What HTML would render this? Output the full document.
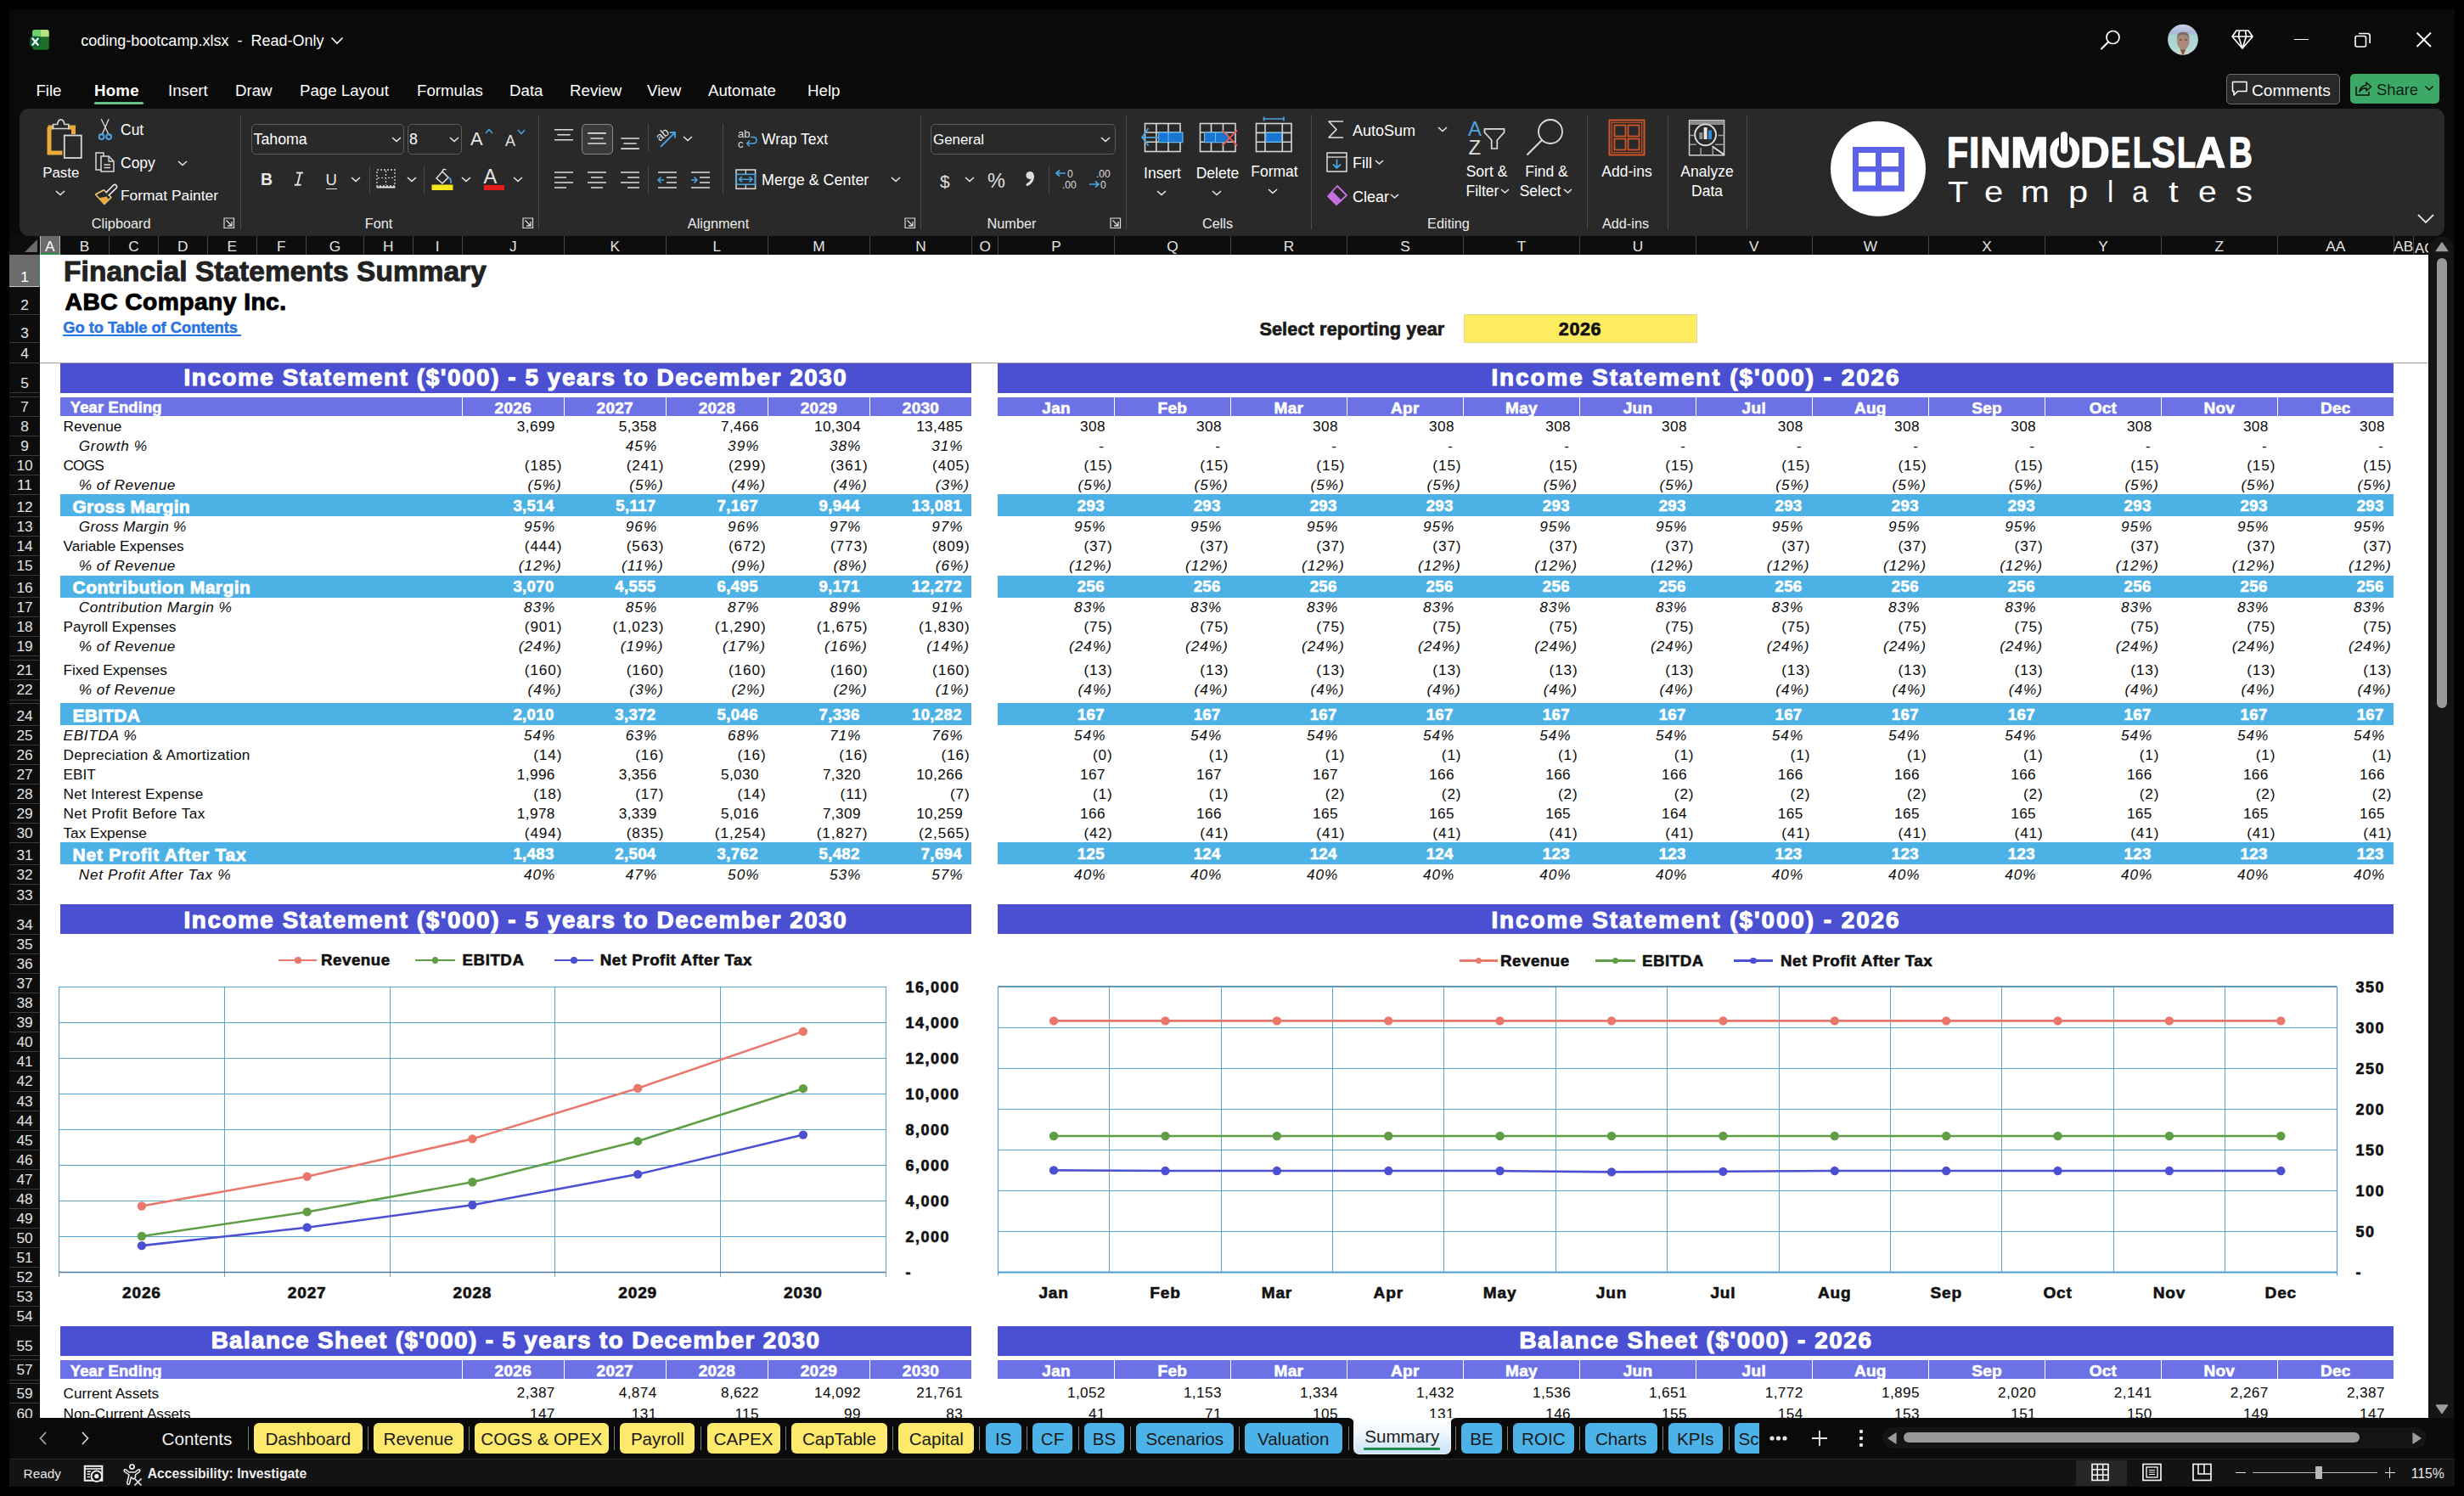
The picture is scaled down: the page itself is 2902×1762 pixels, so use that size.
<!DOCTYPE html><html><head><meta charset="utf-8"><title>coding-bootcamp.xlsx</title><style>
html,body{margin:0;padding:0}
body{width:2902px;height:1762px;background:#000;position:relative;overflow:hidden;font-family:"Liberation Sans",sans-serif}
.a{position:absolute}
.t{position:absolute;white-space:nowrap;line-height:1}
</style></head><body>
<div class="a" style="left:11.00px;top:11.00px;width:2880.00px;height:1740.00px;background:#0a0a0a;"></div>
<svg class="a" style="left:34px;top:34px;" width="26" height="26" viewBox="0 0 26 26">
<rect x="4.2" y="0.9" width="19.5" height="23.8" rx="2.6" fill="#1f6e2c"/>
<path d="M6.8 0.9 H13.6 V9.2 H4.2 V3.5 Q4.2 0.9 6.8 0.9 Z" fill="#6fd26c"/>
<path d="M13.6 0.9 H21.1 Q23.7 0.9 23.7 3.5 V9.2 H13.6 Z" fill="#b6e47a"/>
<rect x="1.1" y="8.7" width="12.4" height="12.2" rx="2.6" fill="#0c5a33"/>
<path d="M4.6 11.6 L10.6 18.7 M10.6 11.6 L4.6 18.7" stroke="#f4fff8" stroke-width="2.3" stroke-linecap="square"/>
</svg>
<div class="t" style="top:38.66px;font-size:18px;color:#ffffff;left:95.30px;white-space:pre;">coding-bootcamp.xlsx  -  Read-Only</div>
<svg class="a" style="left:389px;top:42px;" width="16" height="12" viewBox="0 0 16 12"><path d="M1.5 2.5 L8 9 L14.5 2.5" stroke="#fff" stroke-width="1.6" fill="none"/></svg>
<svg class="a" style="left:2472px;top:33px;" width="28" height="28" viewBox="0 0 28 28"><circle cx="16.5" cy="11" r="7.5" stroke="#fff" stroke-width="1.7" fill="none"/><path d="M11 16.5 L3 24.5" stroke="#fff" stroke-width="1.9" stroke-linecap="round"/></svg>
<svg class="a" style="left:2552px;top:28px;" width="38" height="38" viewBox="0 0 38 38"><defs><clipPath id="av"><circle cx="19" cy="18.6" r="17.9"/></clipPath>
<linearGradient id="avg" x1="0" y1="0" x2="0" y2="1"><stop offset="0" stop-color="#c9d2ee"/><stop offset="0.28" stop-color="#aab8d8"/><stop offset="0.36" stop-color="#a6d2d0"/><stop offset="1" stop-color="#b9dcd8"/></linearGradient></defs>
<g clip-path="url(#av)"><rect width="38" height="38" fill="url(#avg)"/>
<path d="M10 42 Q11 30 19 30 Q27 30 28 42 Z" fill="#d9cfc6"/><path d="M15.5 30 L19 38 L22.5 30 Z" fill="#7a5a48"/>
<ellipse cx="19.2" cy="20.5" rx="7.3" ry="10.2" fill="#ab8a7a"/><path d="M11.8 18 Q12 9 19.2 9.8 Q26.5 9 26.6 18 Q24 12.5 19.2 13 Q14 12.5 11.8 18 Z" fill="#7b6a66"/>
<rect x="14.5" y="18.2" width="3.2" height="1.3" fill="#5d4438"/><rect x="21" y="18.2" width="3.2" height="1.3" fill="#5d4438"/></g></svg>
<svg class="a" style="left:2627px;top:34px;" width="28" height="26" viewBox="0 0 28 26"><path d="M7 2 H21 L26 9 L14 23 L2 9 Z M2 9 H26 M10.5 2 L9.5 9 L14 23 L18.5 9 L17.5 2" stroke="#fff" stroke-width="1.7" fill="none" stroke-linejoin="round"/></svg>
<div class="a" style="left:2702.00px;top:45.50px;width:17.00px;height:1.70px;background:#fff;"></div>
<svg class="a" style="left:2772px;top:37px;" width="22" height="20" viewBox="0 0 22 20"><rect x="2" y="5.5" width="12.5" height="12.5" rx="2" stroke="#fff" stroke-width="1.6" fill="none"/><path d="M6 2.5 H16.5 Q19.2 2.5 19.2 5.2 V14" stroke="#fff" stroke-width="1.6" fill="none"/></svg>
<svg class="a" style="left:2844px;top:36px;" width="22" height="22" viewBox="0 0 22 22"><path d="M2.5 2.5 L19 19 M19 2.5 L2.5 19" stroke="#fff" stroke-width="1.8"/></svg>
<div class="t" style="top:97.77px;font-size:18.7px;color:#ffffff;left:42.40px;">File</div>
<div class="t" style="top:97.77px;font-size:18.7px;color:#ffffff;left:198.00px;">Insert</div>
<div class="t" style="top:97.77px;font-size:18.7px;color:#ffffff;left:277.00px;">Draw</div>
<div class="t" style="top:97.77px;font-size:18.7px;color:#ffffff;left:353.00px;">Page Layout</div>
<div class="t" style="top:97.77px;font-size:18.7px;color:#ffffff;left:491.00px;">Formulas</div>
<div class="t" style="top:97.77px;font-size:18.7px;color:#ffffff;left:600.00px;">Data</div>
<div class="t" style="top:97.77px;font-size:18.7px;color:#ffffff;left:671.00px;">Review</div>
<div class="t" style="top:97.77px;font-size:18.7px;color:#ffffff;left:762.00px;">View</div>
<div class="t" style="top:97.77px;font-size:18.7px;color:#ffffff;left:834.00px;">Automate</div>
<div class="t" style="top:97.77px;font-size:18.7px;color:#ffffff;left:951.00px;">Help</div>
<div class="t" style="top:97.77px;font-size:18.7px;color:#ffffff;font-weight:700;left:111.00px;letter-spacing:0.2px;">Home</div>
<div class="a" style="left:111.00px;top:119.50px;width:58.00px;height:3.30px;background:#66c18c;border-radius:2px;"></div>
<div class="a" style="left:2621.5px;top:87px;width:132px;height:33.5px;border:1px solid #6f6f6f;border-radius:5px;background:#282828"></div>
<svg class="a" style="left:2627px;top:93px;" width="22" height="22" viewBox="0 0 22 22"><path d="M2.5 3.5 H19 V14.5 H8.5 L4 19 V14.5 H2.5 Z" stroke="#fff" stroke-width="1.5" fill="none" stroke-linejoin="round"/></svg>
<div class="t" style="top:96.75px;font-size:19.2px;color:#ffffff;left:2652.00px;">Comments</div>
<div class="a" style="left:2768px;top:87px;width:104.6px;height:35.3px;border-radius:5px;background:#3caa66"></div>
<svg class="a" style="left:2772px;top:93px;" width="22" height="22" viewBox="0 0 22 22"><path d="M3 9 V19 H18 V15" stroke="#111" stroke-width="1.5" fill="none"/><path d="M7 15 Q8 8 15 7.5 V4 L20.5 9.2 L15 14 V10.8 Q10 10.5 7 15 Z" stroke="#111" stroke-width="1.5" fill="none" stroke-linejoin="round"/></svg>
<div class="t" style="top:97.42px;font-size:18.4px;color:#0c1f12;left:2799.00px;">Share</div>
<svg class="a" style="left:2855px;top:99px;" width="12" height="10" viewBox="0 0 12 10"><path d="M1.5 2.5 L6 7 L10.5 2.5" stroke="#111" stroke-width="1.5" fill="none"/></svg>
<div class="a" style="left:23px;top:128px;width:2855.5px;height:149.8px;background:#292929;border-radius:11px"></div>
<div class="a" style="left:282.70px;top:135.00px;width:1.00px;height:135.00px;background:#4b4b4b;"></div>
<div class="a" style="left:633.50px;top:135.00px;width:1.00px;height:135.00px;background:#4b4b4b;"></div>
<div class="a" style="left:1083.70px;top:135.00px;width:1.00px;height:135.00px;background:#4b4b4b;"></div>
<div class="a" style="left:1325.70px;top:135.00px;width:1.00px;height:135.00px;background:#4b4b4b;"></div>
<div class="a" style="left:1544.00px;top:135.00px;width:1.00px;height:135.00px;background:#4b4b4b;"></div>
<div class="a" style="left:1868.60px;top:135.00px;width:1.00px;height:135.00px;background:#4b4b4b;"></div>
<div class="a" style="left:1963.60px;top:135.00px;width:1.00px;height:135.00px;background:#4b4b4b;"></div>
<div class="a" style="left:2056.60px;top:135.00px;width:1.00px;height:135.00px;background:#4b4b4b;"></div>
<svg class="a" style="left:40px;top:130px;" width="70" height="70" viewBox="0 0 70 70">
<path d="M18 20 V50 H33.5" stroke="#eba93a" stroke-width="5" fill="none"/>
<path d="M16.5 20 H23 M40 20 H46.5 V28" stroke="#eba93a" stroke-width="5" fill="none"/>
<path d="M22.6 21.5 V16.5 H27.5 Q28.5 10.8 31.7 10.8 Q34.9 10.8 35.9 16.5 H40.8 V21.5 Z" stroke="#d4d4d4" stroke-width="1.7" fill="#292929"/>
<rect x="35.8" y="29.5" width="20" height="26.5" stroke="#d8d8d8" stroke-width="1.8" fill="#292929"/>
</svg>
<div class="t" style="top:196.19px;font-size:16.9px;color:#ffffff;left:-928.20px;width:2000px;text-align:center;">Paste</div>
<svg class="a" style="left:65.0px;top:222.5px;" width="12" height="9.0" viewBox="0 0 12 9.0"><path d="M1 2 L6.0 6.5 L11 2" stroke="#e6e6e6" stroke-width="1.6" fill="none"/></svg>
<svg class="a" style="left:110px;top:135px;" width="30" height="32" viewBox="0 0 30 32"><path d="M9.3 5.3 L18.6 24.5 M18.1 5.3 L9.8 24.5" stroke="#e0e0e0" stroke-width="1.3"/><circle cx="9.6" cy="26" r="2.9" stroke="#4aa3df" stroke-width="2" fill="none"/><circle cx="18.1" cy="26" r="2.9" stroke="#4aa3df" stroke-width="2" fill="none"/></svg>
<div class="t" style="top:145.19px;font-size:17.5px;color:#ffffff;left:142.00px;">Cut</div>
<svg class="a" style="left:111px;top:178px;" width="28" height="26" viewBox="0 0 28 26"><path d="M2 2 H11 V22 H2 Z" stroke="#d8d8d8" stroke-width="1.5" fill="none"/><path d="M8 6 H17 L23 12 V24 H8 Z" stroke="#d8d8d8" stroke-width="1.5" fill="#292929"/><path d="M17 6 V12 H23 M11.5 16 H19 M11.5 19.5 H19" stroke="#d8d8d8" stroke-width="1.3" fill="none"/></svg>
<div class="t" style="top:183.69px;font-size:17.5px;color:#ffffff;left:142.00px;">Copy</div>
<svg class="a" style="left:209.0px;top:187.5px;" width="12" height="9.0" viewBox="0 0 12 9.0"><path d="M1 2 L6.0 6.5 L11 2" stroke="#e6e6e6" stroke-width="1.6" fill="none"/></svg>
<svg class="a" style="left:111px;top:214px;" width="28" height="30" viewBox="0 0 28 30"><path d="M1.5 15 L11.3 9.8 L20 18.5 L11.8 26.3 Z" fill="#292929" stroke="#f0c870" stroke-width="1.6" stroke-linejoin="round"/><path d="M4.5 19.5 L14.5 17.5 L17 20.5 L11.8 25.5 Z" fill="#eba93a"/><path d="M13.6 13.1 L22.6 4.1 Q24.5 2.6 26 4.2 Q27.4 5.9 25.9 7.6 L16.8 16.3" stroke="#e6e6e6" stroke-width="1.6" fill="#292929" stroke-linejoin="round"/></svg>
<div class="t" style="top:221.77px;font-size:17.4px;color:#ffffff;left:142.00px;">Format Painter</div>
<div class="t" style="top:254.70px;font-size:16.3px;color:#ececec;left:-857.30px;width:2000px;text-align:center;">Clipboard</div>
<svg class="a" style="left:263px;top:256px;" width="14" height="14" viewBox="0 0 14 14"><path d="M1 1 H12.5 V12.5 H1 Z" stroke="#dcdcdc" stroke-width="1.2" fill="none"/><path d="M3.5 3.5 L10 10 M10 5 V10 H5" stroke="#dcdcdc" stroke-width="1.3" fill="none"/></svg>
<div class="a" style="left:295.5px;top:146px;width:178px;height:34px;border:1px solid #5c5c5c;border-radius:5px;background:transparent"></div>
<div class="t" style="top:156.43px;font-size:17.8px;color:#ffffff;left:298.50px;">Tahoma</div>
<svg class="a" style="left:460.5px;top:159.5px;" width="12" height="9.0" viewBox="0 0 12 9.0"><path d="M1 2 L6.0 6.5 L11 2" stroke="#e6e6e6" stroke-width="1.6" fill="none"/></svg>
<div class="a" style="left:479.5px;top:146px;width:62px;height:34px;border:1px solid #5c5c5c;border-radius:5px;background:transparent"></div>
<div class="t" style="top:156.43px;font-size:17.8px;color:#ffffff;left:482.00px;">8</div>
<svg class="a" style="left:528.5px;top:159.5px;" width="12" height="9.0" viewBox="0 0 12 9.0"><path d="M1 2 L6.0 6.5 L11 2" stroke="#e6e6e6" stroke-width="1.6" fill="none"/></svg>
<div class="t" style="top:153.38px;font-size:22px;color:#e6e6e6;left:554.00px;">A</div>
<svg class="a" style="left:570px;top:150px;" width="12" height="10" viewBox="0 0 12 10"><path d="M2 7 L6 2.5 L10 7" stroke="#4aa3df" stroke-width="1.6" fill="none"/></svg>
<div class="t" style="top:156.76px;font-size:18px;color:#e6e6e6;left:595.00px;">A</div>
<svg class="a" style="left:608px;top:150px;" width="12" height="10" viewBox="0 0 12 10"><path d="M2 3 L6 7.5 L10 3" stroke="#4aa3df" stroke-width="1.6" fill="none"/></svg>
<div class="t" style="top:202.49px;font-size:19.5px;color:#e6e6e6;font-weight:700;left:307.00px;">B</div>
<svg class="a" style="left:340px;top:198px;" width="24" height="24" viewBox="0 0 24 24"><path d="M9 5.5 H17 M13.8 5.5 L10.2 19.7 M6.8 19.7 H14.6" stroke="#e0e0e0" stroke-width="1.9" fill="none"/></svg>
<div class="t" style="top:203.34px;font-size:18.5px;color:#e6e6e6;left:383.50px;">U</div>
<div class="a" style="left:383.50px;top:221.50px;width:13.50px;height:1.50px;background:#e6e6e6;"></div>
<svg class="a" style="left:413.0px;top:206.5px;" width="12" height="9.0" viewBox="0 0 12 9.0"><path d="M1 2 L6.0 6.5 L11 2" stroke="#e6e6e6" stroke-width="1.6" fill="none"/></svg>
<div class="a" style="left:434.60px;top:196.00px;width:1.00px;height:32.00px;background:#4b4b4b;"></div>
<svg class="a" style="left:442px;top:198px;" width="26" height="26" viewBox="0 0 26 26"><rect x="2" y="2" width="21" height="19" stroke="#d8d8d8" stroke-width="1.3" fill="none" stroke-dasharray="2 2"/><path d="M12.5 3 V20 M3 11.5 H22" stroke="#d8d8d8" stroke-width="1.2" stroke-dasharray="2 2"/><path d="M1.5 22.5 H23.5" stroke="#e6e6e6" stroke-width="2"/></svg>
<svg class="a" style="left:478.5px;top:206.5px;" width="12" height="9.0" viewBox="0 0 12 9.0"><path d="M1 2 L6.0 6.5 L11 2" stroke="#e6e6e6" stroke-width="1.6" fill="none"/></svg>
<div class="a" style="left:499.00px;top:196.00px;width:1.00px;height:32.00px;background:#4b4b4b;"></div>
<svg class="a" style="left:507px;top:197px;" width="28" height="30" viewBox="0 0 28 30"><path d="M7 13 L14 5 L21 12 L14 19 Z" stroke="#e6e6e6" stroke-width="1.5" fill="none"/><path d="M14 5 Q15 1 18.5 3" stroke="#e6e6e6" stroke-width="1.4" fill="none"/><path d="M21 12 Q25 14 24 19" stroke="#4aa3df" stroke-width="1.8" fill="none"/><rect x="1.5" y="20.5" width="25" height="6.5" fill="#f5e71b"/></svg>
<svg class="a" style="left:543.0px;top:206.5px;" width="12" height="9.0" viewBox="0 0 12 9.0"><path d="M1 2 L6.0 6.5 L11 2" stroke="#e6e6e6" stroke-width="1.6" fill="none"/></svg>
<div class="t" style="top:197.41px;font-size:23.5px;color:#e6e6e6;left:569.50px;">A</div>
<div class="a" style="left:569.50px;top:217.50px;width:24.50px;height:6.80px;background:#e51b1b;"></div>
<svg class="a" style="left:604.0px;top:206.5px;" width="12" height="9.0" viewBox="0 0 12 9.0"><path d="M1 2 L6.0 6.5 L11 2" stroke="#e6e6e6" stroke-width="1.6" fill="none"/></svg>
<div class="t" style="top:254.70px;font-size:16.3px;color:#ececec;left:-554.00px;width:2000px;text-align:center;">Font</div>
<svg class="a" style="left:615px;top:256px;" width="14" height="14" viewBox="0 0 14 14"><path d="M1 1 H12.5 V12.5 H1 Z" stroke="#dcdcdc" stroke-width="1.2" fill="none"/><path d="M3.5 3.5 L10 10 M10 5 V10 H5" stroke="#dcdcdc" stroke-width="1.3" fill="none"/></svg>
<svg class="a" style="left:650px;top:146px;" width="30" height="30" viewBox="0 0 30 30"><path d="M3 6.7 H25 M6.4 12.8 H21.7 M3 18.8 H25 " stroke="#dedede" stroke-width="1.6" fill="none"/></svg>
<div class="a" style="left:685px;top:146px;width:35px;height:34px;border:1px solid #8a8a8a;border-radius:5px;background:#3a3a3a"></div>
<svg class="a" style="left:688px;top:149px;" width="30" height="30" viewBox="0 0 30 30"><path d="M4.2 7.9 H25.9 M7.4 14 H22.7 M4.2 20 H25.9 " stroke="#dedede" stroke-width="1.6" fill="none"/></svg>
<svg class="a" style="left:729px;top:149px;" width="30" height="30" viewBox="0 0 30 30"><path d="M2.3 14 H23.9 M5.4 20 H20.7 M2.3 26.1 H23.9 " stroke="#dedede" stroke-width="1.6" fill="none"/></svg>
<div class="a" style="left:763.00px;top:146.00px;width:1.00px;height:32.00px;background:#4b4b4b;"></div>
<svg class="a" style="left:770px;top:146px;" width="32" height="32" viewBox="0 0 32 32"><text x="2" y="17" transform="rotate(-40 10 12)" font-size="14" fill="#dedede" font-family="Liberation Sans">ab</text><path d="M8 27 L25 10 M18.5 10 H25 V16.5" stroke="#4aa3df" stroke-width="1.8" fill="none"/></svg>
<svg class="a" style="left:804.0px;top:158.5px;" width="12" height="9.0" viewBox="0 0 12 9.0"><path d="M1 2 L6.0 6.5 L11 2" stroke="#e6e6e6" stroke-width="1.6" fill="none"/></svg>
<svg class="a" style="left:650px;top:197px;" width="30" height="30" viewBox="0 0 30 30"><path d="M3 6 H25 M3 12 H17 M3 18 H25 M3 24 H17 " stroke="#dedede" stroke-width="1.6" fill="none"/></svg>
<svg class="a" style="left:689px;top:197px;" width="30" height="30" viewBox="0 0 30 30"><path d="M3 6 H25 M7 12 H21 M3 18 H25 M7 24 H21 " stroke="#dedede" stroke-width="1.6" fill="none"/></svg>
<svg class="a" style="left:728px;top:197px;" width="30" height="30" viewBox="0 0 30 30"><path d="M3 6 H25 M11 12 H25 M3 18 H25 M11 24 H25 " stroke="#dedede" stroke-width="1.6" fill="none"/></svg>
<div class="a" style="left:763.00px;top:196.00px;width:1.00px;height:32.00px;background:#4b4b4b;"></div>
<svg class="a" style="left:772px;top:197px;" width="30" height="30" viewBox="0 0 30 30"><path d="M3 6 H25 M13 12 H25 M13 18 H25 M3 24 H25" stroke="#dedede" stroke-width="1.6"/><path d="M10 15 H3 M6.5 11.5 L3 15 L6.5 18.5" stroke="#4aa3df" stroke-width="1.6" fill="none"/></svg>
<svg class="a" style="left:811px;top:197px;" width="30" height="30" viewBox="0 0 30 30"><path d="M3 6 H25 M13 12 H25 M13 18 H25 M3 24 H25" stroke="#dedede" stroke-width="1.6"/><path d="M3 15 H10 M6.5 11.5 L10 15 L6.5 18.5" stroke="#4aa3df" stroke-width="1.6" fill="none"/></svg>
<div class="a" style="left:851.00px;top:146.00px;width:1.00px;height:82.00px;background:#4b4b4b;"></div>
<svg class="a" style="left:868px;top:151px;" width="26" height="26" viewBox="0 0 26 26"><text x="1" y="11" font-size="13" fill="#dedede" font-family="Liberation Sans">ab</text><text x="1" y="23" font-size="13" fill="#dedede" font-family="Liberation Sans">c</text><path d="M13 18 H19 Q23 18 23 14 Q23 10.5 19 10.5 H16 M11.5 18 L15 14.5 M11.5 18 L15 21.5" stroke="#4aa3df" stroke-width="1.6" fill="none"/></svg>
<div class="t" style="top:156.19px;font-size:17.5px;color:#ffffff;left:897.00px;">Wrap Text</div>
<svg class="a" style="left:865px;top:197px;" width="28" height="28" viewBox="0 0 28 28"><rect x="2" y="3" width="22.6" height="22.3" stroke="#dedede" stroke-width="1.5" fill="none"/><path d="M13.3 3 V8.5 M13.3 20 V25.3" stroke="#dedede" stroke-width="1.3"/><rect x="2.4" y="8.3" width="21.8" height="11.9" stroke="#4aa3df" stroke-width="1.6" fill="#292929"/><path d="M5.5 14.2 H21 M9 11 L5.5 14.2 L9 17.4 M17.5 11 L21 14.2 L17.5 17.4" stroke="#4aa3df" stroke-width="1.6" fill="none"/></svg>
<div class="t" style="top:203.85px;font-size:17.9px;color:#ffffff;left:897.00px;">Merge &amp; Center</div>
<svg class="a" style="left:1048.5px;top:206.5px;" width="12" height="9.0" viewBox="0 0 12 9.0"><path d="M1 2 L6.0 6.5 L11 2" stroke="#e6e6e6" stroke-width="1.6" fill="none"/></svg>
<div class="t" style="top:254.70px;font-size:16.3px;color:#ececec;left:-154.00px;width:2000px;text-align:center;">Alignment</div>
<svg class="a" style="left:1065px;top:256px;" width="14" height="14" viewBox="0 0 14 14"><path d="M1 1 H12.5 V12.5 H1 Z" stroke="#dcdcdc" stroke-width="1.2" fill="none"/><path d="M3.5 3.5 L10 10 M10 5 V10 H5" stroke="#dcdcdc" stroke-width="1.3" fill="none"/></svg>
<div class="a" style="left:1096px;top:146px;width:216px;height:34px;border:1px solid #5c5c5c;border-radius:5px;background:transparent"></div>
<div class="t" style="top:156.69px;font-size:16.9px;color:#ffffff;left:1099.00px;">General</div>
<svg class="a" style="left:1296.0px;top:159.5px;" width="12" height="9.0" viewBox="0 0 12 9.0"><path d="M1 2 L6.0 6.5 L11 2" stroke="#e6e6e6" stroke-width="1.6" fill="none"/></svg>
<div class="t" style="top:203.22px;font-size:21px;color:#dedede;left:1107.00px;">$</div>
<svg class="a" style="left:1136.0px;top:206.5px;" width="12" height="9.0" viewBox="0 0 12 9.0"><path d="M1 2 L6.0 6.5 L11 2" stroke="#e6e6e6" stroke-width="1.6" fill="none"/></svg>
<div class="t" style="top:201.61px;font-size:23.5px;color:#dedede;left:1163.00px;">%</div>
<svg class="a" style="left:1204px;top:198px;" width="20" height="26" viewBox="0 0 20 26"><circle cx="9" cy="8.5" r="4.6" fill="#dedede"/><path d="M12.6 9.5 Q12.5 16 6 19.5" stroke="#dedede" stroke-width="3" fill="none" stroke-linecap="round"/></svg>
<div class="a" style="left:1235.00px;top:196.00px;width:1.00px;height:32.00px;background:#4b4b4b;"></div>
<svg class="a" style="left:1242px;top:196px;" width="30" height="32" viewBox="0 0 30 32"><text x="15" y="13" font-size="12" fill="#dedede" font-family="Liberation Sans">0</text><text x="9" y="26" font-size="12" fill="#dedede" font-family="Liberation Sans">.00</text><path d="M13 8 H2 M6 4.5 L2 8 L6 11.5" stroke="#4aa3df" stroke-width="1.7" fill="none"/></svg>
<svg class="a" style="left:1281px;top:196px;" width="30" height="32" viewBox="0 0 30 32"><text x="10" y="13" font-size="12" fill="#dedede" font-family="Liberation Sans">.00</text><text x="15" y="26" font-size="12" fill="#dedede" font-family="Liberation Sans">0</text><path d="M2 21 H13 M9 17.5 L13 21 L9 24.5" stroke="#4aa3df" stroke-width="1.7" fill="none"/></svg>
<div class="t" style="top:254.70px;font-size:16.3px;color:#ececec;left:191.50px;width:2000px;text-align:center;">Number</div>
<svg class="a" style="left:1307px;top:256px;" width="14" height="14" viewBox="0 0 14 14"><path d="M1 1 H12.5 V12.5 H1 Z" stroke="#dcdcdc" stroke-width="1.2" fill="none"/><path d="M3.5 3.5 L10 10 M10 5 V10 H5" stroke="#dcdcdc" stroke-width="1.3" fill="none"/></svg>
<svg class="a" style="left:1340px;top:130px;" width="190" height="52" viewBox="0 0 190 52">
<rect x="8.5" y="15.5" width="41.5" height="33" stroke="#d6d6d6" stroke-width="1.6" fill="none"/>
<path d="M21.8 15.5 V48.5 M36 15.5 V48.5 M8.5 26 H50 M8.5 37.3 H50" stroke="#d6d6d6" stroke-width="1.6" fill="none"/>
<rect x="24.6" y="26" width="28.4" height="11.7" fill="#1a74d1" stroke="#6bbcf0" stroke-width="1.1"/>
<path d="M36 26 V37.7" stroke="#6bbcf0" stroke-width="1.1"/>
<path d="M25 31.8 H5.5 M12.5 21 L5 31.8 L12.5 41.5" stroke="#4aa3df" stroke-width="1.7" fill="none"/>
<rect x="73.5" y="15.5" width="41.5" height="33" stroke="#d6d6d6" stroke-width="1.6" fill="none"/>
<path d="M86.5 15.5 V48.5 M100.5 15.5 V48.5 M73.5 26 H115 M73.5 37.3 H115" stroke="#d6d6d6" stroke-width="1.6" fill="none"/>
<path d="M78.6 26 H103.8 L108 31.8 L103.8 37.7 H78.6 Z" fill="#1a74d1" stroke="#6bbcf0" stroke-width="1.1"/>
<path d="M91.5 26 V37.7" stroke="#6bbcf0" stroke-width="1.1"/>
<path d="M99.5 23.5 L117 41.5 M117 23.5 L99.5 41.5" stroke="#e05a52" stroke-width="1.8"/>
<rect x="139.5" y="15.5" width="41.5" height="33" stroke="#d6d6d6" stroke-width="1.6" fill="none"/>
<path d="M150 15.5 V48.5 M170.3 15.5 V48.5 M139.5 26.4 H181 M139.5 37.3 H181" stroke="#d6d6d6" stroke-width="1.6" fill="none"/>
<rect x="150.8" y="26.4" width="18.7" height="10.9" fill="#1a74d1" stroke="#6bbcf0" stroke-width="1.1"/>
<path d="M148.5 10 H172 M148.5 7.5 V12.5 M172 7.5 V12.5" stroke="#4aa3df" stroke-width="1.7"/>
</svg>
<div class="t" style="top:196.19px;font-size:17.5px;color:#ffffff;left:369.00px;width:2000px;text-align:center;">Insert</div>
<svg class="a" style="left:1362.0px;top:222.5px;" width="12" height="9.0" viewBox="0 0 12 9.0"><path d="M1 2 L6.0 6.5 L11 2" stroke="#e6e6e6" stroke-width="1.6" fill="none"/></svg>
<div class="t" style="top:196.19px;font-size:17.5px;color:#ffffff;left:434.00px;width:2000px;text-align:center;">Delete</div>
<svg class="a" style="left:1427.0px;top:222.5px;" width="12" height="9.0" viewBox="0 0 12 9.0"><path d="M1 2 L6.0 6.5 L11 2" stroke="#e6e6e6" stroke-width="1.6" fill="none"/></svg>
<div class="t" style="top:194.19px;font-size:17.5px;color:#ffffff;left:501.00px;width:2000px;text-align:center;">Format</div>
<svg class="a" style="left:1493.0px;top:220.5px;" width="12" height="9.0" viewBox="0 0 12 9.0"><path d="M1 2 L6.0 6.5 L11 2" stroke="#e6e6e6" stroke-width="1.6" fill="none"/></svg>
<div class="t" style="top:254.70px;font-size:16.3px;color:#ececec;left:434.00px;width:2000px;text-align:center;">Cells</div>
<svg class="a" style="left:1562px;top:140px;" width="24" height="26" viewBox="0 0 24 26"><path d="M20 3 H3 L12 12.5 L3 22 H20" stroke="#dedede" stroke-width="1.7" fill="none" stroke-linejoin="round"/></svg>
<div class="t" style="top:144.76px;font-size:18px;color:#ffffff;left:1593.00px;">AutoSum</div>
<svg class="a" style="left:1693.0px;top:148.0px;" width="12" height="9.0" viewBox="0 0 12 9.0"><path d="M1 2 L6.0 6.5 L11 2" stroke="#e6e6e6" stroke-width="1.6" fill="none"/></svg>
<svg class="a" style="left:1561px;top:178px;" width="28" height="27" viewBox="0 0 28 27"><rect x="2" y="2" width="23" height="22" stroke="#dedede" stroke-width="1.5" fill="none"/><path d="M2 7 H25" stroke="#dedede" stroke-width="1.3"/><path d="M13.5 9.5 V20 M9 15.5 L13.5 20 L18 15.5" stroke="#4aa3df" stroke-width="1.8" fill="none"/></svg>
<div class="t" style="top:182.76px;font-size:18px;color:#ffffff;left:1593.00px;">Fill</div>
<svg class="a" style="left:1618.5px;top:186.75px;" width="11" height="8.5" viewBox="0 0 11 8.5"><path d="M1 2 L5.5 6.0 L10 2" stroke="#e6e6e6" stroke-width="1.6" fill="none"/></svg>
<svg class="a" style="left:1561px;top:216px;" width="28" height="28" viewBox="0 0 28 28"><path d="M14 3 L25 14 L13 25 L3 15 Z" stroke="#c86fe0" stroke-width="1.8" fill="none" stroke-linejoin="round"/><path d="M8 10 L19 21" stroke="#c86fe0" stroke-width="1.6"/><path d="M3 15 L8 10 L19 21 L13 25 Z" fill="#c86fe0"/></svg>
<div class="t" style="top:222.76px;font-size:18px;color:#ffffff;left:1593.00px;">Clear</div>
<svg class="a" style="left:1636.5px;top:226.75px;" width="11" height="8.5" viewBox="0 0 11 8.5"><path d="M1 2 L5.5 6.0 L10 2" stroke="#e6e6e6" stroke-width="1.6" fill="none"/></svg>
<svg class="a" style="left:1720px;top:130px;" width="60" height="60" viewBox="0 0 60 60"><text x="9" y="30" font-size="24" fill="#4aa3df" font-family="Liberation Sans">A</text><text x="9.5" y="51.5" font-size="24" fill="#dedede" font-family="Liberation Sans">Z</text><path d="M28.5 21.8 H51.5 V26 L43.3 35 V45 H36.7 V35 L28.5 26 Z" stroke="#dedede" stroke-width="1.7" fill="none" stroke-linejoin="miter"/></svg>
<div class="t" style="top:194.19px;font-size:17.5px;color:#ffffff;left:751.00px;width:2000px;text-align:center;">Sort &amp;</div>
<div class="t" style="top:217.19px;font-size:17.5px;color:#ffffff;left:746.00px;width:2000px;text-align:center;">Filter</div>
<svg class="a" style="left:1766.5px;top:221.25px;" width="11" height="8.5" viewBox="0 0 11 8.5"><path d="M1 2 L5.5 6.0 L10 2" stroke="#e6e6e6" stroke-width="1.6" fill="none"/></svg>
<svg class="a" style="left:1796px;top:139px;" width="50" height="46" viewBox="0 0 50 46"><circle cx="30" cy="16" r="14" stroke="#dedede" stroke-width="1.8" fill="none"/><path d="M20 26 L3 43" stroke="#dedede" stroke-width="2" stroke-linecap="round"/></svg>
<div class="t" style="top:194.19px;font-size:17.5px;color:#ffffff;left:821.50px;width:2000px;text-align:center;">Find &amp;</div>
<div class="t" style="top:217.19px;font-size:17.5px;color:#ffffff;left:814.00px;width:2000px;text-align:center;">Select</div>
<svg class="a" style="left:1840.5px;top:221.25px;" width="11" height="8.5" viewBox="0 0 11 8.5"><path d="M1 2 L5.5 6.0 L10 2" stroke="#e6e6e6" stroke-width="1.6" fill="none"/></svg>
<div class="t" style="top:254.70px;font-size:16.3px;color:#ececec;left:706.00px;width:2000px;text-align:center;">Editing</div>
<svg class="a" style="left:1880px;top:130px;" width="70" height="60" viewBox="0 0 70 60"><rect x="15.5" y="11.5" width="41" height="41" stroke="#d2552b" stroke-width="2" fill="none"/><rect x="18.3" y="14.3" width="35.4" height="35.4" stroke="#d2552b" stroke-width="1.1" fill="none"/><rect x="21.5" y="17.5" width="13" height="13" stroke="#d2552b" stroke-width="1.8" fill="none"/><rect x="37.5" y="17.5" width="13" height="13" stroke="#d2552b" stroke-width="1.8" fill="none"/><rect x="21.5" y="33.5" width="13" height="13" stroke="#d2552b" stroke-width="1.8" fill="none"/><rect x="37.5" y="33.5" width="13" height="13" stroke="#d2552b" stroke-width="1.8" fill="none"/></svg>
<div class="t" style="top:194.19px;font-size:17.5px;color:#ffffff;left:916.00px;width:2000px;text-align:center;">Add-ins</div>
<div class="t" style="top:254.70px;font-size:16.3px;color:#ececec;left:914.50px;width:2000px;text-align:center;">Add-ins</div>
<svg class="a" style="left:1980px;top:130px;" width="60" height="60" viewBox="0 0 60 60"><rect x="9.6" y="11.8" width="41" height="41" stroke="#d4d4d4" stroke-width="1.5" fill="none"/><rect x="10" y="12" width="40.4" height="5" fill="#8d8d8d"/><path d="M10 29.5 H15.5 M43.5 29.5 H50.5 M10 40.2 H18 M40 40.2 H50.5 M23.2 44 V52.5 M37.3 44 V52.5" stroke="#9a9a9a" stroke-width="1.6"/><circle cx="28.6" cy="28.8" r="12.4" stroke="#e0e0e0" stroke-width="1.9" fill="#292929"/><rect x="21.3" y="26" width="4" height="8" fill="#8d8d8d"/><rect x="26.6" y="20" width="4" height="14" fill="#e6e6e6"/><rect x="32" y="23.4" width="4" height="10.6" fill="#2f8de0"/><path d="M36.6 42.2 L50.7 52.2" stroke="#e0e0e0" stroke-width="2"/></svg>
<div class="t" style="top:194.19px;font-size:17.5px;color:#ffffff;left:1010.50px;width:2000px;text-align:center;">Analyze</div>
<div class="t" style="top:217.19px;font-size:17.5px;color:#ffffff;left:1010.50px;width:2000px;text-align:center;">Data</div>
<svg class="a" style="left:2150px;top:140px;" width="122" height="122" viewBox="0 0 122 122"><circle cx="62" cy="58.7" r="56" fill="#fff"/><rect x="32" y="33" width="61" height="52.5" fill="#5b62e6"/><rect x="39" y="40" width="20" height="16" fill="#fff"/><rect x="66" y="40" width="20" height="16" fill="#fff"/><rect x="39" y="62.5" width="20" height="16" fill="#fff"/><rect x="66" y="62.5" width="20" height="16" fill="#fff"/></svg>
<div class="t" style="left:2293.24px;top:155.41px;font-size:50.2px;color:#fff;font-weight:700;transform:scaleX(0.816);transform-origin:0 0;-webkit-text-stroke:1.4px #fff">F</div>
<div class="t" style="left:2319.04px;top:155.41px;font-size:50.2px;color:#fff;font-weight:700;transform:scaleX(0.884);transform-origin:0 0;-webkit-text-stroke:1.4px #fff">I</div>
<div class="t" style="left:2331.68px;top:155.41px;font-size:50.2px;color:#fff;font-weight:700;transform:scaleX(1.003);transform-origin:0 0;-webkit-text-stroke:1.4px #fff">N</div>
<div class="t" style="left:2368.48px;top:155.41px;font-size:50.2px;color:#fff;font-weight:700;transform:scaleX(1.070);transform-origin:0 0;-webkit-text-stroke:1.4px #fff">M</div>
<div class="t" style="left:2412.77px;top:155.41px;font-size:50.2px;color:#fff;font-weight:700;transform:scaleX(0.962);transform-origin:0 0;-webkit-text-stroke:1.4px #fff">O</div>
<div class="t" style="left:2450.41px;top:155.41px;font-size:50.2px;color:#fff;font-weight:700;transform:scaleX(0.961);transform-origin:0 0;-webkit-text-stroke:1.4px #fff">D</div>
<div class="t" style="left:2486.23px;top:155.41px;font-size:50.2px;color:#fff;font-weight:700;transform:scaleX(0.687);transform-origin:0 0;-webkit-text-stroke:1.4px #fff">E</div>
<div class="t" style="left:2511.90px;top:155.41px;font-size:50.2px;color:#fff;font-weight:700;transform:scaleX(0.697);transform-origin:0 0;-webkit-text-stroke:1.4px #fff">L</div>
<div class="t" style="left:2533.71px;top:155.41px;font-size:50.2px;color:#fff;font-weight:700;transform:scaleX(0.840);transform-origin:0 0;-webkit-text-stroke:1.4px #fff">S</div>
<div class="t" style="left:2563.53px;top:155.41px;font-size:50.2px;color:#fff;font-weight:700;transform:scaleX(0.720);transform-origin:0 0;-webkit-text-stroke:1.4px #fff">L</div>
<div class="t" style="left:2586.33px;top:155.41px;font-size:50.2px;color:#fff;font-weight:700;transform:scaleX(0.967);transform-origin:0 0;-webkit-text-stroke:1.4px #fff">A</div>
<div class="t" style="left:2624.60px;top:155.41px;font-size:50.2px;color:#fff;font-weight:700;transform:scaleX(0.765);transform-origin:0 0;-webkit-text-stroke:1.4px #fff">B</div>
<div class="a" style="left:2425.30px;top:150.00px;width:12.10px;height:22.00px;background:#292929;"></div>
<div class="a" style="left:2427.3px;top:154.7px;width:8.1px;height:26.8px;background:#fff;border-radius:4px"></div>
<div class="t" style="left:2294.30px;top:207.67px;font-size:35px;color:#fff;font-weight:400;transform:scaleX(1.137);transform-origin:0 0;-webkit-text-stroke:0px #fff">T</div>
<div class="t" style="left:2336.89px;top:207.67px;font-size:35px;color:#fff;font-weight:400;transform:scaleX(1.143);transform-origin:0 0;-webkit-text-stroke:0px #fff">e</div>
<div class="t" style="left:2380.45px;top:207.67px;font-size:35px;color:#fff;font-weight:400;transform:scaleX(1.159);transform-origin:0 0;-webkit-text-stroke:0px #fff">m</div>
<div class="t" style="left:2435.98px;top:207.67px;font-size:35px;color:#fff;font-weight:400;transform:scaleX(1.192);transform-origin:0 0;-webkit-text-stroke:0px #fff">p</div>
<div class="t" style="left:2481.60px;top:207.67px;font-size:35px;color:#fff;font-weight:400;transform:scaleX(0.926);transform-origin:0 0;-webkit-text-stroke:0px #fff">l</div>
<div class="t" style="left:2511.05px;top:207.67px;font-size:35px;color:#fff;font-weight:400;transform:scaleX(0.974);transform-origin:0 0;-webkit-text-stroke:0px #fff">a</div>
<div class="t" style="left:2554.30px;top:207.67px;font-size:35px;color:#fff;font-weight:400;transform:scaleX(1.203);transform-origin:0 0;-webkit-text-stroke:0px #fff">t</div>
<div class="t" style="left:2588.71px;top:207.67px;font-size:35px;color:#fff;font-weight:400;transform:scaleX(1.120);transform-origin:0 0;-webkit-text-stroke:0px #fff">e</div>
<div class="t" style="left:2632.59px;top:207.67px;font-size:35px;color:#fff;font-weight:400;transform:scaleX(1.138);transform-origin:0 0;-webkit-text-stroke:0px #fff">s</div>
<svg class="a" style="left:2845px;top:250px;" width="24" height="16" viewBox="0 0 24 16"><path d="M3 3 L12 12 L21 3" stroke="#e6e6e6" stroke-width="1.8" fill="none"/></svg>
<div class="a" style="left:11.00px;top:278.00px;width:2849.00px;height:22.00px;background:#0d0d0d;"></div>
<svg class="a" style="left:28px;top:281px;" width="18" height="17" viewBox="0 0 18 17"><path d="M16 1 V16 H1 Z" fill="#6a6a6a"/></svg>
<div class="a" style="left:2842px;top:278px;width:18px;height:22px;overflow:hidden"><div class="t" style="left:2px;top:283.5px;top:5.5px;font-size:17px;color:#e3e3e3">AC</div></div>
<div class="a" style="left:47.00px;top:278.00px;width:23.60px;height:22.00px;background:#6b6b6b;"></div>
<div class="a" style="left:47.00px;top:298.30px;width:24.10px;height:2.20px;background:#2e8a4e;"></div>
<div class="a" style="left:46.50px;top:278.00px;width:1.00px;height:22.00px;background:#bdbdbd;"></div>
<div class="a" style="left:70.10px;top:278.00px;width:1.00px;height:22.00px;background:#bdbdbd;"></div>
<div class="t" style="top:281.56px;font-size:17.3px;color:#ffffff;left:-941.20px;width:2000px;text-align:center;">A</div>
<div class="a" style="left:128.10px;top:278.00px;width:1.00px;height:22.00px;background:#454545;"></div>
<div class="t" style="top:281.56px;font-size:17.3px;color:#e3e3e3;left:-900.40px;width:2000px;text-align:center;">B</div>
<div class="a" style="left:185.80px;top:278.00px;width:1.00px;height:22.00px;background:#454545;"></div>
<div class="t" style="top:281.56px;font-size:17.3px;color:#e3e3e3;left:-842.55px;width:2000px;text-align:center;">C</div>
<div class="a" style="left:243.70px;top:278.00px;width:1.00px;height:22.00px;background:#454545;"></div>
<div class="t" style="top:281.56px;font-size:17.3px;color:#e3e3e3;left:-784.75px;width:2000px;text-align:center;">D</div>
<div class="a" style="left:301.70px;top:278.00px;width:1.00px;height:22.00px;background:#454545;"></div>
<div class="t" style="top:281.56px;font-size:17.3px;color:#e3e3e3;left:-726.80px;width:2000px;text-align:center;">E</div>
<div class="a" style="left:359.90px;top:278.00px;width:1.00px;height:22.00px;background:#454545;"></div>
<div class="t" style="top:281.56px;font-size:17.3px;color:#e3e3e3;left:-668.70px;width:2000px;text-align:center;">F</div>
<div class="a" style="left:427.90px;top:278.00px;width:1.00px;height:22.00px;background:#454545;"></div>
<div class="t" style="top:281.56px;font-size:17.3px;color:#e3e3e3;left:-605.60px;width:2000px;text-align:center;">G</div>
<div class="a" style="left:485.60px;top:278.00px;width:1.00px;height:22.00px;background:#454545;"></div>
<div class="t" style="top:281.56px;font-size:17.3px;color:#e3e3e3;left:-542.75px;width:2000px;text-align:center;">H</div>
<div class="a" style="left:543.80px;top:278.00px;width:1.00px;height:22.00px;background:#454545;"></div>
<div class="t" style="top:281.56px;font-size:17.3px;color:#e3e3e3;left:-484.80px;width:2000px;text-align:center;">I</div>
<div class="a" style="left:663.80px;top:278.00px;width:1.00px;height:22.00px;background:#454545;"></div>
<div class="t" style="top:281.56px;font-size:17.3px;color:#e3e3e3;left:-395.70px;width:2000px;text-align:center;">J</div>
<div class="a" style="left:783.70px;top:278.00px;width:1.00px;height:22.00px;background:#454545;"></div>
<div class="t" style="top:281.56px;font-size:17.3px;color:#e3e3e3;left:-275.75px;width:2000px;text-align:center;">K</div>
<div class="a" style="left:904.00px;top:278.00px;width:1.00px;height:22.00px;background:#454545;"></div>
<div class="t" style="top:281.56px;font-size:17.3px;color:#e3e3e3;left:-155.65px;width:2000px;text-align:center;">L</div>
<div class="a" style="left:1023.90px;top:278.00px;width:1.00px;height:22.00px;background:#454545;"></div>
<div class="t" style="top:281.56px;font-size:17.3px;color:#e3e3e3;left:-35.55px;width:2000px;text-align:center;">M</div>
<div class="a" style="left:1144.10px;top:278.00px;width:1.00px;height:22.00px;background:#454545;"></div>
<div class="t" style="top:281.56px;font-size:17.3px;color:#e3e3e3;left:84.50px;width:2000px;text-align:center;">N</div>
<div class="a" style="left:1175.20px;top:278.00px;width:1.00px;height:22.00px;background:#454545;"></div>
<div class="t" style="top:281.56px;font-size:17.3px;color:#e3e3e3;left:160.15px;width:2000px;text-align:center;">O</div>
<div class="a" style="left:1312.00px;top:278.00px;width:1.00px;height:22.00px;background:#454545;"></div>
<div class="t" style="top:281.56px;font-size:17.3px;color:#e3e3e3;left:244.10px;width:2000px;text-align:center;">P</div>
<div class="a" style="left:1448.90px;top:278.00px;width:1.00px;height:22.00px;background:#454545;"></div>
<div class="t" style="top:281.56px;font-size:17.3px;color:#e3e3e3;left:380.95px;width:2000px;text-align:center;">Q</div>
<div class="a" style="left:1585.90px;top:278.00px;width:1.00px;height:22.00px;background:#454545;"></div>
<div class="t" style="top:281.56px;font-size:17.3px;color:#e3e3e3;left:517.90px;width:2000px;text-align:center;">R</div>
<div class="a" style="left:1722.90px;top:278.00px;width:1.00px;height:22.00px;background:#454545;"></div>
<div class="t" style="top:281.56px;font-size:17.3px;color:#e3e3e3;left:654.90px;width:2000px;text-align:center;">S</div>
<div class="a" style="left:1860.10px;top:278.00px;width:1.00px;height:22.00px;background:#454545;"></div>
<div class="t" style="top:281.56px;font-size:17.3px;color:#e3e3e3;left:792.00px;width:2000px;text-align:center;">T</div>
<div class="a" style="left:1996.90px;top:278.00px;width:1.00px;height:22.00px;background:#454545;"></div>
<div class="t" style="top:281.56px;font-size:17.3px;color:#e3e3e3;left:929.00px;width:2000px;text-align:center;">U</div>
<div class="a" style="left:2133.70px;top:278.00px;width:1.00px;height:22.00px;background:#454545;"></div>
<div class="t" style="top:281.56px;font-size:17.3px;color:#e3e3e3;left:1065.80px;width:2000px;text-align:center;">V</div>
<div class="a" style="left:2271.00px;top:278.00px;width:1.00px;height:22.00px;background:#454545;"></div>
<div class="t" style="top:281.56px;font-size:17.3px;color:#e3e3e3;left:1202.85px;width:2000px;text-align:center;">W</div>
<div class="a" style="left:2408.10px;top:278.00px;width:1.00px;height:22.00px;background:#454545;"></div>
<div class="t" style="top:281.56px;font-size:17.3px;color:#e3e3e3;left:1340.05px;width:2000px;text-align:center;">X</div>
<div class="a" style="left:2544.80px;top:278.00px;width:1.00px;height:22.00px;background:#454545;"></div>
<div class="t" style="top:281.56px;font-size:17.3px;color:#e3e3e3;left:1476.95px;width:2000px;text-align:center;">Y</div>
<div class="a" style="left:2681.80px;top:278.00px;width:1.00px;height:22.00px;background:#454545;"></div>
<div class="t" style="top:281.56px;font-size:17.3px;color:#e3e3e3;left:1613.80px;width:2000px;text-align:center;">Z</div>
<div class="a" style="left:2818.90px;top:278.00px;width:1.00px;height:22.00px;background:#454545;"></div>
<div class="t" style="top:281.56px;font-size:17.3px;color:#e3e3e3;left:1750.85px;width:2000px;text-align:center;">AA</div>
<div class="a" style="left:2841.60px;top:278.00px;width:1.00px;height:22.00px;background:#454545;"></div>
<div class="t" style="top:281.56px;font-size:17.3px;color:#e3e3e3;left:1830.75px;width:2000px;text-align:center;">AB</div>
<div class="a" style="left:11.00px;top:300.00px;width:36.00px;height:1370.00px;background:#0d0d0d;"></div>
<div class="a" style="left:11px;top:300px;width:36px;height:1370px;overflow:hidden">
<div class="a" style="left:0;top:0.30px;width:36px;height:37.50px;background:#6b6b6b"></div>
<div class="a" style="left:0;top:37.30px;width:36px;height:1.2px;background:#c8c8c8"></div>
<div class="a" style="left:34.6px;top:0.30px;width:2px;height:37.50px;background:#2e8a4e"></div>
<div class="t" style="left:-982px;width:2000px;text-align:center;top:18.26px;font-size:17.3px;color:#fff">1</div>
<div class="a" style="left:0;top:69.70px;width:36px;height:1px;background:#3a3a3a"></div>
<div class="t" style="left:-982px;width:2000px;text-align:center;top:50.66px;font-size:17.3px;color:#e3e3e3">2</div>
<div class="a" style="left:0;top:102.60px;width:36px;height:1px;background:#3a3a3a"></div>
<div class="t" style="left:-982px;width:2000px;text-align:center;top:83.56px;font-size:17.3px;color:#e3e3e3">3</div>
<div class="a" style="left:0;top:126.80px;width:36px;height:1px;background:#3a3a3a"></div>
<div class="t" style="left:-982px;width:2000px;text-align:center;top:107.76px;font-size:17.3px;color:#e3e3e3">4</div>
<div class="a" style="left:0;top:161.60px;width:36px;height:1px;background:#3a3a3a"></div>
<div class="t" style="left:-982px;width:2000px;text-align:center;top:142.56px;font-size:17.3px;color:#e3e3e3">5</div>
<div class="a" style="left:0;top:190.30px;width:36px;height:1px;background:#3a3a3a"></div>
<div class="t" style="left:-982px;width:2000px;text-align:center;top:171.26px;font-size:17.3px;color:#e3e3e3">7</div>
<div class="a" style="left:0;top:213.10px;width:36px;height:1px;background:#3a3a3a"></div>
<div class="t" style="left:-982px;width:2000px;text-align:center;top:194.06px;font-size:17.3px;color:#e3e3e3">8</div>
<div class="a" style="left:0;top:235.90px;width:36px;height:1px;background:#3a3a3a"></div>
<div class="t" style="left:-982px;width:2000px;text-align:center;top:216.86px;font-size:17.3px;color:#e3e3e3">9</div>
<div class="a" style="left:0;top:259.00px;width:36px;height:1px;background:#3a3a3a"></div>
<div class="t" style="left:-982px;width:2000px;text-align:center;top:239.96px;font-size:17.3px;color:#e3e3e3">10</div>
<div class="a" style="left:0;top:281.90px;width:36px;height:1px;background:#3a3a3a"></div>
<div class="t" style="left:-982px;width:2000px;text-align:center;top:262.86px;font-size:17.3px;color:#e3e3e3">11</div>
<div class="a" style="left:0;top:308.00px;width:36px;height:1px;background:#3a3a3a"></div>
<div class="t" style="left:-982px;width:2000px;text-align:center;top:288.96px;font-size:17.3px;color:#e3e3e3">12</div>
<div class="a" style="left:0;top:331.10px;width:36px;height:1px;background:#3a3a3a"></div>
<div class="t" style="left:-982px;width:2000px;text-align:center;top:312.06px;font-size:17.3px;color:#e3e3e3">13</div>
<div class="a" style="left:0;top:354.00px;width:36px;height:1px;background:#3a3a3a"></div>
<div class="t" style="left:-982px;width:2000px;text-align:center;top:334.96px;font-size:17.3px;color:#e3e3e3">14</div>
<div class="a" style="left:0;top:377.00px;width:36px;height:1px;background:#3a3a3a"></div>
<div class="t" style="left:-982px;width:2000px;text-align:center;top:357.96px;font-size:17.3px;color:#e3e3e3">15</div>
<div class="a" style="left:0;top:403.20px;width:36px;height:1px;background:#3a3a3a"></div>
<div class="t" style="left:-982px;width:2000px;text-align:center;top:384.16px;font-size:17.3px;color:#e3e3e3">16</div>
<div class="a" style="left:0;top:426.20px;width:36px;height:1px;background:#3a3a3a"></div>
<div class="t" style="left:-982px;width:2000px;text-align:center;top:407.16px;font-size:17.3px;color:#e3e3e3">17</div>
<div class="a" style="left:0;top:449.20px;width:36px;height:1px;background:#3a3a3a"></div>
<div class="t" style="left:-982px;width:2000px;text-align:center;top:430.16px;font-size:17.3px;color:#e3e3e3">18</div>
<div class="a" style="left:0;top:472.20px;width:36px;height:1px;background:#3a3a3a"></div>
<div class="t" style="left:-982px;width:2000px;text-align:center;top:453.16px;font-size:17.3px;color:#e3e3e3">19</div>
<div class="a" style="left:0;top:500.00px;width:36px;height:1px;background:#3a3a3a"></div>
<div class="t" style="left:-982px;width:2000px;text-align:center;top:480.96px;font-size:17.3px;color:#e3e3e3">21</div>
<div class="a" style="left:0;top:523.50px;width:36px;height:1px;background:#3a3a3a"></div>
<div class="t" style="left:-982px;width:2000px;text-align:center;top:504.46px;font-size:17.3px;color:#e3e3e3">22</div>
<div class="a" style="left:0;top:553.90px;width:36px;height:1px;background:#3a3a3a"></div>
<div class="t" style="left:-982px;width:2000px;text-align:center;top:534.86px;font-size:17.3px;color:#e3e3e3">24</div>
<div class="a" style="left:0;top:576.90px;width:36px;height:1px;background:#3a3a3a"></div>
<div class="t" style="left:-982px;width:2000px;text-align:center;top:557.86px;font-size:17.3px;color:#e3e3e3">25</div>
<div class="a" style="left:0;top:600.00px;width:36px;height:1px;background:#3a3a3a"></div>
<div class="t" style="left:-982px;width:2000px;text-align:center;top:580.96px;font-size:17.3px;color:#e3e3e3">26</div>
<div class="a" style="left:0;top:622.90px;width:36px;height:1px;background:#3a3a3a"></div>
<div class="t" style="left:-982px;width:2000px;text-align:center;top:603.86px;font-size:17.3px;color:#e3e3e3">27</div>
<div class="a" style="left:0;top:646.00px;width:36px;height:1px;background:#3a3a3a"></div>
<div class="t" style="left:-982px;width:2000px;text-align:center;top:626.96px;font-size:17.3px;color:#e3e3e3">28</div>
<div class="a" style="left:0;top:669.10px;width:36px;height:1px;background:#3a3a3a"></div>
<div class="t" style="left:-982px;width:2000px;text-align:center;top:650.06px;font-size:17.3px;color:#e3e3e3">29</div>
<div class="a" style="left:0;top:691.90px;width:36px;height:1px;background:#3a3a3a"></div>
<div class="t" style="left:-982px;width:2000px;text-align:center;top:672.86px;font-size:17.3px;color:#e3e3e3">30</div>
<div class="a" style="left:0;top:717.80px;width:36px;height:1px;background:#3a3a3a"></div>
<div class="t" style="left:-982px;width:2000px;text-align:center;top:698.76px;font-size:17.3px;color:#e3e3e3">31</div>
<div class="a" style="left:0;top:741.00px;width:36px;height:1px;background:#3a3a3a"></div>
<div class="t" style="left:-982px;width:2000px;text-align:center;top:721.96px;font-size:17.3px;color:#e3e3e3">32</div>
<div class="a" style="left:0;top:764.90px;width:36px;height:1px;background:#3a3a3a"></div>
<div class="t" style="left:-982px;width:2000px;text-align:center;top:745.86px;font-size:17.3px;color:#e3e3e3">33</div>
<div class="a" style="left:0;top:800.00px;width:36px;height:1px;background:#3a3a3a"></div>
<div class="t" style="left:-982px;width:2000px;text-align:center;top:780.96px;font-size:17.3px;color:#e3e3e3">34</div>
<div class="a" style="left:0;top:823.07px;width:36px;height:1px;background:#3a3a3a"></div>
<div class="t" style="left:-982px;width:2000px;text-align:center;top:804.02px;font-size:17.3px;color:#e3e3e3">35</div>
<div class="a" style="left:0;top:846.13px;width:36px;height:1px;background:#3a3a3a"></div>
<div class="t" style="left:-982px;width:2000px;text-align:center;top:827.09px;font-size:17.3px;color:#e3e3e3">36</div>
<div class="a" style="left:0;top:869.19px;width:36px;height:1px;background:#3a3a3a"></div>
<div class="t" style="left:-982px;width:2000px;text-align:center;top:850.15px;font-size:17.3px;color:#e3e3e3">37</div>
<div class="a" style="left:0;top:892.26px;width:36px;height:1px;background:#3a3a3a"></div>
<div class="t" style="left:-982px;width:2000px;text-align:center;top:873.22px;font-size:17.3px;color:#e3e3e3">38</div>
<div class="a" style="left:0;top:915.33px;width:36px;height:1px;background:#3a3a3a"></div>
<div class="t" style="left:-982px;width:2000px;text-align:center;top:896.28px;font-size:17.3px;color:#e3e3e3">39</div>
<div class="a" style="left:0;top:938.39px;width:36px;height:1px;background:#3a3a3a"></div>
<div class="t" style="left:-982px;width:2000px;text-align:center;top:919.35px;font-size:17.3px;color:#e3e3e3">40</div>
<div class="a" style="left:0;top:961.45px;width:36px;height:1px;background:#3a3a3a"></div>
<div class="t" style="left:-982px;width:2000px;text-align:center;top:942.41px;font-size:17.3px;color:#e3e3e3">41</div>
<div class="a" style="left:0;top:984.52px;width:36px;height:1px;background:#3a3a3a"></div>
<div class="t" style="left:-982px;width:2000px;text-align:center;top:965.48px;font-size:17.3px;color:#e3e3e3">42</div>
<div class="a" style="left:0;top:1007.59px;width:36px;height:1px;background:#3a3a3a"></div>
<div class="t" style="left:-982px;width:2000px;text-align:center;top:988.54px;font-size:17.3px;color:#e3e3e3">43</div>
<div class="a" style="left:0;top:1030.65px;width:36px;height:1px;background:#3a3a3a"></div>
<div class="t" style="left:-982px;width:2000px;text-align:center;top:1011.61px;font-size:17.3px;color:#e3e3e3">44</div>
<div class="a" style="left:0;top:1053.71px;width:36px;height:1px;background:#3a3a3a"></div>
<div class="t" style="left:-982px;width:2000px;text-align:center;top:1034.67px;font-size:17.3px;color:#e3e3e3">45</div>
<div class="a" style="left:0;top:1076.78px;width:36px;height:1px;background:#3a3a3a"></div>
<div class="t" style="left:-982px;width:2000px;text-align:center;top:1057.74px;font-size:17.3px;color:#e3e3e3">46</div>
<div class="a" style="left:0;top:1099.85px;width:36px;height:1px;background:#3a3a3a"></div>
<div class="t" style="left:-982px;width:2000px;text-align:center;top:1080.80px;font-size:17.3px;color:#e3e3e3">47</div>
<div class="a" style="left:0;top:1122.91px;width:36px;height:1px;background:#3a3a3a"></div>
<div class="t" style="left:-982px;width:2000px;text-align:center;top:1103.87px;font-size:17.3px;color:#e3e3e3">48</div>
<div class="a" style="left:0;top:1145.97px;width:36px;height:1px;background:#3a3a3a"></div>
<div class="t" style="left:-982px;width:2000px;text-align:center;top:1126.93px;font-size:17.3px;color:#e3e3e3">49</div>
<div class="a" style="left:0;top:1169.04px;width:36px;height:1px;background:#3a3a3a"></div>
<div class="t" style="left:-982px;width:2000px;text-align:center;top:1150.00px;font-size:17.3px;color:#e3e3e3">50</div>
<div class="a" style="left:0;top:1192.11px;width:36px;height:1px;background:#3a3a3a"></div>
<div class="t" style="left:-982px;width:2000px;text-align:center;top:1173.06px;font-size:17.3px;color:#e3e3e3">51</div>
<div class="a" style="left:0;top:1215.17px;width:36px;height:1px;background:#3a3a3a"></div>
<div class="t" style="left:-982px;width:2000px;text-align:center;top:1196.13px;font-size:17.3px;color:#e3e3e3">52</div>
<div class="a" style="left:0;top:1238.24px;width:36px;height:1px;background:#3a3a3a"></div>
<div class="t" style="left:-982px;width:2000px;text-align:center;top:1219.19px;font-size:17.3px;color:#e3e3e3">53</div>
<div class="a" style="left:0;top:1261.30px;width:36px;height:1px;background:#3a3a3a"></div>
<div class="t" style="left:-982px;width:2000px;text-align:center;top:1242.26px;font-size:17.3px;color:#e3e3e3">54</div>
<div class="a" style="left:0;top:1295.80px;width:36px;height:1px;background:#3a3a3a"></div>
<div class="t" style="left:-982px;width:2000px;text-align:center;top:1276.76px;font-size:17.3px;color:#e3e3e3">55</div>
<div class="a" style="left:0;top:1324.50px;width:36px;height:1px;background:#3a3a3a"></div>
<div class="t" style="left:-982px;width:2000px;text-align:center;top:1305.46px;font-size:17.3px;color:#e3e3e3">57</div>
<div class="a" style="left:0;top:1351.60px;width:36px;height:1px;background:#3a3a3a"></div>
<div class="t" style="left:-982px;width:2000px;text-align:center;top:1332.56px;font-size:17.3px;color:#e3e3e3">59</div>
<div class="a" style="left:0;top:1376.50px;width:36px;height:1px;background:#3a3a3a"></div>
<div class="t" style="left:-982px;width:2000px;text-align:center;top:1357.46px;font-size:17.3px;color:#e3e3e3">60</div>
<div class="a" style="left:0;top:166.60px;width:36px;height:1px;background:#3a3a3a"></div>
<div class="a" style="left:0;top:477.00px;width:36px;height:1px;background:#3a3a3a"></div>
<div class="a" style="left:0;top:527.90px;width:36px;height:1px;background:#3a3a3a"></div>
<div class="a" style="left:0;top:1300.80px;width:36px;height:1px;background:#3a3a3a"></div>
<div class="a" style="left:0;top:1329.20px;width:36px;height:1px;background:#3a3a3a"></div>
</div>
<div class="a" style="left:47.00px;top:300.00px;width:2813.00px;height:1370.00px;background:#ffffff;"></div>
<div class="t" style="top:302.73px;font-size:33.4px;color:#222222;font-weight:700;letter-spacing:0.08px;left:75.10px;-webkit-text-stroke:1px #222;">Financial Statements Summary</div>
<div class="t" style="top:340.93px;font-size:28.2px;color:#000000;font-weight:700;letter-spacing:0.45px;left:76.60px;-webkit-text-stroke:1px #000;">ABC Company Inc.</div>
<div class="t" style="top:377.31px;font-size:18.3px;color:#2a74e0;font-weight:700;left:74.20px;-webkit-text-stroke:0.5px #2a74e0;">Go to Table of Contents</div>
<div class="a" style="left:74.20px;top:393.60px;width:209.40px;height:2.20px;background:#2a74e0;"></div>
<div class="a" style="left:47.00px;top:426.80px;width:2812.00px;height:1.00px;background:#9a9a9a;"></div>
<div class="t" style="top:376.72px;font-size:21.6px;color:#1a1a1a;font-weight:700;letter-spacing:0.15px;left:201.40px;width:1500px;text-align:right;-webkit-text-stroke:0.7px #1a1a1a;">Select reporting year</div>
<div class="a" style="left:1723.7px;top:370.4px;width:272.9px;height:31.8px;background:#feec60;border:1px solid #ddd6a6"></div>
<div class="t" style="top:376.72px;font-size:21.6px;color:#111;font-weight:700;letter-spacing:0.6px;left:861.00px;width:2000px;text-align:center;-webkit-text-stroke:0.7px #111;">2026</div>
<div class="a" style="left:70.50px;top:427.80px;width:1073.90px;height:35.00px;background:#4b50d2;"></div>
<div class="t" style="top:431.27px;font-size:27.8px;color:#ffffff;font-weight:700;letter-spacing:1.6px;left:-392.55px;width:2000px;text-align:center;-webkit-text-stroke:1.1px #fff;">Income Statement ($&#x27;000) - 5 years to December 2030</div>
<div class="a" style="left:1175.40px;top:427.80px;width:1644.10px;height:35.00px;background:#4b50d2;"></div>
<div class="t" style="top:431.27px;font-size:27.8px;color:#ffffff;font-weight:700;letter-spacing:1.98px;left:997.45px;width:2000px;text-align:center;-webkit-text-stroke:1.1px #fff;">Income Statement ($&#x27;000) - 2026</div>
<div class="a" style="left:70.50px;top:467.80px;width:1073.90px;height:21.80px;background:#6c72e6;"></div>
<div class="a" style="left:543.70px;top:467.80px;width:1.20px;height:21.80px;background:#ffffff;"></div>
<div class="a" style="left:663.70px;top:467.80px;width:1.20px;height:21.80px;background:#ffffff;"></div>
<div class="a" style="left:783.60px;top:467.80px;width:1.20px;height:21.80px;background:#ffffff;"></div>
<div class="a" style="left:903.90px;top:467.80px;width:1.20px;height:21.80px;background:#ffffff;"></div>
<div class="a" style="left:1023.80px;top:467.80px;width:1.20px;height:21.80px;background:#ffffff;"></div>
<div class="t" style="top:471.31px;font-size:18.3px;color:#ffffff;font-weight:700;letter-spacing:0.2px;left:82.80px;-webkit-text-stroke:0.6px #fff;">Year Ending</div>
<div class="t" style="top:470.72px;font-size:19.0px;color:#ffffff;font-weight:700;letter-spacing:0.3px;left:-395.70px;width:2000px;text-align:center;-webkit-text-stroke:0.6px #fff;">2026</div>
<div class="t" style="top:470.72px;font-size:19.0px;color:#ffffff;font-weight:700;letter-spacing:0.3px;left:-275.75px;width:2000px;text-align:center;-webkit-text-stroke:0.6px #fff;">2027</div>
<div class="t" style="top:470.72px;font-size:19.0px;color:#ffffff;font-weight:700;letter-spacing:0.3px;left:-155.65px;width:2000px;text-align:center;-webkit-text-stroke:0.6px #fff;">2028</div>
<div class="t" style="top:470.72px;font-size:19.0px;color:#ffffff;font-weight:700;letter-spacing:0.3px;left:-35.55px;width:2000px;text-align:center;-webkit-text-stroke:0.6px #fff;">2029</div>
<div class="t" style="top:470.72px;font-size:19.0px;color:#ffffff;font-weight:700;letter-spacing:0.3px;left:84.50px;width:2000px;text-align:center;-webkit-text-stroke:0.6px #fff;">2030</div>
<div class="a" style="left:1175.40px;top:467.80px;width:1644.10px;height:21.80px;background:#6c72e6;"></div>
<div class="a" style="left:1311.90px;top:467.80px;width:1.20px;height:21.80px;background:#ffffff;"></div>
<div class="a" style="left:1448.80px;top:467.80px;width:1.20px;height:21.80px;background:#ffffff;"></div>
<div class="a" style="left:1585.80px;top:467.80px;width:1.20px;height:21.80px;background:#ffffff;"></div>
<div class="a" style="left:1722.80px;top:467.80px;width:1.20px;height:21.80px;background:#ffffff;"></div>
<div class="a" style="left:1860.00px;top:467.80px;width:1.20px;height:21.80px;background:#ffffff;"></div>
<div class="a" style="left:1996.80px;top:467.80px;width:1.20px;height:21.80px;background:#ffffff;"></div>
<div class="a" style="left:2133.60px;top:467.80px;width:1.20px;height:21.80px;background:#ffffff;"></div>
<div class="a" style="left:2270.90px;top:467.80px;width:1.20px;height:21.80px;background:#ffffff;"></div>
<div class="a" style="left:2408.00px;top:467.80px;width:1.20px;height:21.80px;background:#ffffff;"></div>
<div class="a" style="left:2544.70px;top:467.80px;width:1.20px;height:21.80px;background:#ffffff;"></div>
<div class="a" style="left:2681.70px;top:467.80px;width:1.20px;height:21.80px;background:#ffffff;"></div>
<div class="t" style="top:470.72px;font-size:19.0px;color:#ffffff;font-weight:700;letter-spacing:0.3px;left:244.10px;width:2000px;text-align:center;-webkit-text-stroke:0.6px #fff;">Jan</div>
<div class="t" style="top:470.72px;font-size:19.0px;color:#ffffff;font-weight:700;letter-spacing:0.3px;left:380.95px;width:2000px;text-align:center;-webkit-text-stroke:0.6px #fff;">Feb</div>
<div class="t" style="top:470.72px;font-size:19.0px;color:#ffffff;font-weight:700;letter-spacing:0.3px;left:517.90px;width:2000px;text-align:center;-webkit-text-stroke:0.6px #fff;">Mar</div>
<div class="t" style="top:470.72px;font-size:19.0px;color:#ffffff;font-weight:700;letter-spacing:0.3px;left:654.90px;width:2000px;text-align:center;-webkit-text-stroke:0.6px #fff;">Apr</div>
<div class="t" style="top:470.72px;font-size:19.0px;color:#ffffff;font-weight:700;letter-spacing:0.3px;left:792.00px;width:2000px;text-align:center;-webkit-text-stroke:0.6px #fff;">May</div>
<div class="t" style="top:470.72px;font-size:19.0px;color:#ffffff;font-weight:700;letter-spacing:0.3px;left:929.00px;width:2000px;text-align:center;-webkit-text-stroke:0.6px #fff;">Jun</div>
<div class="t" style="top:470.72px;font-size:19.0px;color:#ffffff;font-weight:700;letter-spacing:0.3px;left:1065.80px;width:2000px;text-align:center;-webkit-text-stroke:0.6px #fff;">Jul</div>
<div class="t" style="top:470.72px;font-size:19.0px;color:#ffffff;font-weight:700;letter-spacing:0.3px;left:1202.85px;width:2000px;text-align:center;-webkit-text-stroke:0.6px #fff;">Aug</div>
<div class="t" style="top:470.72px;font-size:19.0px;color:#ffffff;font-weight:700;letter-spacing:0.3px;left:1340.05px;width:2000px;text-align:center;-webkit-text-stroke:0.6px #fff;">Sep</div>
<div class="t" style="top:470.72px;font-size:19.0px;color:#ffffff;font-weight:700;letter-spacing:0.3px;left:1476.95px;width:2000px;text-align:center;-webkit-text-stroke:0.6px #fff;">Oct</div>
<div class="t" style="top:470.72px;font-size:19.0px;color:#ffffff;font-weight:700;letter-spacing:0.3px;left:1613.80px;width:2000px;text-align:center;-webkit-text-stroke:0.6px #fff;">Nov</div>
<div class="t" style="top:470.72px;font-size:19.0px;color:#ffffff;font-weight:700;letter-spacing:0.3px;left:1750.85px;width:2000px;text-align:center;-webkit-text-stroke:0.6px #fff;">Dec</div>
<div class="t" style="top:493.94px;font-size:17.2px;color:#0a0a0a;left:74.50px;">Revenue</div>
<div class="t" style="top:493.94px;font-size:17.2px;color:#0a0a0a;letter-spacing:0.4px;left:-846.20px;width:1500px;text-align:right;">3,699</div>
<div class="t" style="top:493.94px;font-size:17.2px;color:#0a0a0a;letter-spacing:0.4px;left:-726.30px;width:1500px;text-align:right;">5,358</div>
<div class="t" style="top:493.94px;font-size:17.2px;color:#0a0a0a;letter-spacing:0.4px;left:-606.00px;width:1500px;text-align:right;">7,466</div>
<div class="t" style="top:493.94px;font-size:17.2px;color:#0a0a0a;letter-spacing:0.4px;left:-486.10px;width:1500px;text-align:right;">10,304</div>
<div class="t" style="top:493.94px;font-size:17.2px;color:#0a0a0a;letter-spacing:0.4px;left:-365.90px;width:1500px;text-align:right;">13,485</div>
<div class="t" style="top:493.94px;font-size:17.2px;color:#0a0a0a;letter-spacing:0.4px;left:-198.00px;width:1500px;text-align:right;">308</div>
<div class="t" style="top:493.94px;font-size:17.2px;color:#0a0a0a;letter-spacing:0.4px;left:-61.10px;width:1500px;text-align:right;">308</div>
<div class="t" style="top:493.94px;font-size:17.2px;color:#0a0a0a;letter-spacing:0.4px;left:75.90px;width:1500px;text-align:right;">308</div>
<div class="t" style="top:493.94px;font-size:17.2px;color:#0a0a0a;letter-spacing:0.4px;left:212.90px;width:1500px;text-align:right;">308</div>
<div class="t" style="top:493.94px;font-size:17.2px;color:#0a0a0a;letter-spacing:0.4px;left:350.10px;width:1500px;text-align:right;">308</div>
<div class="t" style="top:493.94px;font-size:17.2px;color:#0a0a0a;letter-spacing:0.4px;left:486.90px;width:1500px;text-align:right;">308</div>
<div class="t" style="top:493.94px;font-size:17.2px;color:#0a0a0a;letter-spacing:0.4px;left:623.70px;width:1500px;text-align:right;">308</div>
<div class="t" style="top:493.94px;font-size:17.2px;color:#0a0a0a;letter-spacing:0.4px;left:761.00px;width:1500px;text-align:right;">308</div>
<div class="t" style="top:493.94px;font-size:17.2px;color:#0a0a0a;letter-spacing:0.4px;left:898.10px;width:1500px;text-align:right;">308</div>
<div class="t" style="top:493.94px;font-size:17.2px;color:#0a0a0a;letter-spacing:0.4px;left:1034.80px;width:1500px;text-align:right;">308</div>
<div class="t" style="top:493.94px;font-size:17.2px;color:#0a0a0a;letter-spacing:0.4px;left:1171.80px;width:1500px;text-align:right;">308</div>
<div class="t" style="top:493.94px;font-size:17.2px;color:#0a0a0a;letter-spacing:0.4px;left:1308.90px;width:1500px;text-align:right;">308</div>
<div class="t" style="top:516.84px;font-size:17.2px;color:#0a0a0a;font-style:italic;letter-spacing:0.7px;left:92.80px;">Growth %</div>
<div class="t" style="top:516.74px;font-size:17.2px;color:#0a0a0a;font-style:italic;letter-spacing:1.0px;left:-725.80px;width:1500px;text-align:right;">45%</div>
<div class="t" style="top:516.74px;font-size:17.2px;color:#0a0a0a;font-style:italic;letter-spacing:1.0px;left:-605.50px;width:1500px;text-align:right;">39%</div>
<div class="t" style="top:516.74px;font-size:17.2px;color:#0a0a0a;font-style:italic;letter-spacing:1.0px;left:-485.60px;width:1500px;text-align:right;">38%</div>
<div class="t" style="top:516.74px;font-size:17.2px;color:#0a0a0a;font-style:italic;letter-spacing:1.0px;left:-365.40px;width:1500px;text-align:right;">31%</div>
<div class="t" style="top:516.74px;font-size:17.2px;color:#0a0a0a;left:-200.00px;width:1500px;text-align:right;">-</div>
<div class="t" style="top:516.74px;font-size:17.2px;color:#0a0a0a;left:-63.10px;width:1500px;text-align:right;">-</div>
<div class="t" style="top:516.74px;font-size:17.2px;color:#0a0a0a;left:73.90px;width:1500px;text-align:right;">-</div>
<div class="t" style="top:516.74px;font-size:17.2px;color:#0a0a0a;left:210.90px;width:1500px;text-align:right;">-</div>
<div class="t" style="top:516.74px;font-size:17.2px;color:#0a0a0a;left:348.10px;width:1500px;text-align:right;">-</div>
<div class="t" style="top:516.74px;font-size:17.2px;color:#0a0a0a;left:484.90px;width:1500px;text-align:right;">-</div>
<div class="t" style="top:516.74px;font-size:17.2px;color:#0a0a0a;left:621.70px;width:1500px;text-align:right;">-</div>
<div class="t" style="top:516.74px;font-size:17.2px;color:#0a0a0a;left:759.00px;width:1500px;text-align:right;">-</div>
<div class="t" style="top:516.74px;font-size:17.2px;color:#0a0a0a;left:896.10px;width:1500px;text-align:right;">-</div>
<div class="t" style="top:516.74px;font-size:17.2px;color:#0a0a0a;left:1032.80px;width:1500px;text-align:right;">-</div>
<div class="t" style="top:516.74px;font-size:17.2px;color:#0a0a0a;left:1169.80px;width:1500px;text-align:right;">-</div>
<div class="t" style="top:516.74px;font-size:17.2px;color:#0a0a0a;left:1306.90px;width:1500px;text-align:right;">-</div>
<div class="t" style="top:539.84px;font-size:17.2px;color:#0a0a0a;letter-spacing:-0.8px;left:74.50px;">COGS</div>
<div class="t" style="top:539.84px;font-size:17.2px;color:#0a0a0a;letter-spacing:0.9px;left:-837.60px;width:1500px;text-align:right;">(185)</div>
<div class="t" style="top:539.84px;font-size:17.2px;color:#0a0a0a;letter-spacing:0.9px;left:-717.70px;width:1500px;text-align:right;">(241)</div>
<div class="t" style="top:539.84px;font-size:17.2px;color:#0a0a0a;letter-spacing:0.9px;left:-597.40px;width:1500px;text-align:right;">(299)</div>
<div class="t" style="top:539.84px;font-size:17.2px;color:#0a0a0a;letter-spacing:0.9px;left:-477.50px;width:1500px;text-align:right;">(361)</div>
<div class="t" style="top:539.84px;font-size:17.2px;color:#0a0a0a;letter-spacing:0.9px;left:-357.30px;width:1500px;text-align:right;">(405)</div>
<div class="t" style="top:539.84px;font-size:17.2px;color:#0a0a0a;letter-spacing:0.9px;left:-189.40px;width:1500px;text-align:right;">(15)</div>
<div class="t" style="top:539.84px;font-size:17.2px;color:#0a0a0a;letter-spacing:0.9px;left:-52.50px;width:1500px;text-align:right;">(15)</div>
<div class="t" style="top:539.84px;font-size:17.2px;color:#0a0a0a;letter-spacing:0.9px;left:84.50px;width:1500px;text-align:right;">(15)</div>
<div class="t" style="top:539.84px;font-size:17.2px;color:#0a0a0a;letter-spacing:0.9px;left:221.50px;width:1500px;text-align:right;">(15)</div>
<div class="t" style="top:539.84px;font-size:17.2px;color:#0a0a0a;letter-spacing:0.9px;left:358.70px;width:1500px;text-align:right;">(15)</div>
<div class="t" style="top:539.84px;font-size:17.2px;color:#0a0a0a;letter-spacing:0.9px;left:495.50px;width:1500px;text-align:right;">(15)</div>
<div class="t" style="top:539.84px;font-size:17.2px;color:#0a0a0a;letter-spacing:0.9px;left:632.30px;width:1500px;text-align:right;">(15)</div>
<div class="t" style="top:539.84px;font-size:17.2px;color:#0a0a0a;letter-spacing:0.9px;left:769.60px;width:1500px;text-align:right;">(15)</div>
<div class="t" style="top:539.84px;font-size:17.2px;color:#0a0a0a;letter-spacing:0.9px;left:906.70px;width:1500px;text-align:right;">(15)</div>
<div class="t" style="top:539.84px;font-size:17.2px;color:#0a0a0a;letter-spacing:0.9px;left:1043.40px;width:1500px;text-align:right;">(15)</div>
<div class="t" style="top:539.84px;font-size:17.2px;color:#0a0a0a;letter-spacing:0.9px;left:1180.40px;width:1500px;text-align:right;">(15)</div>
<div class="t" style="top:539.84px;font-size:17.2px;color:#0a0a0a;letter-spacing:0.9px;left:1317.50px;width:1500px;text-align:right;">(15)</div>
<div class="t" style="top:562.84px;font-size:17.2px;color:#0a0a0a;font-style:italic;letter-spacing:0.5px;left:92.80px;">% of Revenue</div>
<div class="t" style="top:562.74px;font-size:17.2px;color:#0a0a0a;font-style:italic;letter-spacing:1.0px;left:-838.30px;width:1500px;text-align:right;">(5%)</div>
<div class="t" style="top:562.74px;font-size:17.2px;color:#0a0a0a;font-style:italic;letter-spacing:1.0px;left:-718.40px;width:1500px;text-align:right;">(5%)</div>
<div class="t" style="top:562.74px;font-size:17.2px;color:#0a0a0a;font-style:italic;letter-spacing:1.0px;left:-598.10px;width:1500px;text-align:right;">(4%)</div>
<div class="t" style="top:562.74px;font-size:17.2px;color:#0a0a0a;font-style:italic;letter-spacing:1.0px;left:-478.20px;width:1500px;text-align:right;">(4%)</div>
<div class="t" style="top:562.74px;font-size:17.2px;color:#0a0a0a;font-style:italic;letter-spacing:1.0px;left:-358.00px;width:1500px;text-align:right;">(3%)</div>
<div class="t" style="top:562.74px;font-size:17.2px;color:#0a0a0a;font-style:italic;letter-spacing:1.0px;left:-190.10px;width:1500px;text-align:right;">(5%)</div>
<div class="t" style="top:562.74px;font-size:17.2px;color:#0a0a0a;font-style:italic;letter-spacing:1.0px;left:-53.20px;width:1500px;text-align:right;">(5%)</div>
<div class="t" style="top:562.74px;font-size:17.2px;color:#0a0a0a;font-style:italic;letter-spacing:1.0px;left:83.80px;width:1500px;text-align:right;">(5%)</div>
<div class="t" style="top:562.74px;font-size:17.2px;color:#0a0a0a;font-style:italic;letter-spacing:1.0px;left:220.80px;width:1500px;text-align:right;">(5%)</div>
<div class="t" style="top:562.74px;font-size:17.2px;color:#0a0a0a;font-style:italic;letter-spacing:1.0px;left:358.00px;width:1500px;text-align:right;">(5%)</div>
<div class="t" style="top:562.74px;font-size:17.2px;color:#0a0a0a;font-style:italic;letter-spacing:1.0px;left:494.80px;width:1500px;text-align:right;">(5%)</div>
<div class="t" style="top:562.74px;font-size:17.2px;color:#0a0a0a;font-style:italic;letter-spacing:1.0px;left:631.60px;width:1500px;text-align:right;">(5%)</div>
<div class="t" style="top:562.74px;font-size:17.2px;color:#0a0a0a;font-style:italic;letter-spacing:1.0px;left:768.90px;width:1500px;text-align:right;">(5%)</div>
<div class="t" style="top:562.74px;font-size:17.2px;color:#0a0a0a;font-style:italic;letter-spacing:1.0px;left:906.00px;width:1500px;text-align:right;">(5%)</div>
<div class="t" style="top:562.74px;font-size:17.2px;color:#0a0a0a;font-style:italic;letter-spacing:1.0px;left:1042.70px;width:1500px;text-align:right;">(5%)</div>
<div class="t" style="top:562.74px;font-size:17.2px;color:#0a0a0a;font-style:italic;letter-spacing:1.0px;left:1179.70px;width:1500px;text-align:right;">(5%)</div>
<div class="t" style="top:562.74px;font-size:17.2px;color:#0a0a0a;font-style:italic;letter-spacing:1.0px;left:1316.80px;width:1500px;text-align:right;">(5%)</div>
<div class="a" style="left:70.50px;top:582.40px;width:1073.90px;height:26.10px;background:#4cb2e6;"></div>
<div class="a" style="left:1175.40px;top:582.40px;width:1644.10px;height:26.10px;background:#4cb2e6;"></div>
<div class="t" style="top:586.02px;font-size:21.0px;color:#ffffff;font-weight:700;letter-spacing:0.25px;left:85.50px;-webkit-text-stroke:0.8px #fff;">Gross Margin</div>
<div class="t" style="top:586.76px;font-size:18.6px;color:#ffffff;font-weight:700;letter-spacing:0.35px;left:-847.35px;width:1500px;text-align:right;-webkit-text-stroke:0.6px #fff;">3,514</div>
<div class="t" style="top:586.76px;font-size:18.6px;color:#ffffff;font-weight:700;letter-spacing:0.35px;left:-727.45px;width:1500px;text-align:right;-webkit-text-stroke:0.6px #fff;">5,117</div>
<div class="t" style="top:586.76px;font-size:18.6px;color:#ffffff;font-weight:700;letter-spacing:0.35px;left:-607.15px;width:1500px;text-align:right;-webkit-text-stroke:0.6px #fff;">7,167</div>
<div class="t" style="top:586.76px;font-size:18.6px;color:#ffffff;font-weight:700;letter-spacing:0.35px;left:-487.25px;width:1500px;text-align:right;-webkit-text-stroke:0.6px #fff;">9,944</div>
<div class="t" style="top:586.76px;font-size:18.6px;color:#ffffff;font-weight:700;letter-spacing:0.35px;left:-367.05px;width:1500px;text-align:right;-webkit-text-stroke:0.6px #fff;">13,081</div>
<div class="t" style="top:586.76px;font-size:18.6px;color:#ffffff;font-weight:700;letter-spacing:0.35px;left:-199.15px;width:1500px;text-align:right;-webkit-text-stroke:0.6px #fff;">293</div>
<div class="t" style="top:586.76px;font-size:18.6px;color:#ffffff;font-weight:700;letter-spacing:0.35px;left:-62.25px;width:1500px;text-align:right;-webkit-text-stroke:0.6px #fff;">293</div>
<div class="t" style="top:586.76px;font-size:18.6px;color:#ffffff;font-weight:700;letter-spacing:0.35px;left:74.75px;width:1500px;text-align:right;-webkit-text-stroke:0.6px #fff;">293</div>
<div class="t" style="top:586.76px;font-size:18.6px;color:#ffffff;font-weight:700;letter-spacing:0.35px;left:211.75px;width:1500px;text-align:right;-webkit-text-stroke:0.6px #fff;">293</div>
<div class="t" style="top:586.76px;font-size:18.6px;color:#ffffff;font-weight:700;letter-spacing:0.35px;left:348.95px;width:1500px;text-align:right;-webkit-text-stroke:0.6px #fff;">293</div>
<div class="t" style="top:586.76px;font-size:18.6px;color:#ffffff;font-weight:700;letter-spacing:0.35px;left:485.75px;width:1500px;text-align:right;-webkit-text-stroke:0.6px #fff;">293</div>
<div class="t" style="top:586.76px;font-size:18.6px;color:#ffffff;font-weight:700;letter-spacing:0.35px;left:622.55px;width:1500px;text-align:right;-webkit-text-stroke:0.6px #fff;">293</div>
<div class="t" style="top:586.76px;font-size:18.6px;color:#ffffff;font-weight:700;letter-spacing:0.35px;left:759.85px;width:1500px;text-align:right;-webkit-text-stroke:0.6px #fff;">293</div>
<div class="t" style="top:586.76px;font-size:18.6px;color:#ffffff;font-weight:700;letter-spacing:0.35px;left:896.95px;width:1500px;text-align:right;-webkit-text-stroke:0.6px #fff;">293</div>
<div class="t" style="top:586.76px;font-size:18.6px;color:#ffffff;font-weight:700;letter-spacing:0.35px;left:1033.65px;width:1500px;text-align:right;-webkit-text-stroke:0.6px #fff;">293</div>
<div class="t" style="top:586.76px;font-size:18.6px;color:#ffffff;font-weight:700;letter-spacing:0.35px;left:1170.65px;width:1500px;text-align:right;-webkit-text-stroke:0.6px #fff;">293</div>
<div class="t" style="top:586.76px;font-size:18.6px;color:#ffffff;font-weight:700;letter-spacing:0.35px;left:1307.75px;width:1500px;text-align:right;-webkit-text-stroke:0.6px #fff;">293</div>
<div class="t" style="top:612.04px;font-size:17.2px;color:#0a0a0a;font-style:italic;letter-spacing:0.26px;left:92.80px;">Gross Margin %</div>
<div class="t" style="top:611.94px;font-size:17.2px;color:#0a0a0a;font-style:italic;letter-spacing:1.0px;left:-845.70px;width:1500px;text-align:right;">95%</div>
<div class="t" style="top:611.94px;font-size:17.2px;color:#0a0a0a;font-style:italic;letter-spacing:1.0px;left:-725.80px;width:1500px;text-align:right;">96%</div>
<div class="t" style="top:611.94px;font-size:17.2px;color:#0a0a0a;font-style:italic;letter-spacing:1.0px;left:-605.50px;width:1500px;text-align:right;">96%</div>
<div class="t" style="top:611.94px;font-size:17.2px;color:#0a0a0a;font-style:italic;letter-spacing:1.0px;left:-485.60px;width:1500px;text-align:right;">97%</div>
<div class="t" style="top:611.94px;font-size:17.2px;color:#0a0a0a;font-style:italic;letter-spacing:1.0px;left:-365.40px;width:1500px;text-align:right;">97%</div>
<div class="t" style="top:611.94px;font-size:17.2px;color:#0a0a0a;font-style:italic;letter-spacing:1.0px;left:-197.50px;width:1500px;text-align:right;">95%</div>
<div class="t" style="top:611.94px;font-size:17.2px;color:#0a0a0a;font-style:italic;letter-spacing:1.0px;left:-60.60px;width:1500px;text-align:right;">95%</div>
<div class="t" style="top:611.94px;font-size:17.2px;color:#0a0a0a;font-style:italic;letter-spacing:1.0px;left:76.40px;width:1500px;text-align:right;">95%</div>
<div class="t" style="top:611.94px;font-size:17.2px;color:#0a0a0a;font-style:italic;letter-spacing:1.0px;left:213.40px;width:1500px;text-align:right;">95%</div>
<div class="t" style="top:611.94px;font-size:17.2px;color:#0a0a0a;font-style:italic;letter-spacing:1.0px;left:350.60px;width:1500px;text-align:right;">95%</div>
<div class="t" style="top:611.94px;font-size:17.2px;color:#0a0a0a;font-style:italic;letter-spacing:1.0px;left:487.40px;width:1500px;text-align:right;">95%</div>
<div class="t" style="top:611.94px;font-size:17.2px;color:#0a0a0a;font-style:italic;letter-spacing:1.0px;left:624.20px;width:1500px;text-align:right;">95%</div>
<div class="t" style="top:611.94px;font-size:17.2px;color:#0a0a0a;font-style:italic;letter-spacing:1.0px;left:761.50px;width:1500px;text-align:right;">95%</div>
<div class="t" style="top:611.94px;font-size:17.2px;color:#0a0a0a;font-style:italic;letter-spacing:1.0px;left:898.60px;width:1500px;text-align:right;">95%</div>
<div class="t" style="top:611.94px;font-size:17.2px;color:#0a0a0a;font-style:italic;letter-spacing:1.0px;left:1035.30px;width:1500px;text-align:right;">95%</div>
<div class="t" style="top:611.94px;font-size:17.2px;color:#0a0a0a;font-style:italic;letter-spacing:1.0px;left:1172.30px;width:1500px;text-align:right;">95%</div>
<div class="t" style="top:611.94px;font-size:17.2px;color:#0a0a0a;font-style:italic;letter-spacing:1.0px;left:1309.40px;width:1500px;text-align:right;">95%</div>
<div class="t" style="top:634.84px;font-size:17.2px;color:#0a0a0a;left:74.50px;">Variable Expenses</div>
<div class="t" style="top:634.84px;font-size:17.2px;color:#0a0a0a;letter-spacing:0.9px;left:-837.60px;width:1500px;text-align:right;">(444)</div>
<div class="t" style="top:634.84px;font-size:17.2px;color:#0a0a0a;letter-spacing:0.9px;left:-717.70px;width:1500px;text-align:right;">(563)</div>
<div class="t" style="top:634.84px;font-size:17.2px;color:#0a0a0a;letter-spacing:0.9px;left:-597.40px;width:1500px;text-align:right;">(672)</div>
<div class="t" style="top:634.84px;font-size:17.2px;color:#0a0a0a;letter-spacing:0.9px;left:-477.50px;width:1500px;text-align:right;">(773)</div>
<div class="t" style="top:634.84px;font-size:17.2px;color:#0a0a0a;letter-spacing:0.9px;left:-357.30px;width:1500px;text-align:right;">(809)</div>
<div class="t" style="top:634.84px;font-size:17.2px;color:#0a0a0a;letter-spacing:0.9px;left:-189.40px;width:1500px;text-align:right;">(37)</div>
<div class="t" style="top:634.84px;font-size:17.2px;color:#0a0a0a;letter-spacing:0.9px;left:-52.50px;width:1500px;text-align:right;">(37)</div>
<div class="t" style="top:634.84px;font-size:17.2px;color:#0a0a0a;letter-spacing:0.9px;left:84.50px;width:1500px;text-align:right;">(37)</div>
<div class="t" style="top:634.84px;font-size:17.2px;color:#0a0a0a;letter-spacing:0.9px;left:221.50px;width:1500px;text-align:right;">(37)</div>
<div class="t" style="top:634.84px;font-size:17.2px;color:#0a0a0a;letter-spacing:0.9px;left:358.70px;width:1500px;text-align:right;">(37)</div>
<div class="t" style="top:634.84px;font-size:17.2px;color:#0a0a0a;letter-spacing:0.9px;left:495.50px;width:1500px;text-align:right;">(37)</div>
<div class="t" style="top:634.84px;font-size:17.2px;color:#0a0a0a;letter-spacing:0.9px;left:632.30px;width:1500px;text-align:right;">(37)</div>
<div class="t" style="top:634.84px;font-size:17.2px;color:#0a0a0a;letter-spacing:0.9px;left:769.60px;width:1500px;text-align:right;">(37)</div>
<div class="t" style="top:634.84px;font-size:17.2px;color:#0a0a0a;letter-spacing:0.9px;left:906.70px;width:1500px;text-align:right;">(37)</div>
<div class="t" style="top:634.84px;font-size:17.2px;color:#0a0a0a;letter-spacing:0.9px;left:1043.40px;width:1500px;text-align:right;">(37)</div>
<div class="t" style="top:634.84px;font-size:17.2px;color:#0a0a0a;letter-spacing:0.9px;left:1180.40px;width:1500px;text-align:right;">(37)</div>
<div class="t" style="top:634.84px;font-size:17.2px;color:#0a0a0a;letter-spacing:0.9px;left:1317.50px;width:1500px;text-align:right;">(37)</div>
<div class="t" style="top:657.94px;font-size:17.2px;color:#0a0a0a;font-style:italic;letter-spacing:0.5px;left:92.80px;">% of Revenue</div>
<div class="t" style="top:657.84px;font-size:17.2px;color:#0a0a0a;font-style:italic;letter-spacing:1.0px;left:-838.30px;width:1500px;text-align:right;">(12%)</div>
<div class="t" style="top:657.84px;font-size:17.2px;color:#0a0a0a;font-style:italic;letter-spacing:1.0px;left:-718.40px;width:1500px;text-align:right;">(11%)</div>
<div class="t" style="top:657.84px;font-size:17.2px;color:#0a0a0a;font-style:italic;letter-spacing:1.0px;left:-598.10px;width:1500px;text-align:right;">(9%)</div>
<div class="t" style="top:657.84px;font-size:17.2px;color:#0a0a0a;font-style:italic;letter-spacing:1.0px;left:-478.20px;width:1500px;text-align:right;">(8%)</div>
<div class="t" style="top:657.84px;font-size:17.2px;color:#0a0a0a;font-style:italic;letter-spacing:1.0px;left:-358.00px;width:1500px;text-align:right;">(6%)</div>
<div class="t" style="top:657.84px;font-size:17.2px;color:#0a0a0a;font-style:italic;letter-spacing:1.0px;left:-190.10px;width:1500px;text-align:right;">(12%)</div>
<div class="t" style="top:657.84px;font-size:17.2px;color:#0a0a0a;font-style:italic;letter-spacing:1.0px;left:-53.20px;width:1500px;text-align:right;">(12%)</div>
<div class="t" style="top:657.84px;font-size:17.2px;color:#0a0a0a;font-style:italic;letter-spacing:1.0px;left:83.80px;width:1500px;text-align:right;">(12%)</div>
<div class="t" style="top:657.84px;font-size:17.2px;color:#0a0a0a;font-style:italic;letter-spacing:1.0px;left:220.80px;width:1500px;text-align:right;">(12%)</div>
<div class="t" style="top:657.84px;font-size:17.2px;color:#0a0a0a;font-style:italic;letter-spacing:1.0px;left:358.00px;width:1500px;text-align:right;">(12%)</div>
<div class="t" style="top:657.84px;font-size:17.2px;color:#0a0a0a;font-style:italic;letter-spacing:1.0px;left:494.80px;width:1500px;text-align:right;">(12%)</div>
<div class="t" style="top:657.84px;font-size:17.2px;color:#0a0a0a;font-style:italic;letter-spacing:1.0px;left:631.60px;width:1500px;text-align:right;">(12%)</div>
<div class="t" style="top:657.84px;font-size:17.2px;color:#0a0a0a;font-style:italic;letter-spacing:1.0px;left:768.90px;width:1500px;text-align:right;">(12%)</div>
<div class="t" style="top:657.84px;font-size:17.2px;color:#0a0a0a;font-style:italic;letter-spacing:1.0px;left:906.00px;width:1500px;text-align:right;">(12%)</div>
<div class="t" style="top:657.84px;font-size:17.2px;color:#0a0a0a;font-style:italic;letter-spacing:1.0px;left:1042.70px;width:1500px;text-align:right;">(12%)</div>
<div class="t" style="top:657.84px;font-size:17.2px;color:#0a0a0a;font-style:italic;letter-spacing:1.0px;left:1179.70px;width:1500px;text-align:right;">(12%)</div>
<div class="t" style="top:657.84px;font-size:17.2px;color:#0a0a0a;font-style:italic;letter-spacing:1.0px;left:1316.80px;width:1500px;text-align:right;">(12%)</div>
<div class="a" style="left:70.50px;top:677.50px;width:1073.90px;height:26.20px;background:#4cb2e6;"></div>
<div class="a" style="left:1175.40px;top:677.50px;width:1644.10px;height:26.20px;background:#4cb2e6;"></div>
<div class="t" style="top:681.22px;font-size:21.0px;color:#ffffff;font-weight:700;letter-spacing:0.49px;left:85.50px;-webkit-text-stroke:0.8px #fff;">Contribution Margin</div>
<div class="t" style="top:681.96px;font-size:18.6px;color:#ffffff;font-weight:700;letter-spacing:0.35px;left:-847.35px;width:1500px;text-align:right;-webkit-text-stroke:0.6px #fff;">3,070</div>
<div class="t" style="top:681.96px;font-size:18.6px;color:#ffffff;font-weight:700;letter-spacing:0.35px;left:-727.45px;width:1500px;text-align:right;-webkit-text-stroke:0.6px #fff;">4,555</div>
<div class="t" style="top:681.96px;font-size:18.6px;color:#ffffff;font-weight:700;letter-spacing:0.35px;left:-607.15px;width:1500px;text-align:right;-webkit-text-stroke:0.6px #fff;">6,495</div>
<div class="t" style="top:681.96px;font-size:18.6px;color:#ffffff;font-weight:700;letter-spacing:0.35px;left:-487.25px;width:1500px;text-align:right;-webkit-text-stroke:0.6px #fff;">9,171</div>
<div class="t" style="top:681.96px;font-size:18.6px;color:#ffffff;font-weight:700;letter-spacing:0.35px;left:-367.05px;width:1500px;text-align:right;-webkit-text-stroke:0.6px #fff;">12,272</div>
<div class="t" style="top:681.96px;font-size:18.6px;color:#ffffff;font-weight:700;letter-spacing:0.35px;left:-199.15px;width:1500px;text-align:right;-webkit-text-stroke:0.6px #fff;">256</div>
<div class="t" style="top:681.96px;font-size:18.6px;color:#ffffff;font-weight:700;letter-spacing:0.35px;left:-62.25px;width:1500px;text-align:right;-webkit-text-stroke:0.6px #fff;">256</div>
<div class="t" style="top:681.96px;font-size:18.6px;color:#ffffff;font-weight:700;letter-spacing:0.35px;left:74.75px;width:1500px;text-align:right;-webkit-text-stroke:0.6px #fff;">256</div>
<div class="t" style="top:681.96px;font-size:18.6px;color:#ffffff;font-weight:700;letter-spacing:0.35px;left:211.75px;width:1500px;text-align:right;-webkit-text-stroke:0.6px #fff;">256</div>
<div class="t" style="top:681.96px;font-size:18.6px;color:#ffffff;font-weight:700;letter-spacing:0.35px;left:348.95px;width:1500px;text-align:right;-webkit-text-stroke:0.6px #fff;">256</div>
<div class="t" style="top:681.96px;font-size:18.6px;color:#ffffff;font-weight:700;letter-spacing:0.35px;left:485.75px;width:1500px;text-align:right;-webkit-text-stroke:0.6px #fff;">256</div>
<div class="t" style="top:681.96px;font-size:18.6px;color:#ffffff;font-weight:700;letter-spacing:0.35px;left:622.55px;width:1500px;text-align:right;-webkit-text-stroke:0.6px #fff;">256</div>
<div class="t" style="top:681.96px;font-size:18.6px;color:#ffffff;font-weight:700;letter-spacing:0.35px;left:759.85px;width:1500px;text-align:right;-webkit-text-stroke:0.6px #fff;">256</div>
<div class="t" style="top:681.96px;font-size:18.6px;color:#ffffff;font-weight:700;letter-spacing:0.35px;left:896.95px;width:1500px;text-align:right;-webkit-text-stroke:0.6px #fff;">256</div>
<div class="t" style="top:681.96px;font-size:18.6px;color:#ffffff;font-weight:700;letter-spacing:0.35px;left:1033.65px;width:1500px;text-align:right;-webkit-text-stroke:0.6px #fff;">256</div>
<div class="t" style="top:681.96px;font-size:18.6px;color:#ffffff;font-weight:700;letter-spacing:0.35px;left:1170.65px;width:1500px;text-align:right;-webkit-text-stroke:0.6px #fff;">256</div>
<div class="t" style="top:681.96px;font-size:18.6px;color:#ffffff;font-weight:700;letter-spacing:0.35px;left:1307.75px;width:1500px;text-align:right;-webkit-text-stroke:0.6px #fff;">256</div>
<div class="t" style="top:707.14px;font-size:17.2px;color:#0a0a0a;font-style:italic;letter-spacing:0.5px;left:92.80px;">Contribution Margin %</div>
<div class="t" style="top:707.04px;font-size:17.2px;color:#0a0a0a;font-style:italic;letter-spacing:1.0px;left:-845.70px;width:1500px;text-align:right;">83%</div>
<div class="t" style="top:707.04px;font-size:17.2px;color:#0a0a0a;font-style:italic;letter-spacing:1.0px;left:-725.80px;width:1500px;text-align:right;">85%</div>
<div class="t" style="top:707.04px;font-size:17.2px;color:#0a0a0a;font-style:italic;letter-spacing:1.0px;left:-605.50px;width:1500px;text-align:right;">87%</div>
<div class="t" style="top:707.04px;font-size:17.2px;color:#0a0a0a;font-style:italic;letter-spacing:1.0px;left:-485.60px;width:1500px;text-align:right;">89%</div>
<div class="t" style="top:707.04px;font-size:17.2px;color:#0a0a0a;font-style:italic;letter-spacing:1.0px;left:-365.40px;width:1500px;text-align:right;">91%</div>
<div class="t" style="top:707.04px;font-size:17.2px;color:#0a0a0a;font-style:italic;letter-spacing:1.0px;left:-197.50px;width:1500px;text-align:right;">83%</div>
<div class="t" style="top:707.04px;font-size:17.2px;color:#0a0a0a;font-style:italic;letter-spacing:1.0px;left:-60.60px;width:1500px;text-align:right;">83%</div>
<div class="t" style="top:707.04px;font-size:17.2px;color:#0a0a0a;font-style:italic;letter-spacing:1.0px;left:76.40px;width:1500px;text-align:right;">83%</div>
<div class="t" style="top:707.04px;font-size:17.2px;color:#0a0a0a;font-style:italic;letter-spacing:1.0px;left:213.40px;width:1500px;text-align:right;">83%</div>
<div class="t" style="top:707.04px;font-size:17.2px;color:#0a0a0a;font-style:italic;letter-spacing:1.0px;left:350.60px;width:1500px;text-align:right;">83%</div>
<div class="t" style="top:707.04px;font-size:17.2px;color:#0a0a0a;font-style:italic;letter-spacing:1.0px;left:487.40px;width:1500px;text-align:right;">83%</div>
<div class="t" style="top:707.04px;font-size:17.2px;color:#0a0a0a;font-style:italic;letter-spacing:1.0px;left:624.20px;width:1500px;text-align:right;">83%</div>
<div class="t" style="top:707.04px;font-size:17.2px;color:#0a0a0a;font-style:italic;letter-spacing:1.0px;left:761.50px;width:1500px;text-align:right;">83%</div>
<div class="t" style="top:707.04px;font-size:17.2px;color:#0a0a0a;font-style:italic;letter-spacing:1.0px;left:898.60px;width:1500px;text-align:right;">83%</div>
<div class="t" style="top:707.04px;font-size:17.2px;color:#0a0a0a;font-style:italic;letter-spacing:1.0px;left:1035.30px;width:1500px;text-align:right;">83%</div>
<div class="t" style="top:707.04px;font-size:17.2px;color:#0a0a0a;font-style:italic;letter-spacing:1.0px;left:1172.30px;width:1500px;text-align:right;">83%</div>
<div class="t" style="top:707.04px;font-size:17.2px;color:#0a0a0a;font-style:italic;letter-spacing:1.0px;left:1309.40px;width:1500px;text-align:right;">83%</div>
<div class="t" style="top:730.04px;font-size:17.2px;color:#0a0a0a;left:74.50px;">Payroll Expenses</div>
<div class="t" style="top:730.04px;font-size:17.2px;color:#0a0a0a;letter-spacing:0.9px;left:-837.60px;width:1500px;text-align:right;">(901)</div>
<div class="t" style="top:730.04px;font-size:17.2px;color:#0a0a0a;letter-spacing:0.9px;left:-717.70px;width:1500px;text-align:right;">(1,023)</div>
<div class="t" style="top:730.04px;font-size:17.2px;color:#0a0a0a;letter-spacing:0.9px;left:-597.40px;width:1500px;text-align:right;">(1,290)</div>
<div class="t" style="top:730.04px;font-size:17.2px;color:#0a0a0a;letter-spacing:0.9px;left:-477.50px;width:1500px;text-align:right;">(1,675)</div>
<div class="t" style="top:730.04px;font-size:17.2px;color:#0a0a0a;letter-spacing:0.9px;left:-357.30px;width:1500px;text-align:right;">(1,830)</div>
<div class="t" style="top:730.04px;font-size:17.2px;color:#0a0a0a;letter-spacing:0.9px;left:-189.40px;width:1500px;text-align:right;">(75)</div>
<div class="t" style="top:730.04px;font-size:17.2px;color:#0a0a0a;letter-spacing:0.9px;left:-52.50px;width:1500px;text-align:right;">(75)</div>
<div class="t" style="top:730.04px;font-size:17.2px;color:#0a0a0a;letter-spacing:0.9px;left:84.50px;width:1500px;text-align:right;">(75)</div>
<div class="t" style="top:730.04px;font-size:17.2px;color:#0a0a0a;letter-spacing:0.9px;left:221.50px;width:1500px;text-align:right;">(75)</div>
<div class="t" style="top:730.04px;font-size:17.2px;color:#0a0a0a;letter-spacing:0.9px;left:358.70px;width:1500px;text-align:right;">(75)</div>
<div class="t" style="top:730.04px;font-size:17.2px;color:#0a0a0a;letter-spacing:0.9px;left:495.50px;width:1500px;text-align:right;">(75)</div>
<div class="t" style="top:730.04px;font-size:17.2px;color:#0a0a0a;letter-spacing:0.9px;left:632.30px;width:1500px;text-align:right;">(75)</div>
<div class="t" style="top:730.04px;font-size:17.2px;color:#0a0a0a;letter-spacing:0.9px;left:769.60px;width:1500px;text-align:right;">(75)</div>
<div class="t" style="top:730.04px;font-size:17.2px;color:#0a0a0a;letter-spacing:0.9px;left:906.70px;width:1500px;text-align:right;">(75)</div>
<div class="t" style="top:730.04px;font-size:17.2px;color:#0a0a0a;letter-spacing:0.9px;left:1043.40px;width:1500px;text-align:right;">(75)</div>
<div class="t" style="top:730.04px;font-size:17.2px;color:#0a0a0a;letter-spacing:0.9px;left:1180.40px;width:1500px;text-align:right;">(75)</div>
<div class="t" style="top:730.04px;font-size:17.2px;color:#0a0a0a;letter-spacing:0.9px;left:1317.50px;width:1500px;text-align:right;">(75)</div>
<div class="t" style="top:753.14px;font-size:17.2px;color:#0a0a0a;font-style:italic;letter-spacing:0.5px;left:92.80px;">% of Revenue</div>
<div class="t" style="top:753.04px;font-size:17.2px;color:#0a0a0a;font-style:italic;letter-spacing:1.0px;left:-838.30px;width:1500px;text-align:right;">(24%)</div>
<div class="t" style="top:753.04px;font-size:17.2px;color:#0a0a0a;font-style:italic;letter-spacing:1.0px;left:-718.40px;width:1500px;text-align:right;">(19%)</div>
<div class="t" style="top:753.04px;font-size:17.2px;color:#0a0a0a;font-style:italic;letter-spacing:1.0px;left:-598.10px;width:1500px;text-align:right;">(17%)</div>
<div class="t" style="top:753.04px;font-size:17.2px;color:#0a0a0a;font-style:italic;letter-spacing:1.0px;left:-478.20px;width:1500px;text-align:right;">(16%)</div>
<div class="t" style="top:753.04px;font-size:17.2px;color:#0a0a0a;font-style:italic;letter-spacing:1.0px;left:-358.00px;width:1500px;text-align:right;">(14%)</div>
<div class="t" style="top:753.04px;font-size:17.2px;color:#0a0a0a;font-style:italic;letter-spacing:1.0px;left:-190.10px;width:1500px;text-align:right;">(24%)</div>
<div class="t" style="top:753.04px;font-size:17.2px;color:#0a0a0a;font-style:italic;letter-spacing:1.0px;left:-53.20px;width:1500px;text-align:right;">(24%)</div>
<div class="t" style="top:753.04px;font-size:17.2px;color:#0a0a0a;font-style:italic;letter-spacing:1.0px;left:83.80px;width:1500px;text-align:right;">(24%)</div>
<div class="t" style="top:753.04px;font-size:17.2px;color:#0a0a0a;font-style:italic;letter-spacing:1.0px;left:220.80px;width:1500px;text-align:right;">(24%)</div>
<div class="t" style="top:753.04px;font-size:17.2px;color:#0a0a0a;font-style:italic;letter-spacing:1.0px;left:358.00px;width:1500px;text-align:right;">(24%)</div>
<div class="t" style="top:753.04px;font-size:17.2px;color:#0a0a0a;font-style:italic;letter-spacing:1.0px;left:494.80px;width:1500px;text-align:right;">(24%)</div>
<div class="t" style="top:753.04px;font-size:17.2px;color:#0a0a0a;font-style:italic;letter-spacing:1.0px;left:631.60px;width:1500px;text-align:right;">(24%)</div>
<div class="t" style="top:753.04px;font-size:17.2px;color:#0a0a0a;font-style:italic;letter-spacing:1.0px;left:768.90px;width:1500px;text-align:right;">(24%)</div>
<div class="t" style="top:753.04px;font-size:17.2px;color:#0a0a0a;font-style:italic;letter-spacing:1.0px;left:906.00px;width:1500px;text-align:right;">(24%)</div>
<div class="t" style="top:753.04px;font-size:17.2px;color:#0a0a0a;font-style:italic;letter-spacing:1.0px;left:1042.70px;width:1500px;text-align:right;">(24%)</div>
<div class="t" style="top:753.04px;font-size:17.2px;color:#0a0a0a;font-style:italic;letter-spacing:1.0px;left:1179.70px;width:1500px;text-align:right;">(24%)</div>
<div class="t" style="top:753.04px;font-size:17.2px;color:#0a0a0a;font-style:italic;letter-spacing:1.0px;left:1316.80px;width:1500px;text-align:right;">(24%)</div>
<div class="t" style="top:780.84px;font-size:17.2px;color:#0a0a0a;left:74.50px;">Fixed Expenses</div>
<div class="t" style="top:780.84px;font-size:17.2px;color:#0a0a0a;letter-spacing:0.9px;left:-837.60px;width:1500px;text-align:right;">(160)</div>
<div class="t" style="top:780.84px;font-size:17.2px;color:#0a0a0a;letter-spacing:0.9px;left:-717.70px;width:1500px;text-align:right;">(160)</div>
<div class="t" style="top:780.84px;font-size:17.2px;color:#0a0a0a;letter-spacing:0.9px;left:-597.40px;width:1500px;text-align:right;">(160)</div>
<div class="t" style="top:780.84px;font-size:17.2px;color:#0a0a0a;letter-spacing:0.9px;left:-477.50px;width:1500px;text-align:right;">(160)</div>
<div class="t" style="top:780.84px;font-size:17.2px;color:#0a0a0a;letter-spacing:0.9px;left:-357.30px;width:1500px;text-align:right;">(160)</div>
<div class="t" style="top:780.84px;font-size:17.2px;color:#0a0a0a;letter-spacing:0.9px;left:-189.40px;width:1500px;text-align:right;">(13)</div>
<div class="t" style="top:780.84px;font-size:17.2px;color:#0a0a0a;letter-spacing:0.9px;left:-52.50px;width:1500px;text-align:right;">(13)</div>
<div class="t" style="top:780.84px;font-size:17.2px;color:#0a0a0a;letter-spacing:0.9px;left:84.50px;width:1500px;text-align:right;">(13)</div>
<div class="t" style="top:780.84px;font-size:17.2px;color:#0a0a0a;letter-spacing:0.9px;left:221.50px;width:1500px;text-align:right;">(13)</div>
<div class="t" style="top:780.84px;font-size:17.2px;color:#0a0a0a;letter-spacing:0.9px;left:358.70px;width:1500px;text-align:right;">(13)</div>
<div class="t" style="top:780.84px;font-size:17.2px;color:#0a0a0a;letter-spacing:0.9px;left:495.50px;width:1500px;text-align:right;">(13)</div>
<div class="t" style="top:780.84px;font-size:17.2px;color:#0a0a0a;letter-spacing:0.9px;left:632.30px;width:1500px;text-align:right;">(13)</div>
<div class="t" style="top:780.84px;font-size:17.2px;color:#0a0a0a;letter-spacing:0.9px;left:769.60px;width:1500px;text-align:right;">(13)</div>
<div class="t" style="top:780.84px;font-size:17.2px;color:#0a0a0a;letter-spacing:0.9px;left:906.70px;width:1500px;text-align:right;">(13)</div>
<div class="t" style="top:780.84px;font-size:17.2px;color:#0a0a0a;letter-spacing:0.9px;left:1043.40px;width:1500px;text-align:right;">(13)</div>
<div class="t" style="top:780.84px;font-size:17.2px;color:#0a0a0a;letter-spacing:0.9px;left:1180.40px;width:1500px;text-align:right;">(13)</div>
<div class="t" style="top:780.84px;font-size:17.2px;color:#0a0a0a;letter-spacing:0.9px;left:1317.50px;width:1500px;text-align:right;">(13)</div>
<div class="t" style="top:804.44px;font-size:17.2px;color:#0a0a0a;font-style:italic;letter-spacing:0.5px;left:92.80px;">% of Revenue</div>
<div class="t" style="top:804.34px;font-size:17.2px;color:#0a0a0a;font-style:italic;letter-spacing:1.0px;left:-838.30px;width:1500px;text-align:right;">(4%)</div>
<div class="t" style="top:804.34px;font-size:17.2px;color:#0a0a0a;font-style:italic;letter-spacing:1.0px;left:-718.40px;width:1500px;text-align:right;">(3%)</div>
<div class="t" style="top:804.34px;font-size:17.2px;color:#0a0a0a;font-style:italic;letter-spacing:1.0px;left:-598.10px;width:1500px;text-align:right;">(2%)</div>
<div class="t" style="top:804.34px;font-size:17.2px;color:#0a0a0a;font-style:italic;letter-spacing:1.0px;left:-478.20px;width:1500px;text-align:right;">(2%)</div>
<div class="t" style="top:804.34px;font-size:17.2px;color:#0a0a0a;font-style:italic;letter-spacing:1.0px;left:-358.00px;width:1500px;text-align:right;">(1%)</div>
<div class="t" style="top:804.34px;font-size:17.2px;color:#0a0a0a;font-style:italic;letter-spacing:1.0px;left:-190.10px;width:1500px;text-align:right;">(4%)</div>
<div class="t" style="top:804.34px;font-size:17.2px;color:#0a0a0a;font-style:italic;letter-spacing:1.0px;left:-53.20px;width:1500px;text-align:right;">(4%)</div>
<div class="t" style="top:804.34px;font-size:17.2px;color:#0a0a0a;font-style:italic;letter-spacing:1.0px;left:83.80px;width:1500px;text-align:right;">(4%)</div>
<div class="t" style="top:804.34px;font-size:17.2px;color:#0a0a0a;font-style:italic;letter-spacing:1.0px;left:220.80px;width:1500px;text-align:right;">(4%)</div>
<div class="t" style="top:804.34px;font-size:17.2px;color:#0a0a0a;font-style:italic;letter-spacing:1.0px;left:358.00px;width:1500px;text-align:right;">(4%)</div>
<div class="t" style="top:804.34px;font-size:17.2px;color:#0a0a0a;font-style:italic;letter-spacing:1.0px;left:494.80px;width:1500px;text-align:right;">(4%)</div>
<div class="t" style="top:804.34px;font-size:17.2px;color:#0a0a0a;font-style:italic;letter-spacing:1.0px;left:631.60px;width:1500px;text-align:right;">(4%)</div>
<div class="t" style="top:804.34px;font-size:17.2px;color:#0a0a0a;font-style:italic;letter-spacing:1.0px;left:768.90px;width:1500px;text-align:right;">(4%)</div>
<div class="t" style="top:804.34px;font-size:17.2px;color:#0a0a0a;font-style:italic;letter-spacing:1.0px;left:906.00px;width:1500px;text-align:right;">(4%)</div>
<div class="t" style="top:804.34px;font-size:17.2px;color:#0a0a0a;font-style:italic;letter-spacing:1.0px;left:1042.70px;width:1500px;text-align:right;">(4%)</div>
<div class="t" style="top:804.34px;font-size:17.2px;color:#0a0a0a;font-style:italic;letter-spacing:1.0px;left:1179.70px;width:1500px;text-align:right;">(4%)</div>
<div class="t" style="top:804.34px;font-size:17.2px;color:#0a0a0a;font-style:italic;letter-spacing:1.0px;left:1316.80px;width:1500px;text-align:right;">(4%)</div>
<div class="a" style="left:70.50px;top:828.40px;width:1073.90px;height:26.00px;background:#4cb2e6;"></div>
<div class="a" style="left:1175.40px;top:828.40px;width:1644.10px;height:26.00px;background:#4cb2e6;"></div>
<div class="t" style="top:831.92px;font-size:21.0px;color:#ffffff;font-weight:700;letter-spacing:0.25px;left:85.50px;-webkit-text-stroke:0.8px #fff;">EBITDA</div>
<div class="t" style="top:832.66px;font-size:18.6px;color:#ffffff;font-weight:700;letter-spacing:0.35px;left:-847.35px;width:1500px;text-align:right;-webkit-text-stroke:0.6px #fff;">2,010</div>
<div class="t" style="top:832.66px;font-size:18.6px;color:#ffffff;font-weight:700;letter-spacing:0.35px;left:-727.45px;width:1500px;text-align:right;-webkit-text-stroke:0.6px #fff;">3,372</div>
<div class="t" style="top:832.66px;font-size:18.6px;color:#ffffff;font-weight:700;letter-spacing:0.35px;left:-607.15px;width:1500px;text-align:right;-webkit-text-stroke:0.6px #fff;">5,046</div>
<div class="t" style="top:832.66px;font-size:18.6px;color:#ffffff;font-weight:700;letter-spacing:0.35px;left:-487.25px;width:1500px;text-align:right;-webkit-text-stroke:0.6px #fff;">7,336</div>
<div class="t" style="top:832.66px;font-size:18.6px;color:#ffffff;font-weight:700;letter-spacing:0.35px;left:-367.05px;width:1500px;text-align:right;-webkit-text-stroke:0.6px #fff;">10,282</div>
<div class="t" style="top:832.66px;font-size:18.6px;color:#ffffff;font-weight:700;letter-spacing:0.35px;left:-199.15px;width:1500px;text-align:right;-webkit-text-stroke:0.6px #fff;">167</div>
<div class="t" style="top:832.66px;font-size:18.6px;color:#ffffff;font-weight:700;letter-spacing:0.35px;left:-62.25px;width:1500px;text-align:right;-webkit-text-stroke:0.6px #fff;">167</div>
<div class="t" style="top:832.66px;font-size:18.6px;color:#ffffff;font-weight:700;letter-spacing:0.35px;left:74.75px;width:1500px;text-align:right;-webkit-text-stroke:0.6px #fff;">167</div>
<div class="t" style="top:832.66px;font-size:18.6px;color:#ffffff;font-weight:700;letter-spacing:0.35px;left:211.75px;width:1500px;text-align:right;-webkit-text-stroke:0.6px #fff;">167</div>
<div class="t" style="top:832.66px;font-size:18.6px;color:#ffffff;font-weight:700;letter-spacing:0.35px;left:348.95px;width:1500px;text-align:right;-webkit-text-stroke:0.6px #fff;">167</div>
<div class="t" style="top:832.66px;font-size:18.6px;color:#ffffff;font-weight:700;letter-spacing:0.35px;left:485.75px;width:1500px;text-align:right;-webkit-text-stroke:0.6px #fff;">167</div>
<div class="t" style="top:832.66px;font-size:18.6px;color:#ffffff;font-weight:700;letter-spacing:0.35px;left:622.55px;width:1500px;text-align:right;-webkit-text-stroke:0.6px #fff;">167</div>
<div class="t" style="top:832.66px;font-size:18.6px;color:#ffffff;font-weight:700;letter-spacing:0.35px;left:759.85px;width:1500px;text-align:right;-webkit-text-stroke:0.6px #fff;">167</div>
<div class="t" style="top:832.66px;font-size:18.6px;color:#ffffff;font-weight:700;letter-spacing:0.35px;left:896.95px;width:1500px;text-align:right;-webkit-text-stroke:0.6px #fff;">167</div>
<div class="t" style="top:832.66px;font-size:18.6px;color:#ffffff;font-weight:700;letter-spacing:0.35px;left:1033.65px;width:1500px;text-align:right;-webkit-text-stroke:0.6px #fff;">167</div>
<div class="t" style="top:832.66px;font-size:18.6px;color:#ffffff;font-weight:700;letter-spacing:0.35px;left:1170.65px;width:1500px;text-align:right;-webkit-text-stroke:0.6px #fff;">167</div>
<div class="t" style="top:832.66px;font-size:18.6px;color:#ffffff;font-weight:700;letter-spacing:0.35px;left:1307.75px;width:1500px;text-align:right;-webkit-text-stroke:0.6px #fff;">167</div>
<div class="t" style="top:857.84px;font-size:17.2px;color:#0a0a0a;font-style:italic;letter-spacing:0.7px;left:74.50px;">EBITDA %</div>
<div class="t" style="top:857.74px;font-size:17.2px;color:#0a0a0a;font-style:italic;letter-spacing:1.0px;left:-845.70px;width:1500px;text-align:right;">54%</div>
<div class="t" style="top:857.74px;font-size:17.2px;color:#0a0a0a;font-style:italic;letter-spacing:1.0px;left:-725.80px;width:1500px;text-align:right;">63%</div>
<div class="t" style="top:857.74px;font-size:17.2px;color:#0a0a0a;font-style:italic;letter-spacing:1.0px;left:-605.50px;width:1500px;text-align:right;">68%</div>
<div class="t" style="top:857.74px;font-size:17.2px;color:#0a0a0a;font-style:italic;letter-spacing:1.0px;left:-485.60px;width:1500px;text-align:right;">71%</div>
<div class="t" style="top:857.74px;font-size:17.2px;color:#0a0a0a;font-style:italic;letter-spacing:1.0px;left:-365.40px;width:1500px;text-align:right;">76%</div>
<div class="t" style="top:857.74px;font-size:17.2px;color:#0a0a0a;font-style:italic;letter-spacing:1.0px;left:-197.50px;width:1500px;text-align:right;">54%</div>
<div class="t" style="top:857.74px;font-size:17.2px;color:#0a0a0a;font-style:italic;letter-spacing:1.0px;left:-60.60px;width:1500px;text-align:right;">54%</div>
<div class="t" style="top:857.74px;font-size:17.2px;color:#0a0a0a;font-style:italic;letter-spacing:1.0px;left:76.40px;width:1500px;text-align:right;">54%</div>
<div class="t" style="top:857.74px;font-size:17.2px;color:#0a0a0a;font-style:italic;letter-spacing:1.0px;left:213.40px;width:1500px;text-align:right;">54%</div>
<div class="t" style="top:857.74px;font-size:17.2px;color:#0a0a0a;font-style:italic;letter-spacing:1.0px;left:350.60px;width:1500px;text-align:right;">54%</div>
<div class="t" style="top:857.74px;font-size:17.2px;color:#0a0a0a;font-style:italic;letter-spacing:1.0px;left:487.40px;width:1500px;text-align:right;">54%</div>
<div class="t" style="top:857.74px;font-size:17.2px;color:#0a0a0a;font-style:italic;letter-spacing:1.0px;left:624.20px;width:1500px;text-align:right;">54%</div>
<div class="t" style="top:857.74px;font-size:17.2px;color:#0a0a0a;font-style:italic;letter-spacing:1.0px;left:761.50px;width:1500px;text-align:right;">54%</div>
<div class="t" style="top:857.74px;font-size:17.2px;color:#0a0a0a;font-style:italic;letter-spacing:1.0px;left:898.60px;width:1500px;text-align:right;">54%</div>
<div class="t" style="top:857.74px;font-size:17.2px;color:#0a0a0a;font-style:italic;letter-spacing:1.0px;left:1035.30px;width:1500px;text-align:right;">54%</div>
<div class="t" style="top:857.74px;font-size:17.2px;color:#0a0a0a;font-style:italic;letter-spacing:1.0px;left:1172.30px;width:1500px;text-align:right;">54%</div>
<div class="t" style="top:857.74px;font-size:17.2px;color:#0a0a0a;font-style:italic;letter-spacing:1.0px;left:1309.40px;width:1500px;text-align:right;">54%</div>
<div class="t" style="top:880.84px;font-size:17.2px;color:#0a0a0a;letter-spacing:0.3px;left:74.50px;">Depreciation &amp; Amortization</div>
<div class="t" style="top:880.84px;font-size:17.2px;color:#0a0a0a;letter-spacing:0.9px;left:-837.60px;width:1500px;text-align:right;">(14)</div>
<div class="t" style="top:880.84px;font-size:17.2px;color:#0a0a0a;letter-spacing:0.9px;left:-717.70px;width:1500px;text-align:right;">(16)</div>
<div class="t" style="top:880.84px;font-size:17.2px;color:#0a0a0a;letter-spacing:0.9px;left:-597.40px;width:1500px;text-align:right;">(16)</div>
<div class="t" style="top:880.84px;font-size:17.2px;color:#0a0a0a;letter-spacing:0.9px;left:-477.50px;width:1500px;text-align:right;">(16)</div>
<div class="t" style="top:880.84px;font-size:17.2px;color:#0a0a0a;letter-spacing:0.9px;left:-357.30px;width:1500px;text-align:right;">(16)</div>
<div class="t" style="top:880.84px;font-size:17.2px;color:#0a0a0a;letter-spacing:0.9px;left:-189.40px;width:1500px;text-align:right;">(0)</div>
<div class="t" style="top:880.84px;font-size:17.2px;color:#0a0a0a;letter-spacing:0.9px;left:-52.50px;width:1500px;text-align:right;">(1)</div>
<div class="t" style="top:880.84px;font-size:17.2px;color:#0a0a0a;letter-spacing:0.9px;left:84.50px;width:1500px;text-align:right;">(1)</div>
<div class="t" style="top:880.84px;font-size:17.2px;color:#0a0a0a;letter-spacing:0.9px;left:221.50px;width:1500px;text-align:right;">(1)</div>
<div class="t" style="top:880.84px;font-size:17.2px;color:#0a0a0a;letter-spacing:0.9px;left:358.70px;width:1500px;text-align:right;">(1)</div>
<div class="t" style="top:880.84px;font-size:17.2px;color:#0a0a0a;letter-spacing:0.9px;left:495.50px;width:1500px;text-align:right;">(1)</div>
<div class="t" style="top:880.84px;font-size:17.2px;color:#0a0a0a;letter-spacing:0.9px;left:632.30px;width:1500px;text-align:right;">(1)</div>
<div class="t" style="top:880.84px;font-size:17.2px;color:#0a0a0a;letter-spacing:0.9px;left:769.60px;width:1500px;text-align:right;">(1)</div>
<div class="t" style="top:880.84px;font-size:17.2px;color:#0a0a0a;letter-spacing:0.9px;left:906.70px;width:1500px;text-align:right;">(1)</div>
<div class="t" style="top:880.84px;font-size:17.2px;color:#0a0a0a;letter-spacing:0.9px;left:1043.40px;width:1500px;text-align:right;">(1)</div>
<div class="t" style="top:880.84px;font-size:17.2px;color:#0a0a0a;letter-spacing:0.9px;left:1180.40px;width:1500px;text-align:right;">(1)</div>
<div class="t" style="top:880.84px;font-size:17.2px;color:#0a0a0a;letter-spacing:0.9px;left:1317.50px;width:1500px;text-align:right;">(1)</div>
<div class="t" style="top:903.74px;font-size:17.2px;color:#0a0a0a;left:74.50px;">EBIT</div>
<div class="t" style="top:903.74px;font-size:17.2px;color:#0a0a0a;letter-spacing:0.4px;left:-846.20px;width:1500px;text-align:right;">1,996</div>
<div class="t" style="top:903.74px;font-size:17.2px;color:#0a0a0a;letter-spacing:0.4px;left:-726.30px;width:1500px;text-align:right;">3,356</div>
<div class="t" style="top:903.74px;font-size:17.2px;color:#0a0a0a;letter-spacing:0.4px;left:-606.00px;width:1500px;text-align:right;">5,030</div>
<div class="t" style="top:903.74px;font-size:17.2px;color:#0a0a0a;letter-spacing:0.4px;left:-486.10px;width:1500px;text-align:right;">7,320</div>
<div class="t" style="top:903.74px;font-size:17.2px;color:#0a0a0a;letter-spacing:0.4px;left:-365.90px;width:1500px;text-align:right;">10,266</div>
<div class="t" style="top:903.74px;font-size:17.2px;color:#0a0a0a;letter-spacing:0.4px;left:-198.00px;width:1500px;text-align:right;">167</div>
<div class="t" style="top:903.74px;font-size:17.2px;color:#0a0a0a;letter-spacing:0.4px;left:-61.10px;width:1500px;text-align:right;">167</div>
<div class="t" style="top:903.74px;font-size:17.2px;color:#0a0a0a;letter-spacing:0.4px;left:75.90px;width:1500px;text-align:right;">167</div>
<div class="t" style="top:903.74px;font-size:17.2px;color:#0a0a0a;letter-spacing:0.4px;left:212.90px;width:1500px;text-align:right;">166</div>
<div class="t" style="top:903.74px;font-size:17.2px;color:#0a0a0a;letter-spacing:0.4px;left:350.10px;width:1500px;text-align:right;">166</div>
<div class="t" style="top:903.74px;font-size:17.2px;color:#0a0a0a;letter-spacing:0.4px;left:486.90px;width:1500px;text-align:right;">166</div>
<div class="t" style="top:903.74px;font-size:17.2px;color:#0a0a0a;letter-spacing:0.4px;left:623.70px;width:1500px;text-align:right;">166</div>
<div class="t" style="top:903.74px;font-size:17.2px;color:#0a0a0a;letter-spacing:0.4px;left:761.00px;width:1500px;text-align:right;">166</div>
<div class="t" style="top:903.74px;font-size:17.2px;color:#0a0a0a;letter-spacing:0.4px;left:898.10px;width:1500px;text-align:right;">166</div>
<div class="t" style="top:903.74px;font-size:17.2px;color:#0a0a0a;letter-spacing:0.4px;left:1034.80px;width:1500px;text-align:right;">166</div>
<div class="t" style="top:903.74px;font-size:17.2px;color:#0a0a0a;letter-spacing:0.4px;left:1171.80px;width:1500px;text-align:right;">166</div>
<div class="t" style="top:903.74px;font-size:17.2px;color:#0a0a0a;letter-spacing:0.4px;left:1308.90px;width:1500px;text-align:right;">166</div>
<div class="t" style="top:926.84px;font-size:17.2px;color:#0a0a0a;letter-spacing:0.23px;left:74.50px;">Net Interest Expense</div>
<div class="t" style="top:926.84px;font-size:17.2px;color:#0a0a0a;letter-spacing:0.9px;left:-837.60px;width:1500px;text-align:right;">(18)</div>
<div class="t" style="top:926.84px;font-size:17.2px;color:#0a0a0a;letter-spacing:0.9px;left:-717.70px;width:1500px;text-align:right;">(17)</div>
<div class="t" style="top:926.84px;font-size:17.2px;color:#0a0a0a;letter-spacing:0.9px;left:-597.40px;width:1500px;text-align:right;">(14)</div>
<div class="t" style="top:926.84px;font-size:17.2px;color:#0a0a0a;letter-spacing:0.9px;left:-477.50px;width:1500px;text-align:right;">(11)</div>
<div class="t" style="top:926.84px;font-size:17.2px;color:#0a0a0a;letter-spacing:0.9px;left:-357.30px;width:1500px;text-align:right;">(7)</div>
<div class="t" style="top:926.84px;font-size:17.2px;color:#0a0a0a;letter-spacing:0.9px;left:-189.40px;width:1500px;text-align:right;">(1)</div>
<div class="t" style="top:926.84px;font-size:17.2px;color:#0a0a0a;letter-spacing:0.9px;left:-52.50px;width:1500px;text-align:right;">(1)</div>
<div class="t" style="top:926.84px;font-size:17.2px;color:#0a0a0a;letter-spacing:0.9px;left:84.50px;width:1500px;text-align:right;">(2)</div>
<div class="t" style="top:926.84px;font-size:17.2px;color:#0a0a0a;letter-spacing:0.9px;left:221.50px;width:1500px;text-align:right;">(2)</div>
<div class="t" style="top:926.84px;font-size:17.2px;color:#0a0a0a;letter-spacing:0.9px;left:358.70px;width:1500px;text-align:right;">(2)</div>
<div class="t" style="top:926.84px;font-size:17.2px;color:#0a0a0a;letter-spacing:0.9px;left:495.50px;width:1500px;text-align:right;">(2)</div>
<div class="t" style="top:926.84px;font-size:17.2px;color:#0a0a0a;letter-spacing:0.9px;left:632.30px;width:1500px;text-align:right;">(2)</div>
<div class="t" style="top:926.84px;font-size:17.2px;color:#0a0a0a;letter-spacing:0.9px;left:769.60px;width:1500px;text-align:right;">(2)</div>
<div class="t" style="top:926.84px;font-size:17.2px;color:#0a0a0a;letter-spacing:0.9px;left:906.70px;width:1500px;text-align:right;">(2)</div>
<div class="t" style="top:926.84px;font-size:17.2px;color:#0a0a0a;letter-spacing:0.9px;left:1043.40px;width:1500px;text-align:right;">(2)</div>
<div class="t" style="top:926.84px;font-size:17.2px;color:#0a0a0a;letter-spacing:0.9px;left:1180.40px;width:1500px;text-align:right;">(2)</div>
<div class="t" style="top:926.84px;font-size:17.2px;color:#0a0a0a;letter-spacing:0.9px;left:1317.50px;width:1500px;text-align:right;">(2)</div>
<div class="t" style="top:949.94px;font-size:17.2px;color:#0a0a0a;letter-spacing:0.43px;left:74.50px;">Net Profit Before Tax</div>
<div class="t" style="top:949.94px;font-size:17.2px;color:#0a0a0a;letter-spacing:0.4px;left:-846.20px;width:1500px;text-align:right;">1,978</div>
<div class="t" style="top:949.94px;font-size:17.2px;color:#0a0a0a;letter-spacing:0.4px;left:-726.30px;width:1500px;text-align:right;">3,339</div>
<div class="t" style="top:949.94px;font-size:17.2px;color:#0a0a0a;letter-spacing:0.4px;left:-606.00px;width:1500px;text-align:right;">5,016</div>
<div class="t" style="top:949.94px;font-size:17.2px;color:#0a0a0a;letter-spacing:0.4px;left:-486.10px;width:1500px;text-align:right;">7,309</div>
<div class="t" style="top:949.94px;font-size:17.2px;color:#0a0a0a;letter-spacing:0.4px;left:-365.90px;width:1500px;text-align:right;">10,259</div>
<div class="t" style="top:949.94px;font-size:17.2px;color:#0a0a0a;letter-spacing:0.4px;left:-198.00px;width:1500px;text-align:right;">166</div>
<div class="t" style="top:949.94px;font-size:17.2px;color:#0a0a0a;letter-spacing:0.4px;left:-61.10px;width:1500px;text-align:right;">166</div>
<div class="t" style="top:949.94px;font-size:17.2px;color:#0a0a0a;letter-spacing:0.4px;left:75.90px;width:1500px;text-align:right;">165</div>
<div class="t" style="top:949.94px;font-size:17.2px;color:#0a0a0a;letter-spacing:0.4px;left:212.90px;width:1500px;text-align:right;">165</div>
<div class="t" style="top:949.94px;font-size:17.2px;color:#0a0a0a;letter-spacing:0.4px;left:350.10px;width:1500px;text-align:right;">165</div>
<div class="t" style="top:949.94px;font-size:17.2px;color:#0a0a0a;letter-spacing:0.4px;left:486.90px;width:1500px;text-align:right;">164</div>
<div class="t" style="top:949.94px;font-size:17.2px;color:#0a0a0a;letter-spacing:0.4px;left:623.70px;width:1500px;text-align:right;">165</div>
<div class="t" style="top:949.94px;font-size:17.2px;color:#0a0a0a;letter-spacing:0.4px;left:761.00px;width:1500px;text-align:right;">165</div>
<div class="t" style="top:949.94px;font-size:17.2px;color:#0a0a0a;letter-spacing:0.4px;left:898.10px;width:1500px;text-align:right;">165</div>
<div class="t" style="top:949.94px;font-size:17.2px;color:#0a0a0a;letter-spacing:0.4px;left:1034.80px;width:1500px;text-align:right;">165</div>
<div class="t" style="top:949.94px;font-size:17.2px;color:#0a0a0a;letter-spacing:0.4px;left:1171.80px;width:1500px;text-align:right;">165</div>
<div class="t" style="top:949.94px;font-size:17.2px;color:#0a0a0a;letter-spacing:0.4px;left:1308.90px;width:1500px;text-align:right;">165</div>
<div class="t" style="top:972.74px;font-size:17.2px;color:#0a0a0a;left:74.50px;">Tax Expense</div>
<div class="t" style="top:972.74px;font-size:17.2px;color:#0a0a0a;letter-spacing:0.9px;left:-837.60px;width:1500px;text-align:right;">(494)</div>
<div class="t" style="top:972.74px;font-size:17.2px;color:#0a0a0a;letter-spacing:0.9px;left:-717.70px;width:1500px;text-align:right;">(835)</div>
<div class="t" style="top:972.74px;font-size:17.2px;color:#0a0a0a;letter-spacing:0.9px;left:-597.40px;width:1500px;text-align:right;">(1,254)</div>
<div class="t" style="top:972.74px;font-size:17.2px;color:#0a0a0a;letter-spacing:0.9px;left:-477.50px;width:1500px;text-align:right;">(1,827)</div>
<div class="t" style="top:972.74px;font-size:17.2px;color:#0a0a0a;letter-spacing:0.9px;left:-357.30px;width:1500px;text-align:right;">(2,565)</div>
<div class="t" style="top:972.74px;font-size:17.2px;color:#0a0a0a;letter-spacing:0.9px;left:-189.40px;width:1500px;text-align:right;">(42)</div>
<div class="t" style="top:972.74px;font-size:17.2px;color:#0a0a0a;letter-spacing:0.9px;left:-52.50px;width:1500px;text-align:right;">(41)</div>
<div class="t" style="top:972.74px;font-size:17.2px;color:#0a0a0a;letter-spacing:0.9px;left:84.50px;width:1500px;text-align:right;">(41)</div>
<div class="t" style="top:972.74px;font-size:17.2px;color:#0a0a0a;letter-spacing:0.9px;left:221.50px;width:1500px;text-align:right;">(41)</div>
<div class="t" style="top:972.74px;font-size:17.2px;color:#0a0a0a;letter-spacing:0.9px;left:358.70px;width:1500px;text-align:right;">(41)</div>
<div class="t" style="top:972.74px;font-size:17.2px;color:#0a0a0a;letter-spacing:0.9px;left:495.50px;width:1500px;text-align:right;">(41)</div>
<div class="t" style="top:972.74px;font-size:17.2px;color:#0a0a0a;letter-spacing:0.9px;left:632.30px;width:1500px;text-align:right;">(41)</div>
<div class="t" style="top:972.74px;font-size:17.2px;color:#0a0a0a;letter-spacing:0.9px;left:769.60px;width:1500px;text-align:right;">(41)</div>
<div class="t" style="top:972.74px;font-size:17.2px;color:#0a0a0a;letter-spacing:0.9px;left:906.70px;width:1500px;text-align:right;">(41)</div>
<div class="t" style="top:972.74px;font-size:17.2px;color:#0a0a0a;letter-spacing:0.9px;left:1043.40px;width:1500px;text-align:right;">(41)</div>
<div class="t" style="top:972.74px;font-size:17.2px;color:#0a0a0a;letter-spacing:0.9px;left:1180.40px;width:1500px;text-align:right;">(41)</div>
<div class="t" style="top:972.74px;font-size:17.2px;color:#0a0a0a;letter-spacing:0.9px;left:1317.50px;width:1500px;text-align:right;">(41)</div>
<div class="a" style="left:70.50px;top:992.40px;width:1073.90px;height:25.90px;background:#4cb2e6;"></div>
<div class="a" style="left:1175.40px;top:992.40px;width:1644.10px;height:25.90px;background:#4cb2e6;"></div>
<div class="t" style="top:995.82px;font-size:21.0px;color:#ffffff;font-weight:700;letter-spacing:0.8px;left:85.50px;-webkit-text-stroke:0.8px #fff;">Net Profit After Tax</div>
<div class="t" style="top:996.56px;font-size:18.6px;color:#ffffff;font-weight:700;letter-spacing:0.35px;left:-847.35px;width:1500px;text-align:right;-webkit-text-stroke:0.6px #fff;">1,483</div>
<div class="t" style="top:996.56px;font-size:18.6px;color:#ffffff;font-weight:700;letter-spacing:0.35px;left:-727.45px;width:1500px;text-align:right;-webkit-text-stroke:0.6px #fff;">2,504</div>
<div class="t" style="top:996.56px;font-size:18.6px;color:#ffffff;font-weight:700;letter-spacing:0.35px;left:-607.15px;width:1500px;text-align:right;-webkit-text-stroke:0.6px #fff;">3,762</div>
<div class="t" style="top:996.56px;font-size:18.6px;color:#ffffff;font-weight:700;letter-spacing:0.35px;left:-487.25px;width:1500px;text-align:right;-webkit-text-stroke:0.6px #fff;">5,482</div>
<div class="t" style="top:996.56px;font-size:18.6px;color:#ffffff;font-weight:700;letter-spacing:0.35px;left:-367.05px;width:1500px;text-align:right;-webkit-text-stroke:0.6px #fff;">7,694</div>
<div class="t" style="top:996.56px;font-size:18.6px;color:#ffffff;font-weight:700;letter-spacing:0.35px;left:-199.15px;width:1500px;text-align:right;-webkit-text-stroke:0.6px #fff;">125</div>
<div class="t" style="top:996.56px;font-size:18.6px;color:#ffffff;font-weight:700;letter-spacing:0.35px;left:-62.25px;width:1500px;text-align:right;-webkit-text-stroke:0.6px #fff;">124</div>
<div class="t" style="top:996.56px;font-size:18.6px;color:#ffffff;font-weight:700;letter-spacing:0.35px;left:74.75px;width:1500px;text-align:right;-webkit-text-stroke:0.6px #fff;">124</div>
<div class="t" style="top:996.56px;font-size:18.6px;color:#ffffff;font-weight:700;letter-spacing:0.35px;left:211.75px;width:1500px;text-align:right;-webkit-text-stroke:0.6px #fff;">124</div>
<div class="t" style="top:996.56px;font-size:18.6px;color:#ffffff;font-weight:700;letter-spacing:0.35px;left:348.95px;width:1500px;text-align:right;-webkit-text-stroke:0.6px #fff;">123</div>
<div class="t" style="top:996.56px;font-size:18.6px;color:#ffffff;font-weight:700;letter-spacing:0.35px;left:485.75px;width:1500px;text-align:right;-webkit-text-stroke:0.6px #fff;">123</div>
<div class="t" style="top:996.56px;font-size:18.6px;color:#ffffff;font-weight:700;letter-spacing:0.35px;left:622.55px;width:1500px;text-align:right;-webkit-text-stroke:0.6px #fff;">123</div>
<div class="t" style="top:996.56px;font-size:18.6px;color:#ffffff;font-weight:700;letter-spacing:0.35px;left:759.85px;width:1500px;text-align:right;-webkit-text-stroke:0.6px #fff;">123</div>
<div class="t" style="top:996.56px;font-size:18.6px;color:#ffffff;font-weight:700;letter-spacing:0.35px;left:896.95px;width:1500px;text-align:right;-webkit-text-stroke:0.6px #fff;">123</div>
<div class="t" style="top:996.56px;font-size:18.6px;color:#ffffff;font-weight:700;letter-spacing:0.35px;left:1033.65px;width:1500px;text-align:right;-webkit-text-stroke:0.6px #fff;">123</div>
<div class="t" style="top:996.56px;font-size:18.6px;color:#ffffff;font-weight:700;letter-spacing:0.35px;left:1170.65px;width:1500px;text-align:right;-webkit-text-stroke:0.6px #fff;">123</div>
<div class="t" style="top:996.56px;font-size:18.6px;color:#ffffff;font-weight:700;letter-spacing:0.35px;left:1307.75px;width:1500px;text-align:right;-webkit-text-stroke:0.6px #fff;">123</div>
<div class="t" style="top:1021.94px;font-size:17.2px;color:#0a0a0a;font-style:italic;letter-spacing:0.7px;left:92.80px;">Net Profit After Tax %</div>
<div class="t" style="top:1021.84px;font-size:17.2px;color:#0a0a0a;font-style:italic;letter-spacing:1.0px;left:-845.70px;width:1500px;text-align:right;">40%</div>
<div class="t" style="top:1021.84px;font-size:17.2px;color:#0a0a0a;font-style:italic;letter-spacing:1.0px;left:-725.80px;width:1500px;text-align:right;">47%</div>
<div class="t" style="top:1021.84px;font-size:17.2px;color:#0a0a0a;font-style:italic;letter-spacing:1.0px;left:-605.50px;width:1500px;text-align:right;">50%</div>
<div class="t" style="top:1021.84px;font-size:17.2px;color:#0a0a0a;font-style:italic;letter-spacing:1.0px;left:-485.60px;width:1500px;text-align:right;">53%</div>
<div class="t" style="top:1021.84px;font-size:17.2px;color:#0a0a0a;font-style:italic;letter-spacing:1.0px;left:-365.40px;width:1500px;text-align:right;">57%</div>
<div class="t" style="top:1021.84px;font-size:17.2px;color:#0a0a0a;font-style:italic;letter-spacing:1.0px;left:-197.50px;width:1500px;text-align:right;">40%</div>
<div class="t" style="top:1021.84px;font-size:17.2px;color:#0a0a0a;font-style:italic;letter-spacing:1.0px;left:-60.60px;width:1500px;text-align:right;">40%</div>
<div class="t" style="top:1021.84px;font-size:17.2px;color:#0a0a0a;font-style:italic;letter-spacing:1.0px;left:76.40px;width:1500px;text-align:right;">40%</div>
<div class="t" style="top:1021.84px;font-size:17.2px;color:#0a0a0a;font-style:italic;letter-spacing:1.0px;left:213.40px;width:1500px;text-align:right;">40%</div>
<div class="t" style="top:1021.84px;font-size:17.2px;color:#0a0a0a;font-style:italic;letter-spacing:1.0px;left:350.60px;width:1500px;text-align:right;">40%</div>
<div class="t" style="top:1021.84px;font-size:17.2px;color:#0a0a0a;font-style:italic;letter-spacing:1.0px;left:487.40px;width:1500px;text-align:right;">40%</div>
<div class="t" style="top:1021.84px;font-size:17.2px;color:#0a0a0a;font-style:italic;letter-spacing:1.0px;left:624.20px;width:1500px;text-align:right;">40%</div>
<div class="t" style="top:1021.84px;font-size:17.2px;color:#0a0a0a;font-style:italic;letter-spacing:1.0px;left:761.50px;width:1500px;text-align:right;">40%</div>
<div class="t" style="top:1021.84px;font-size:17.2px;color:#0a0a0a;font-style:italic;letter-spacing:1.0px;left:898.60px;width:1500px;text-align:right;">40%</div>
<div class="t" style="top:1021.84px;font-size:17.2px;color:#0a0a0a;font-style:italic;letter-spacing:1.0px;left:1035.30px;width:1500px;text-align:right;">40%</div>
<div class="t" style="top:1021.84px;font-size:17.2px;color:#0a0a0a;font-style:italic;letter-spacing:1.0px;left:1172.30px;width:1500px;text-align:right;">40%</div>
<div class="t" style="top:1021.84px;font-size:17.2px;color:#0a0a0a;font-style:italic;letter-spacing:1.0px;left:1309.40px;width:1500px;text-align:right;">40%</div>
<div class="a" style="left:70.50px;top:1562.30px;width:1073.90px;height:34.70px;background:#4b50d2;"></div>
<div class="t" style="top:1565.47px;font-size:27.8px;color:#ffffff;font-weight:700;letter-spacing:1.39px;left:-392.55px;width:2000px;text-align:center;-webkit-text-stroke:1.1px #fff;">Balance Sheet ($&#x27;000) - 5 years to December 2030</div>
<div class="a" style="left:1175.40px;top:1562.30px;width:1644.10px;height:34.70px;background:#4b50d2;"></div>
<div class="t" style="top:1565.47px;font-size:27.8px;color:#ffffff;font-weight:700;letter-spacing:1.6px;left:997.45px;width:2000px;text-align:center;-webkit-text-stroke:1.1px #fff;">Balance Sheet ($&#x27;000) - 2026</div>
<div class="a" style="left:70.50px;top:1602.00px;width:1073.90px;height:21.80px;background:#6c72e6;"></div>
<div class="a" style="left:543.70px;top:1602.00px;width:1.20px;height:21.80px;background:#ffffff;"></div>
<div class="a" style="left:663.70px;top:1602.00px;width:1.20px;height:21.80px;background:#ffffff;"></div>
<div class="a" style="left:783.60px;top:1602.00px;width:1.20px;height:21.80px;background:#ffffff;"></div>
<div class="a" style="left:903.90px;top:1602.00px;width:1.20px;height:21.80px;background:#ffffff;"></div>
<div class="a" style="left:1023.80px;top:1602.00px;width:1.20px;height:21.80px;background:#ffffff;"></div>
<div class="t" style="top:1605.51px;font-size:18.3px;color:#ffffff;font-weight:700;letter-spacing:0.2px;left:82.80px;-webkit-text-stroke:0.6px #fff;">Year Ending</div>
<div class="t" style="top:1604.92px;font-size:19.0px;color:#ffffff;font-weight:700;letter-spacing:0.3px;left:-395.70px;width:2000px;text-align:center;-webkit-text-stroke:0.6px #fff;">2026</div>
<div class="t" style="top:1604.92px;font-size:19.0px;color:#ffffff;font-weight:700;letter-spacing:0.3px;left:-275.75px;width:2000px;text-align:center;-webkit-text-stroke:0.6px #fff;">2027</div>
<div class="t" style="top:1604.92px;font-size:19.0px;color:#ffffff;font-weight:700;letter-spacing:0.3px;left:-155.65px;width:2000px;text-align:center;-webkit-text-stroke:0.6px #fff;">2028</div>
<div class="t" style="top:1604.92px;font-size:19.0px;color:#ffffff;font-weight:700;letter-spacing:0.3px;left:-35.55px;width:2000px;text-align:center;-webkit-text-stroke:0.6px #fff;">2029</div>
<div class="t" style="top:1604.92px;font-size:19.0px;color:#ffffff;font-weight:700;letter-spacing:0.3px;left:84.50px;width:2000px;text-align:center;-webkit-text-stroke:0.6px #fff;">2030</div>
<div class="a" style="left:1175.40px;top:1602.00px;width:1644.10px;height:21.80px;background:#6c72e6;"></div>
<div class="a" style="left:1311.90px;top:1602.00px;width:1.20px;height:21.80px;background:#ffffff;"></div>
<div class="a" style="left:1448.80px;top:1602.00px;width:1.20px;height:21.80px;background:#ffffff;"></div>
<div class="a" style="left:1585.80px;top:1602.00px;width:1.20px;height:21.80px;background:#ffffff;"></div>
<div class="a" style="left:1722.80px;top:1602.00px;width:1.20px;height:21.80px;background:#ffffff;"></div>
<div class="a" style="left:1860.00px;top:1602.00px;width:1.20px;height:21.80px;background:#ffffff;"></div>
<div class="a" style="left:1996.80px;top:1602.00px;width:1.20px;height:21.80px;background:#ffffff;"></div>
<div class="a" style="left:2133.60px;top:1602.00px;width:1.20px;height:21.80px;background:#ffffff;"></div>
<div class="a" style="left:2270.90px;top:1602.00px;width:1.20px;height:21.80px;background:#ffffff;"></div>
<div class="a" style="left:2408.00px;top:1602.00px;width:1.20px;height:21.80px;background:#ffffff;"></div>
<div class="a" style="left:2544.70px;top:1602.00px;width:1.20px;height:21.80px;background:#ffffff;"></div>
<div class="a" style="left:2681.70px;top:1602.00px;width:1.20px;height:21.80px;background:#ffffff;"></div>
<div class="t" style="top:1604.92px;font-size:19.0px;color:#ffffff;font-weight:700;letter-spacing:0.3px;left:244.10px;width:2000px;text-align:center;-webkit-text-stroke:0.6px #fff;">Jan</div>
<div class="t" style="top:1604.92px;font-size:19.0px;color:#ffffff;font-weight:700;letter-spacing:0.3px;left:380.95px;width:2000px;text-align:center;-webkit-text-stroke:0.6px #fff;">Feb</div>
<div class="t" style="top:1604.92px;font-size:19.0px;color:#ffffff;font-weight:700;letter-spacing:0.3px;left:517.90px;width:2000px;text-align:center;-webkit-text-stroke:0.6px #fff;">Mar</div>
<div class="t" style="top:1604.92px;font-size:19.0px;color:#ffffff;font-weight:700;letter-spacing:0.3px;left:654.90px;width:2000px;text-align:center;-webkit-text-stroke:0.6px #fff;">Apr</div>
<div class="t" style="top:1604.92px;font-size:19.0px;color:#ffffff;font-weight:700;letter-spacing:0.3px;left:792.00px;width:2000px;text-align:center;-webkit-text-stroke:0.6px #fff;">May</div>
<div class="t" style="top:1604.92px;font-size:19.0px;color:#ffffff;font-weight:700;letter-spacing:0.3px;left:929.00px;width:2000px;text-align:center;-webkit-text-stroke:0.6px #fff;">Jun</div>
<div class="t" style="top:1604.92px;font-size:19.0px;color:#ffffff;font-weight:700;letter-spacing:0.3px;left:1065.80px;width:2000px;text-align:center;-webkit-text-stroke:0.6px #fff;">Jul</div>
<div class="t" style="top:1604.92px;font-size:19.0px;color:#ffffff;font-weight:700;letter-spacing:0.3px;left:1202.85px;width:2000px;text-align:center;-webkit-text-stroke:0.6px #fff;">Aug</div>
<div class="t" style="top:1604.92px;font-size:19.0px;color:#ffffff;font-weight:700;letter-spacing:0.3px;left:1340.05px;width:2000px;text-align:center;-webkit-text-stroke:0.6px #fff;">Sep</div>
<div class="t" style="top:1604.92px;font-size:19.0px;color:#ffffff;font-weight:700;letter-spacing:0.3px;left:1476.95px;width:2000px;text-align:center;-webkit-text-stroke:0.6px #fff;">Oct</div>
<div class="t" style="top:1604.92px;font-size:19.0px;color:#ffffff;font-weight:700;letter-spacing:0.3px;left:1613.80px;width:2000px;text-align:center;-webkit-text-stroke:0.6px #fff;">Nov</div>
<div class="t" style="top:1604.92px;font-size:19.0px;color:#ffffff;font-weight:700;letter-spacing:0.3px;left:1750.85px;width:2000px;text-align:center;-webkit-text-stroke:0.6px #fff;">Dec</div>
<div class="t" style="top:1632.54px;font-size:17.2px;color:#0a0a0a;left:74.50px;">Current Assets</div>
<div class="t" style="top:1632.44px;font-size:17.2px;color:#0a0a0a;letter-spacing:0.4px;left:-846.20px;width:1500px;text-align:right;">2,387</div>
<div class="t" style="top:1632.44px;font-size:17.2px;color:#0a0a0a;letter-spacing:0.4px;left:-726.30px;width:1500px;text-align:right;">4,874</div>
<div class="t" style="top:1632.44px;font-size:17.2px;color:#0a0a0a;letter-spacing:0.4px;left:-606.00px;width:1500px;text-align:right;">8,622</div>
<div class="t" style="top:1632.44px;font-size:17.2px;color:#0a0a0a;letter-spacing:0.4px;left:-486.10px;width:1500px;text-align:right;">14,092</div>
<div class="t" style="top:1632.44px;font-size:17.2px;color:#0a0a0a;letter-spacing:0.4px;left:-365.90px;width:1500px;text-align:right;">21,761</div>
<div class="t" style="top:1632.44px;font-size:17.2px;color:#0a0a0a;letter-spacing:0.4px;left:-198.00px;width:1500px;text-align:right;">1,052</div>
<div class="t" style="top:1632.44px;font-size:17.2px;color:#0a0a0a;letter-spacing:0.4px;left:-61.10px;width:1500px;text-align:right;">1,153</div>
<div class="t" style="top:1632.44px;font-size:17.2px;color:#0a0a0a;letter-spacing:0.4px;left:75.90px;width:1500px;text-align:right;">1,334</div>
<div class="t" style="top:1632.44px;font-size:17.2px;color:#0a0a0a;letter-spacing:0.4px;left:212.90px;width:1500px;text-align:right;">1,432</div>
<div class="t" style="top:1632.44px;font-size:17.2px;color:#0a0a0a;letter-spacing:0.4px;left:350.10px;width:1500px;text-align:right;">1,536</div>
<div class="t" style="top:1632.44px;font-size:17.2px;color:#0a0a0a;letter-spacing:0.4px;left:486.90px;width:1500px;text-align:right;">1,651</div>
<div class="t" style="top:1632.44px;font-size:17.2px;color:#0a0a0a;letter-spacing:0.4px;left:623.70px;width:1500px;text-align:right;">1,772</div>
<div class="t" style="top:1632.44px;font-size:17.2px;color:#0a0a0a;letter-spacing:0.4px;left:761.00px;width:1500px;text-align:right;">1,895</div>
<div class="t" style="top:1632.44px;font-size:17.2px;color:#0a0a0a;letter-spacing:0.4px;left:898.10px;width:1500px;text-align:right;">2,020</div>
<div class="t" style="top:1632.44px;font-size:17.2px;color:#0a0a0a;letter-spacing:0.4px;left:1034.80px;width:1500px;text-align:right;">2,141</div>
<div class="t" style="top:1632.44px;font-size:17.2px;color:#0a0a0a;letter-spacing:0.4px;left:1171.80px;width:1500px;text-align:right;">2,267</div>
<div class="t" style="top:1632.44px;font-size:17.2px;color:#0a0a0a;letter-spacing:0.4px;left:1308.90px;width:1500px;text-align:right;">2,387</div>
<div class="t" style="top:1657.44px;font-size:17.2px;color:#0a0a0a;left:74.50px;">Non-Current Assets</div>
<div class="t" style="top:1657.34px;font-size:17.2px;color:#0a0a0a;letter-spacing:0.4px;left:-846.20px;width:1500px;text-align:right;">147</div>
<div class="t" style="top:1657.34px;font-size:17.2px;color:#0a0a0a;letter-spacing:0.4px;left:-726.30px;width:1500px;text-align:right;">131</div>
<div class="t" style="top:1657.34px;font-size:17.2px;color:#0a0a0a;letter-spacing:0.4px;left:-606.00px;width:1500px;text-align:right;">115</div>
<div class="t" style="top:1657.34px;font-size:17.2px;color:#0a0a0a;letter-spacing:0.4px;left:-486.10px;width:1500px;text-align:right;">99</div>
<div class="t" style="top:1657.34px;font-size:17.2px;color:#0a0a0a;letter-spacing:0.4px;left:-365.90px;width:1500px;text-align:right;">83</div>
<div class="t" style="top:1657.34px;font-size:17.2px;color:#0a0a0a;letter-spacing:0.4px;left:-198.00px;width:1500px;text-align:right;">41</div>
<div class="t" style="top:1657.34px;font-size:17.2px;color:#0a0a0a;letter-spacing:0.4px;left:-61.10px;width:1500px;text-align:right;">71</div>
<div class="t" style="top:1657.34px;font-size:17.2px;color:#0a0a0a;letter-spacing:0.4px;left:75.90px;width:1500px;text-align:right;">105</div>
<div class="t" style="top:1657.34px;font-size:17.2px;color:#0a0a0a;letter-spacing:0.4px;left:212.90px;width:1500px;text-align:right;">131</div>
<div class="t" style="top:1657.34px;font-size:17.2px;color:#0a0a0a;letter-spacing:0.4px;left:350.10px;width:1500px;text-align:right;">146</div>
<div class="t" style="top:1657.34px;font-size:17.2px;color:#0a0a0a;letter-spacing:0.4px;left:486.90px;width:1500px;text-align:right;">155</div>
<div class="t" style="top:1657.34px;font-size:17.2px;color:#0a0a0a;letter-spacing:0.4px;left:623.70px;width:1500px;text-align:right;">154</div>
<div class="t" style="top:1657.34px;font-size:17.2px;color:#0a0a0a;letter-spacing:0.4px;left:761.00px;width:1500px;text-align:right;">153</div>
<div class="t" style="top:1657.34px;font-size:17.2px;color:#0a0a0a;letter-spacing:0.4px;left:898.10px;width:1500px;text-align:right;">151</div>
<div class="t" style="top:1657.34px;font-size:17.2px;color:#0a0a0a;letter-spacing:0.4px;left:1034.80px;width:1500px;text-align:right;">150</div>
<div class="t" style="top:1657.34px;font-size:17.2px;color:#0a0a0a;letter-spacing:0.4px;left:1171.80px;width:1500px;text-align:right;">149</div>
<div class="t" style="top:1657.34px;font-size:17.2px;color:#0a0a0a;letter-spacing:0.4px;left:1308.90px;width:1500px;text-align:right;">147</div>
<div class="a" style="left:70.50px;top:1064.90px;width:1073.90px;height:35.50px;background:#4b50d2;"></div>
<div class="t" style="top:1069.67px;font-size:27.8px;color:#ffffff;font-weight:700;letter-spacing:1.6px;left:-392.55px;width:2000px;text-align:center;-webkit-text-stroke:1.1px #fff;">Income Statement ($&#x27;000) - 5 years to December 2030</div>
<div class="a" style="left:1175.40px;top:1064.90px;width:1644.10px;height:35.50px;background:#4b50d2;"></div>
<div class="t" style="top:1069.67px;font-size:27.8px;color:#ffffff;font-weight:700;letter-spacing:1.98px;left:997.45px;width:2000px;text-align:center;-webkit-text-stroke:1.1px #fff;">Income Statement ($&#x27;000) - 2026</div>
<div class="a" style="left:328.40px;top:1129.80px;width:45.10px;height:2.40px;background:#e9776b;"></div>
<div class="a" style="left:347.15px;top:1127.20px;width:7.6px;height:7.6px;border-radius:50%;background:#e9776b"></div>
<div class="t" style="top:1122.37px;font-size:18.7px;color:#111;font-weight:700;letter-spacing:0.55px;left:378.00px;-webkit-text-stroke:0.6px #111;">Revenue</div>
<div class="a" style="left:489.00px;top:1129.80px;width:46.60px;height:2.40px;background:#5f9e45;"></div>
<div class="a" style="left:508.50px;top:1127.20px;width:7.6px;height:7.6px;border-radius:50%;background:#5f9e45"></div>
<div class="t" style="top:1122.37px;font-size:18.7px;color:#111;font-weight:700;letter-spacing:0.55px;left:544.60px;-webkit-text-stroke:0.6px #111;">EBITDA</div>
<div class="a" style="left:652.80px;top:1129.80px;width:45.90px;height:2.40px;background:#4b50d2;"></div>
<div class="a" style="left:671.95px;top:1127.20px;width:7.6px;height:7.6px;border-radius:50%;background:#4b50d2"></div>
<div class="t" style="top:1122.37px;font-size:18.7px;color:#111;font-weight:700;letter-spacing:0.55px;left:706.80px;-webkit-text-stroke:0.6px #111;">Net Profit After Tax</div>
<svg class="a" style="left:0;top:0" width="2902" height="1762" viewBox="0 0 2902 1762"><path d="M69.5 1204.50 H1043.3" stroke="#5aa6d2" stroke-width="1"/><path d="M69.5 1246.50 H1043.3" stroke="#5aa6d2" stroke-width="1"/><path d="M69.5 1288.50 H1043.3" stroke="#5aa6d2" stroke-width="1"/><path d="M69.5 1330.50 H1043.3" stroke="#5aa6d2" stroke-width="1"/><path d="M69.5 1372.50 H1043.3" stroke="#5aa6d2" stroke-width="1"/><path d="M69.5 1414.50 H1043.3" stroke="#5aa6d2" stroke-width="1"/><path d="M69.5 1456.50 H1043.3" stroke="#5aa6d2" stroke-width="1"/><path d="M69.50 1162.0 V1498.3" stroke="#5aa6d2" stroke-width="1"/><path d="M69.50 1498.3 V1504.3" stroke="#7d9cb4" stroke-width="1"/><path d="M264.50 1162.0 V1498.3" stroke="#5aa6d2" stroke-width="1"/><path d="M264.50 1498.3 V1504.3" stroke="#7d9cb4" stroke-width="1"/><path d="M459.50 1162.0 V1498.3" stroke="#5aa6d2" stroke-width="1"/><path d="M459.50 1498.3 V1504.3" stroke="#7d9cb4" stroke-width="1"/><path d="M653.50 1162.0 V1498.3" stroke="#5aa6d2" stroke-width="1"/><path d="M653.50 1498.3 V1504.3" stroke="#7d9cb4" stroke-width="1"/><path d="M848.50 1162.0 V1498.3" stroke="#5aa6d2" stroke-width="1"/><path d="M848.50 1498.3 V1504.3" stroke="#7d9cb4" stroke-width="1"/><path d="M1043.50 1162.0 V1498.3" stroke="#5aa6d2" stroke-width="1"/><path d="M1043.50 1498.3 V1504.3" stroke="#7d9cb4" stroke-width="1"/><path d="M69.5 1162.50 H1043.3" stroke="#5aa6d2" stroke-width="1"/><path d="M69.5 1498.50 H1043.3" stroke="#53799c" stroke-width="1.3"/><path d="M166.88 1420.55 L361.64 1385.68 L556.40 1341.37 L751.16 1281.72 L945.92 1214.86" stroke="#e9776b" stroke-width="2.6" fill="none" stroke-linejoin="round"/><circle cx="166.88" cy="1420.55" r="5.2" fill="#e9776b"/><circle cx="361.64" cy="1385.68" r="5.2" fill="#e9776b"/><circle cx="556.40" cy="1341.37" r="5.2" fill="#e9776b"/><circle cx="751.16" cy="1281.72" r="5.2" fill="#e9776b"/><circle cx="945.92" cy="1214.86" r="5.2" fill="#e9776b"/><path d="M166.88 1456.05 L361.64 1427.42 L556.40 1392.24 L751.16 1344.11 L945.92 1282.19" stroke="#5f9e45" stroke-width="2.6" fill="none" stroke-linejoin="round"/><circle cx="166.88" cy="1456.05" r="5.2" fill="#5f9e45"/><circle cx="361.64" cy="1427.42" r="5.2" fill="#5f9e45"/><circle cx="556.40" cy="1392.24" r="5.2" fill="#5f9e45"/><circle cx="751.16" cy="1344.11" r="5.2" fill="#5f9e45"/><circle cx="945.92" cy="1282.19" r="5.2" fill="#5f9e45"/><path d="M166.88 1467.13 L361.64 1445.67 L556.40 1419.23 L751.16 1383.08 L945.92 1336.58" stroke="#4b50d2" stroke-width="2.6" fill="none" stroke-linejoin="round"/><circle cx="166.88" cy="1467.13" r="5.2" fill="#4b50d2"/><circle cx="361.64" cy="1445.67" r="5.2" fill="#4b50d2"/><circle cx="556.40" cy="1419.23" r="5.2" fill="#4b50d2"/><circle cx="751.16" cy="1383.08" r="5.2" fill="#4b50d2"/><circle cx="945.92" cy="1336.58" r="5.2" fill="#4b50d2"/></svg>
<div class="t" style="top:1490.06px;font-size:18.0px;color:#111;font-weight:700;letter-spacing:1.5px;left:1066.50px;-webkit-text-stroke:0.6px #111;">-</div>
<div class="t" style="top:1448.03px;font-size:18.0px;color:#111;font-weight:700;letter-spacing:1.5px;left:1066.50px;-webkit-text-stroke:0.6px #111;">2,000</div>
<div class="t" style="top:1405.99px;font-size:18.0px;color:#111;font-weight:700;letter-spacing:1.5px;left:1066.50px;-webkit-text-stroke:0.6px #111;">4,000</div>
<div class="t" style="top:1363.95px;font-size:18.0px;color:#111;font-weight:700;letter-spacing:1.5px;left:1066.50px;-webkit-text-stroke:0.6px #111;">6,000</div>
<div class="t" style="top:1321.91px;font-size:18.0px;color:#111;font-weight:700;letter-spacing:1.5px;left:1066.50px;-webkit-text-stroke:0.6px #111;">8,000</div>
<div class="t" style="top:1279.88px;font-size:18.0px;color:#111;font-weight:700;letter-spacing:1.5px;left:1066.50px;-webkit-text-stroke:0.6px #111;">10,000</div>
<div class="t" style="top:1237.84px;font-size:18.0px;color:#111;font-weight:700;letter-spacing:1.5px;left:1066.50px;-webkit-text-stroke:0.6px #111;">12,000</div>
<div class="t" style="top:1195.80px;font-size:18.0px;color:#111;font-weight:700;letter-spacing:1.5px;left:1066.50px;-webkit-text-stroke:0.6px #111;">14,000</div>
<div class="t" style="top:1153.76px;font-size:18.0px;color:#111;font-weight:700;letter-spacing:1.5px;left:1066.50px;-webkit-text-stroke:0.6px #111;">16,000</div>
<div class="t" style="top:1513.13px;font-size:19.1px;color:#111;font-weight:700;letter-spacing:0.8px;left:-833.12px;width:2000px;text-align:center;-webkit-text-stroke:0.6px #111;">2026</div>
<div class="t" style="top:1513.13px;font-size:19.1px;color:#111;font-weight:700;letter-spacing:0.8px;left:-638.36px;width:2000px;text-align:center;-webkit-text-stroke:0.6px #111;">2027</div>
<div class="t" style="top:1513.13px;font-size:19.1px;color:#111;font-weight:700;letter-spacing:0.8px;left:-443.60px;width:2000px;text-align:center;-webkit-text-stroke:0.6px #111;">2028</div>
<div class="t" style="top:1513.13px;font-size:19.1px;color:#111;font-weight:700;letter-spacing:0.8px;left:-248.84px;width:2000px;text-align:center;-webkit-text-stroke:0.6px #111;">2029</div>
<div class="t" style="top:1513.13px;font-size:19.1px;color:#111;font-weight:700;letter-spacing:0.8px;left:-54.08px;width:2000px;text-align:center;-webkit-text-stroke:0.6px #111;">2030</div>
<div class="a" style="left:1719.00px;top:1130.20px;width:44.70px;height:2.40px;background:#e9776b;"></div>
<div class="a" style="left:1737.55px;top:1127.60px;width:7.6px;height:7.6px;border-radius:50%;background:#e9776b"></div>
<div class="t" style="top:1122.77px;font-size:18.7px;color:#111;font-weight:700;letter-spacing:0.55px;left:1767.00px;-webkit-text-stroke:0.6px #111;">Revenue</div>
<div class="a" style="left:1879.00px;top:1130.20px;width:46.80px;height:2.40px;background:#5f9e45;"></div>
<div class="a" style="left:1898.60px;top:1127.60px;width:7.6px;height:7.6px;border-radius:50%;background:#5f9e45"></div>
<div class="t" style="top:1122.77px;font-size:18.7px;color:#111;font-weight:700;letter-spacing:0.55px;left:1934.00px;-webkit-text-stroke:0.6px #111;">EBITDA</div>
<div class="a" style="left:2041.70px;top:1130.20px;width:46.30px;height:2.40px;background:#4b50d2;"></div>
<div class="a" style="left:2061.05px;top:1127.60px;width:7.6px;height:7.6px;border-radius:50%;background:#4b50d2"></div>
<div class="t" style="top:1122.77px;font-size:18.7px;color:#111;font-weight:700;letter-spacing:0.55px;left:2097.00px;-webkit-text-stroke:0.6px #111;">Net Profit After Tax</div>
<svg class="a" style="left:0;top:0" width="2902" height="1762" viewBox="0 0 2902 1762"><path d="M1175.4 1210.50 H2752.0" stroke="#5aa6d2" stroke-width="1"/><path d="M1175.4 1258.50 H2752.0" stroke="#5aa6d2" stroke-width="1"/><path d="M1175.4 1306.50 H2752.0" stroke="#5aa6d2" stroke-width="1"/><path d="M1175.4 1354.50 H2752.0" stroke="#5aa6d2" stroke-width="1"/><path d="M1175.4 1402.50 H2752.0" stroke="#5aa6d2" stroke-width="1"/><path d="M1175.4 1450.50 H2752.0" stroke="#5aa6d2" stroke-width="1"/><path d="M1175.50 1162.0 V1498.6" stroke="#5aa6d2" stroke-width="1"/><path d="M1306.50 1162.0 V1498.6" stroke="#5aa6d2" stroke-width="1"/><path d="M1438.50 1162.0 V1498.6" stroke="#5aa6d2" stroke-width="1"/><path d="M1569.50 1162.0 V1498.6" stroke="#5aa6d2" stroke-width="1"/><path d="M1700.50 1162.0 V1498.6" stroke="#5aa6d2" stroke-width="1"/><path d="M1832.50 1162.0 V1498.6" stroke="#5aa6d2" stroke-width="1"/><path d="M1963.50 1162.0 V1498.6" stroke="#5aa6d2" stroke-width="1"/><path d="M2095.50 1162.0 V1498.6" stroke="#5aa6d2" stroke-width="1"/><path d="M2226.50 1162.0 V1498.6" stroke="#5aa6d2" stroke-width="1"/><path d="M2357.50 1162.0 V1498.6" stroke="#5aa6d2" stroke-width="1"/><path d="M2489.50 1162.0 V1498.6" stroke="#5aa6d2" stroke-width="1"/><path d="M2620.50 1162.0 V1498.6" stroke="#5aa6d2" stroke-width="1"/><path d="M2752.50 1162.0 V1498.6" stroke="#5aa6d2" stroke-width="1"/><path d="M1175.4 1162.0 H2752.0" stroke="#5f97bf" stroke-width="2"/><path d="M1175.50 1162.0 V1502.6 M2752.50 1162.0 V1502.6" stroke="#4f9fd0" stroke-width="1.2"/><path d="M1175.4 1498.60 H2752.0" stroke="#4aa0d4" stroke-width="2"/><path d="M1241.09 1202.39 L1372.48 1202.39 L1503.86 1202.39 L1635.24 1202.39 L1766.62 1202.39 L1898.01 1202.39 L2029.39 1202.39 L2160.78 1202.39 L2292.16 1202.39 L2423.54 1202.39 L2554.93 1202.39 L2686.31 1202.39" stroke="#e9776b" stroke-width="2.6" fill="none" stroke-linejoin="round"/><circle cx="1241.09" cy="1202.39" r="5.2" fill="#e9776b"/><circle cx="1372.48" cy="1202.39" r="5.2" fill="#e9776b"/><circle cx="1503.86" cy="1202.39" r="5.2" fill="#e9776b"/><circle cx="1635.24" cy="1202.39" r="5.2" fill="#e9776b"/><circle cx="1766.62" cy="1202.39" r="5.2" fill="#e9776b"/><circle cx="1898.01" cy="1202.39" r="5.2" fill="#e9776b"/><circle cx="2029.39" cy="1202.39" r="5.2" fill="#e9776b"/><circle cx="2160.78" cy="1202.39" r="5.2" fill="#e9776b"/><circle cx="2292.16" cy="1202.39" r="5.2" fill="#e9776b"/><circle cx="2423.54" cy="1202.39" r="5.2" fill="#e9776b"/><circle cx="2554.93" cy="1202.39" r="5.2" fill="#e9776b"/><circle cx="2686.31" cy="1202.39" r="5.2" fill="#e9776b"/><path d="M1241.09 1337.99 L1372.48 1337.99 L1503.86 1337.99 L1635.24 1337.99 L1766.62 1337.99 L1898.01 1337.99 L2029.39 1337.99 L2160.78 1337.99 L2292.16 1337.99 L2423.54 1337.99 L2554.93 1337.99 L2686.31 1337.99" stroke="#5f9e45" stroke-width="2.6" fill="none" stroke-linejoin="round"/><circle cx="1241.09" cy="1337.99" r="5.2" fill="#5f9e45"/><circle cx="1372.48" cy="1337.99" r="5.2" fill="#5f9e45"/><circle cx="1503.86" cy="1337.99" r="5.2" fill="#5f9e45"/><circle cx="1635.24" cy="1337.99" r="5.2" fill="#5f9e45"/><circle cx="1766.62" cy="1337.99" r="5.2" fill="#5f9e45"/><circle cx="1898.01" cy="1337.99" r="5.2" fill="#5f9e45"/><circle cx="2029.39" cy="1337.99" r="5.2" fill="#5f9e45"/><circle cx="2160.78" cy="1337.99" r="5.2" fill="#5f9e45"/><circle cx="2292.16" cy="1337.99" r="5.2" fill="#5f9e45"/><circle cx="2423.54" cy="1337.99" r="5.2" fill="#5f9e45"/><circle cx="2554.93" cy="1337.99" r="5.2" fill="#5f9e45"/><circle cx="2686.31" cy="1337.99" r="5.2" fill="#5f9e45"/><path d="M1241.09 1378.39 L1372.48 1379.06 L1503.86 1379.06 L1635.24 1379.06 L1766.62 1379.06 L1898.01 1380.41 L2029.39 1379.83 L2160.78 1379.06 L2292.16 1379.06 L2423.54 1379.06 L2554.93 1379.06 L2686.31 1379.06" stroke="#4b50d2" stroke-width="2.6" fill="none" stroke-linejoin="round"/><circle cx="1241.09" cy="1378.39" r="5.2" fill="#4b50d2"/><circle cx="1372.48" cy="1379.06" r="5.2" fill="#4b50d2"/><circle cx="1503.86" cy="1379.06" r="5.2" fill="#4b50d2"/><circle cx="1635.24" cy="1379.06" r="5.2" fill="#4b50d2"/><circle cx="1766.62" cy="1379.06" r="5.2" fill="#4b50d2"/><circle cx="1898.01" cy="1380.41" r="5.2" fill="#4b50d2"/><circle cx="2029.39" cy="1379.83" r="5.2" fill="#4b50d2"/><circle cx="2160.78" cy="1379.06" r="5.2" fill="#4b50d2"/><circle cx="2292.16" cy="1379.06" r="5.2" fill="#4b50d2"/><circle cx="2423.54" cy="1379.06" r="5.2" fill="#4b50d2"/><circle cx="2554.93" cy="1379.06" r="5.2" fill="#4b50d2"/><circle cx="2686.31" cy="1379.06" r="5.2" fill="#4b50d2"/></svg>
<div class="t" style="top:1490.36px;font-size:18.0px;color:#111;font-weight:700;letter-spacing:1.5px;left:2774.40px;-webkit-text-stroke:0.6px #111;">-</div>
<div class="t" style="top:1442.28px;font-size:18.0px;color:#111;font-weight:700;letter-spacing:1.5px;left:2774.40px;-webkit-text-stroke:0.6px #111;">50</div>
<div class="t" style="top:1394.19px;font-size:18.0px;color:#111;font-weight:700;letter-spacing:1.5px;left:2774.40px;-webkit-text-stroke:0.6px #111;">100</div>
<div class="t" style="top:1346.11px;font-size:18.0px;color:#111;font-weight:700;letter-spacing:1.5px;left:2774.40px;-webkit-text-stroke:0.6px #111;">150</div>
<div class="t" style="top:1298.02px;font-size:18.0px;color:#111;font-weight:700;letter-spacing:1.5px;left:2774.40px;-webkit-text-stroke:0.6px #111;">200</div>
<div class="t" style="top:1249.93px;font-size:18.0px;color:#111;font-weight:700;letter-spacing:1.5px;left:2774.40px;-webkit-text-stroke:0.6px #111;">250</div>
<div class="t" style="top:1201.85px;font-size:18.0px;color:#111;font-weight:700;letter-spacing:1.5px;left:2774.40px;-webkit-text-stroke:0.6px #111;">300</div>
<div class="t" style="top:1153.76px;font-size:18.0px;color:#111;font-weight:700;letter-spacing:1.5px;left:2774.40px;-webkit-text-stroke:0.6px #111;">350</div>
<div class="t" style="top:1512.83px;font-size:19.1px;color:#111;font-weight:700;letter-spacing:0.8px;left:241.09px;width:2000px;text-align:center;-webkit-text-stroke:0.6px #111;">Jan</div>
<div class="t" style="top:1512.83px;font-size:19.1px;color:#111;font-weight:700;letter-spacing:0.8px;left:372.48px;width:2000px;text-align:center;-webkit-text-stroke:0.6px #111;">Feb</div>
<div class="t" style="top:1512.83px;font-size:19.1px;color:#111;font-weight:700;letter-spacing:0.8px;left:503.86px;width:2000px;text-align:center;-webkit-text-stroke:0.6px #111;">Mar</div>
<div class="t" style="top:1512.83px;font-size:19.1px;color:#111;font-weight:700;letter-spacing:0.8px;left:635.24px;width:2000px;text-align:center;-webkit-text-stroke:0.6px #111;">Apr</div>
<div class="t" style="top:1512.83px;font-size:19.1px;color:#111;font-weight:700;letter-spacing:0.8px;left:766.62px;width:2000px;text-align:center;-webkit-text-stroke:0.6px #111;">May</div>
<div class="t" style="top:1512.83px;font-size:19.1px;color:#111;font-weight:700;letter-spacing:0.8px;left:898.01px;width:2000px;text-align:center;-webkit-text-stroke:0.6px #111;">Jun</div>
<div class="t" style="top:1512.83px;font-size:19.1px;color:#111;font-weight:700;letter-spacing:0.8px;left:1029.39px;width:2000px;text-align:center;-webkit-text-stroke:0.6px #111;">Jul</div>
<div class="t" style="top:1512.83px;font-size:19.1px;color:#111;font-weight:700;letter-spacing:0.8px;left:1160.78px;width:2000px;text-align:center;-webkit-text-stroke:0.6px #111;">Aug</div>
<div class="t" style="top:1512.83px;font-size:19.1px;color:#111;font-weight:700;letter-spacing:0.8px;left:1292.16px;width:2000px;text-align:center;-webkit-text-stroke:0.6px #111;">Sep</div>
<div class="t" style="top:1512.83px;font-size:19.1px;color:#111;font-weight:700;letter-spacing:0.8px;left:1423.54px;width:2000px;text-align:center;-webkit-text-stroke:0.6px #111;">Oct</div>
<div class="t" style="top:1512.83px;font-size:19.1px;color:#111;font-weight:700;letter-spacing:0.8px;left:1554.93px;width:2000px;text-align:center;-webkit-text-stroke:0.6px #111;">Nov</div>
<div class="t" style="top:1512.83px;font-size:19.1px;color:#111;font-weight:700;letter-spacing:0.8px;left:1686.31px;width:2000px;text-align:center;-webkit-text-stroke:0.6px #111;">Dec</div>
<div class="a" style="left:2860.00px;top:278.00px;width:31.00px;height:1392.00px;background:#0a0a0a;"></div>
<div class="a" style="left:2861px;top:279px;width:29px;height:1391px;background:#151515;border-radius:14px 14px 0 0"></div>
<svg class="a" style="left:2866px;top:283px;" width="20" height="16" viewBox="0 0 20 16"><path d="M3.5 12.5 L10 3 L16.5 12.5 Z" fill="#9b9b9b" stroke="#9b9b9b" stroke-width="1.5" stroke-linejoin="round"/></svg>
<div class="a" style="left:2870px;top:304px;width:12px;height:530px;background:#9a9a9a;border-radius:6px"></div>
<svg class="a" style="left:2866px;top:1652px;" width="20" height="16" viewBox="0 0 20 16"><path d="M3.5 3 L10 12.5 L16.5 3 Z" fill="#9b9b9b" stroke="#9b9b9b" stroke-width="1.5" stroke-linejoin="round"/></svg>
<div class="a" style="left:1580.00px;top:1670.00px;width:142.00px;height:12.00px;background:#ffffff;"></div>
<div class="a" style="left:11px;top:1670px;width:1583.5px;height:48px;background:#0a0a0a;border-top-right-radius:7px"></div>
<div class="a" style="left:1708px;top:1670px;width:1183px;height:48px;background:#0a0a0a;border-top-left-radius:7px"></div>
<div class="a" style="left:1594.50px;top:1700.00px;width:113.50px;height:18.00px;background:#0a0a0a;"></div>
<div class="a" style="left:11.00px;top:1717.60px;width:2880.00px;height:1.00px;background:#262626;"></div>
<svg class="a" style="left:44px;top:1684px;" width="14" height="20" viewBox="0 0 14 20"><path d="M10 3 L3.5 10 L10 17" stroke="#a8a8a8" stroke-width="1.7" fill="none"/></svg>
<svg class="a" style="left:93px;top:1684px;" width="14" height="20" viewBox="0 0 14 20"><path d="M4 3 L10.5 10 L4 17" stroke="#d8d8d8" stroke-width="1.7" fill="none"/></svg>
<div class="t" style="top:1685.38px;font-size:20.7px;color:#f0f0f0;left:190.50px;">Contents</div>
<div class="a" style="left:291.50px;top:1680.00px;width:1.10px;height:27.70px;background:#7c7c7c;"></div>
<div class="a" style="left:432.50px;top:1680.00px;width:1.10px;height:27.70px;background:#7c7c7c;"></div>
<div class="a" style="left:551.50px;top:1680.00px;width:1.10px;height:27.70px;background:#7c7c7c;"></div>
<div class="a" style="left:722.50px;top:1680.00px;width:1.10px;height:27.70px;background:#7c7c7c;"></div>
<div class="a" style="left:825.10px;top:1680.00px;width:1.10px;height:27.70px;background:#7c7c7c;"></div>
<div class="a" style="left:925.10px;top:1680.00px;width:1.10px;height:27.70px;background:#7c7c7c;"></div>
<div class="a" style="left:1051.10px;top:1680.00px;width:1.10px;height:27.70px;background:#7c7c7c;"></div>
<div class="a" style="left:1153.40px;top:1680.00px;width:1.10px;height:27.70px;background:#7c7c7c;"></div>
<div class="a" style="left:1208.50px;top:1680.00px;width:1.10px;height:27.70px;background:#7c7c7c;"></div>
<div class="a" style="left:1269.50px;top:1680.00px;width:1.10px;height:27.70px;background:#7c7c7c;"></div>
<div class="a" style="left:1331.00px;top:1680.00px;width:1.10px;height:27.70px;background:#7c7c7c;"></div>
<div class="a" style="left:1459.20px;top:1680.00px;width:1.10px;height:27.70px;background:#7c7c7c;"></div>
<div class="a" style="left:1587.50px;top:1680.00px;width:1.10px;height:27.70px;background:#7c7c7c;"></div>
<div class="a" style="left:1714.10px;top:1680.00px;width:1.10px;height:27.70px;background:#7c7c7c;"></div>
<div class="a" style="left:1774.50px;top:1680.00px;width:1.10px;height:27.70px;background:#7c7c7c;"></div>
<div class="a" style="left:1860.20px;top:1680.00px;width:1.10px;height:27.70px;background:#7c7c7c;"></div>
<div class="a" style="left:1958.30px;top:1680.00px;width:1.10px;height:27.70px;background:#7c7c7c;"></div>
<div class="a" style="left:2035.50px;top:1680.00px;width:1.10px;height:27.70px;background:#7c7c7c;"></div>
<div class="a" style="left:298.7px;top:1676px;width:128.3px;height:35.5px;background:#fde96b;border-radius:6px"></div>
<div class="t" style="top:1685.46px;font-size:20.6px;color:#1a1a1a;left:-637.15px;width:2000px;text-align:center;">Dashboard</div>
<div class="a" style="left:440px;top:1676px;width:105.5px;height:35.5px;background:#fde96b;border-radius:6px"></div>
<div class="t" style="top:1685.46px;font-size:20.6px;color:#1a1a1a;left:-507.25px;width:2000px;text-align:center;">Revenue</div>
<div class="a" style="left:559px;top:1676px;width:157.6px;height:35.5px;background:#fde96b;border-radius:6px"></div>
<div class="t" style="top:1685.46px;font-size:20.6px;color:#1a1a1a;left:-362.20px;width:2000px;text-align:center;">COGS &amp; OPEX</div>
<div class="a" style="left:730.2px;top:1676px;width:88.3px;height:35.5px;background:#fde96b;border-radius:6px"></div>
<div class="t" style="top:1685.46px;font-size:20.6px;color:#1a1a1a;left:-225.65px;width:2000px;text-align:center;">Payroll</div>
<div class="a" style="left:832.5px;top:1676px;width:86.0px;height:35.5px;background:#fde96b;border-radius:6px"></div>
<div class="t" style="top:1685.46px;font-size:20.6px;color:#1a1a1a;left:-124.50px;width:2000px;text-align:center;">CAPEX</div>
<div class="a" style="left:932px;top:1676px;width:112.8px;height:35.5px;background:#fde96b;border-radius:6px"></div>
<div class="t" style="top:1685.46px;font-size:20.6px;color:#1a1a1a;left:-11.60px;width:2000px;text-align:center;">CapTable</div>
<div class="a" style="left:1058px;top:1676px;width:89.4px;height:35.5px;background:#fde96b;border-radius:6px"></div>
<div class="t" style="top:1685.46px;font-size:20.6px;color:#1a1a1a;left:102.70px;width:2000px;text-align:center;">Capital</div>
<div class="a" style="left:1161px;top:1676px;width:41.6px;height:35.5px;background:#4cb3e8;border-radius:6px"></div>
<div class="t" style="top:1685.46px;font-size:20.6px;color:#1a1a1a;left:181.80px;width:2000px;text-align:center;">IS</div>
<div class="a" style="left:1216px;top:1676px;width:47.0px;height:35.5px;background:#4cb3e8;border-radius:6px"></div>
<div class="t" style="top:1685.46px;font-size:20.6px;color:#1a1a1a;left:239.50px;width:2000px;text-align:center;">CF</div>
<div class="a" style="left:1277px;top:1676px;width:47.0px;height:35.5px;background:#4cb3e8;border-radius:6px"></div>
<div class="t" style="top:1685.46px;font-size:20.6px;color:#1a1a1a;left:300.50px;width:2000px;text-align:center;">BS</div>
<div class="a" style="left:1338px;top:1676px;width:114.6px;height:35.5px;background:#4cb3e8;border-radius:6px"></div>
<div class="t" style="top:1685.46px;font-size:20.6px;color:#1a1a1a;left:395.30px;width:2000px;text-align:center;">Scenarios</div>
<div class="a" style="left:1466px;top:1676px;width:114.5px;height:35.5px;background:#4cb3e8;border-radius:6px"></div>
<div class="t" style="top:1685.46px;font-size:20.6px;color:#1a1a1a;left:523.25px;width:2000px;text-align:center;">Valuation</div>
<div class="a" style="left:1721px;top:1676px;width:48.0px;height:35.5px;background:#4cb3e8;border-radius:6px"></div>
<div class="t" style="top:1685.46px;font-size:20.6px;color:#1a1a1a;left:745.00px;width:2000px;text-align:center;">BE</div>
<div class="a" style="left:1782px;top:1676px;width:71.6px;height:35.5px;background:#4cb3e8;border-radius:6px"></div>
<div class="t" style="top:1685.46px;font-size:20.6px;color:#1a1a1a;left:817.80px;width:2000px;text-align:center;">ROIC</div>
<div class="a" style="left:1867px;top:1676px;width:84.6px;height:35.5px;background:#4cb3e8;border-radius:6px"></div>
<div class="t" style="top:1685.46px;font-size:20.6px;color:#1a1a1a;left:909.30px;width:2000px;text-align:center;">Charts</div>
<div class="a" style="left:1965px;top:1676px;width:63.6px;height:35.5px;background:#4cb3e8;border-radius:6px"></div>
<div class="t" style="top:1685.46px;font-size:20.6px;color:#1a1a1a;left:996.80px;width:2000px;text-align:center;">KPIs</div>
<div class="a" style="left:2042.5px;top:1676px;width:29.5px;height:35.5px;overflow:hidden"><div class="a" style="left:0;top:0;width:60px;height:35.5px;background:#4cb3e8;border-radius:6px"></div><div class="t" style="left:5px;top:9.46px;font-size:20.6px;color:#1a1a1a">Sc</div></div>
<div class="a" style="left:1594px;top:1670px;width:112.5px;height:42px;background:linear-gradient(#ffffff 0%,#f2f8fd 40%,#c9e2f6 100%);border-radius:0 0 7px 7px;border:1px solid #f0f0f0;border-top:none"></div>
<div class="t" style="top:1682.06px;font-size:20.6px;color:#222;left:651.30px;width:2000px;text-align:center;">Summary</div>
<div class="a" style="left:1606.00px;top:1704.80px;width:90.00px;height:3.50px;background:#1e8a4c;border-radius:1px;"></div>
<svg class="a" style="left:2082px;top:1685px;" width="26" height="18" viewBox="0 0 26 18"><circle cx="5" cy="9" r="2.6" fill="#e6e6e6"/><circle cx="12.5" cy="9" r="2.6" fill="#e6e6e6"/><circle cx="20" cy="9" r="2.6" fill="#e6e6e6"/></svg>
<svg class="a" style="left:2131px;top:1682px;" width="24" height="24" viewBox="0 0 24 24"><path d="M12 3 V21 M3 12 H21" stroke="#e6e6e6" stroke-width="1.8"/></svg>
<svg class="a" style="left:2185px;top:1681px;" width="14" height="26" viewBox="0 0 14 26"><circle cx="7" cy="5" r="2.2" fill="#e6e6e6"/><circle cx="7" cy="13" r="2.2" fill="#e6e6e6"/><circle cx="7" cy="21" r="2.2" fill="#e6e6e6"/></svg>
<div class="a" style="left:2216.5px;top:1680.8px;width:641.5px;height:25px;background:#141414;border-radius:12.5px"></div>
<svg class="a" style="left:2220px;top:1686px;" width="18" height="16" viewBox="0 0 18 16"><path d="M13 2 L4 8 L13 14 Z" fill="#9b9b9b" stroke="#9b9b9b" stroke-width="1.3" stroke-linejoin="round"/></svg>
<div class="a" style="left:2241.6px;top:1686.9px;width:537px;height:12.2px;background:#9a9a9a;border-radius:6px"></div>
<svg class="a" style="left:2838px;top:1686px;" width="18" height="16" viewBox="0 0 18 16"><path d="M4 2 L13 8 L4 14 Z" fill="#9b9b9b" stroke="#9b9b9b" stroke-width="1.3" stroke-linejoin="round"/></svg>
<div class="a" style="left:11.00px;top:1718.60px;width:2880.00px;height:32.40px;background:#131313;"></div>
<div class="t" style="top:1728.35px;font-size:15.3px;color:#e8e8e8;left:27.60px;">Ready</div>
<svg class="a" style="left:96px;top:1722px;" width="28" height="28" viewBox="0 0 28 28"><rect x="3.8" y="4.8" width="20.5" height="17" stroke="#f2f2f2" stroke-width="2" fill="none"/><path d="M3.8 8 H24.3" stroke="#f2f2f2" stroke-width="1.6"/><path d="M6.5 11.2 H11 M6.5 14.3 H10 M6.5 17.4 H10" stroke="#f2f2f2" stroke-width="1.5"/><circle cx="17.8" cy="16.7" r="6.3" stroke="#f2f2f2" stroke-width="1.9" fill="#131313"/><circle cx="17.8" cy="16.7" r="2.6" fill="#f2f2f2"/></svg>
<svg class="a" style="left:142px;top:1722px;" width="28" height="28" viewBox="0 0 28 28"><circle cx="13.5" cy="5.6" r="2.6" stroke="#f2f2f2" stroke-width="1.7" fill="none"/><path d="M4.2 9.4 Q5 8 6.5 9.2 L10 12 H17 L20.5 9.2 Q22 8 22.8 9.4 Q23.2 10.6 22 11.6 L17.5 15 V18 L15 20 L12.5 17.8 L10.5 25.5 Q9.6 27 8.2 26 Q7.3 25.2 7.8 24 L10 15 L5 11.6 Q3.8 10.6 4.2 9.4 Z" stroke="#f2f2f2" stroke-width="1.5" fill="none" stroke-linejoin="round"/><path d="M16.5 19.5 L24.5 27.5 M24.5 19.5 L16.5 27.5" stroke="#f2f2f2" stroke-width="1.6"/></svg>
<div class="t" style="top:1728.01px;font-size:15.7px;color:#f0f0f0;font-weight:700;left:173.70px;">Accessibility: Investigate</div>
<div class="a" style="left:2444.50px;top:1719.50px;width:60.10px;height:30.50px;background:#262626;"></div>
<svg class="a" style="left:2462px;top:1723px;" width="24" height="22" viewBox="0 0 24 22"><rect x="2" y="1.5" width="19" height="19" stroke="#fff" stroke-width="1.6" fill="none"/><path d="M8.3 1.5 V20.5 M14.7 1.5 V20.5 M2 7.8 H21 M2 14.2 H21" stroke="#fff" stroke-width="1.5"/></svg>
<svg class="a" style="left:2522px;top:1723px;" width="26" height="22" viewBox="0 0 26 22"><rect x="2" y="1.5" width="21" height="19" stroke="#fff" stroke-width="1.6" fill="none"/><rect x="6" y="5" width="13" height="12" stroke="#fff" stroke-width="1.3" fill="none"/><path d="M9 8.5 H16 M9 11 H16 M9 13.5 H16" stroke="#fff" stroke-width="1.1"/></svg>
<svg class="a" style="left:2581px;top:1723px;" width="26" height="22" viewBox="0 0 26 22"><rect x="2" y="1.5" width="21" height="19" stroke="#fff" stroke-width="1.6" fill="none"/><path d="M8 1.5 V13 H23 M15 1.5 V13" stroke="#fff" stroke-width="1.5" fill="none"/></svg>
<div class="a" style="left:2633.00px;top:1733.50px;width:11.50px;height:1.50px;background:#dcdcdc;"></div>
<div class="a" style="left:2653.00px;top:1734.00px;width:147.00px;height:1.20px;background:#b8b8b8;"></div>
<div class="a" style="left:2727.00px;top:1726.50px;width:7.50px;height:15.90px;background:#b8b8b8;border-radius:1px;"></div>
<div class="a" style="left:2808.60px;top:1734.00px;width:12.20px;height:1.40px;background:#dcdcdc;"></div>
<div class="a" style="left:2814.00px;top:1728.00px;width:1.40px;height:13.00px;background:#dcdcdc;"></div>
<div class="t" style="top:1727.93px;font-size:15.8px;color:#e8e8e8;left:2839.70px;">115%</div>
</body></html>
